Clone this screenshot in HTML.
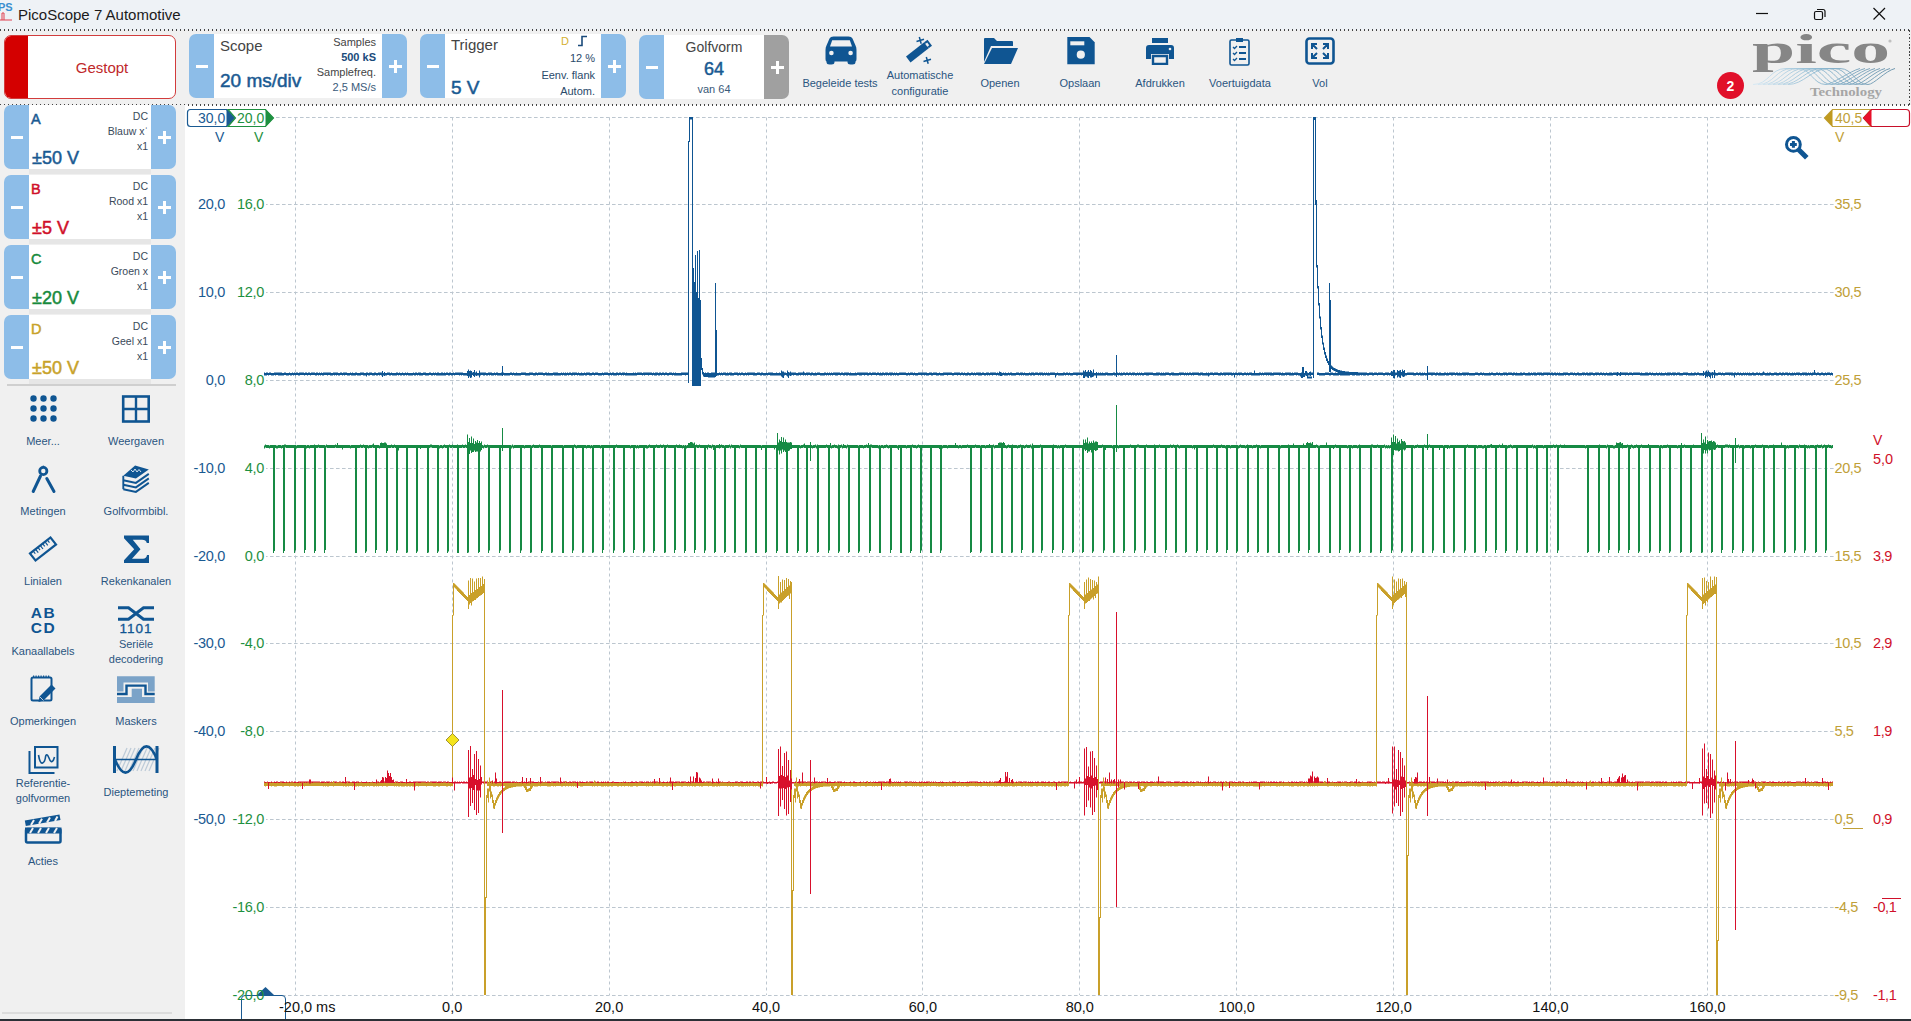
<!DOCTYPE html><html><head><meta charset="utf-8"><style>
*{margin:0;padding:0;box-sizing:border-box}
html,body{width:1911px;height:1021px;overflow:hidden;background:#fff;font-family:"Liberation Sans", sans-serif}
.a{position:absolute;white-space:nowrap}
.t{position:absolute;white-space:nowrap;line-height:1}
.sb{-webkit-text-stroke:.5px currentColor}
</style></head><body><div class="a" style="left:0;top:0;width:1911px;height:30px;background:#eef2f6"></div>
<div class="t" style="left:18px;top:7px;font-size:15px;color:#1b1b1b">PicoScope 7 Automotive</div>
<svg class="a" style="left:0;top:0" width="14" height="24"><text x="-2" y="11" font-family="Liberation Sans" font-size="11" font-weight="bold" fill="#3a8fd0">PS</text><path d="M0 20 H12 M2 20 V13 H4 V20" stroke="#e04050" stroke-width="1" fill="none"/></svg>
<svg class="a" style="left:1740px;top:0" width="171" height="30"><line x1="16" y1="13.5" x2="28" y2="13.5" stroke="#111" stroke-width="1.2"/><rect x="74.5" y="11.5" width="8" height="8" rx="1.5" fill="none" stroke="#111" stroke-width="1.2"/><path d="M77 9.5 H83 Q85 9.5 85 11.5 V17" fill="none" stroke="#111" stroke-width="1.2"/><path d="M133.5 8 L145 19.5 M145 8 L133.5 19.5" stroke="#111" stroke-width="1.2"/></svg>
<div class="a" style="left:0;top:30px;width:1911px;height:75px;background:#f0f0f0"></div>
<div class="a" style="left:0px;top:29px;width:1911px;height:2px;background-image:repeating-linear-gradient(90deg,#1a1a1a 0 1px,transparent 1px 4px);opacity:.8"></div>
<div class="a" style="left:0px;top:104px;width:1911px;height:2px;background-image:repeating-linear-gradient(90deg,#1a1a1a 0 1px,transparent 1px 4px);opacity:.8"></div>
<div class="a" style="left:1909px;top:30px;width:1px;height:75px;background-image:repeating-linear-gradient(180deg,#1a1a1a 0 1.5px,transparent 1.5px 3.5px);opacity:.8"></div>
<div class="a" style="left:4px;top:35px;width:172px;height:64px;border:1.5px solid #d23c3c;border-radius:7px;background:#fff;overflow:hidden"><div class="a" style="left:0;top:0;width:23px;height:62px;background:#d40000"></div></div>
<div class="t" style="left:28px;width:148px;text-align:center;top:60px;font-size:15px;color:#c0282a">Gestopt</div>
<div class="a" style="left:189px;top:34px;width:25px;height:64px;background:#8dbde8;border-radius:7px 0 0 7px"></div>
<div class="a" style="left:214px;top:34px;width:168px;height:64px;background:#fff"></div>
<div class="a" style="left:382px;top:34px;width:25px;height:64px;background:#8dbde8;border-radius:0 7px 7px 0"></div>
<div class="a" style="left:196px;top:64.5px;width:12px;height:3px;background:#fff"></div>
<div class="a" style="left:388.5px;top:64.5px;width:13px;height:3px;background:#fff"></div>
<div class="a" style="left:393.5px;top:59.5px;width:3px;height:13px;background:#fff"></div>
<div class="t" style="left:220px;top:38px;font-size:15px;color:#444">Scope</div>
<div class="t sb" style="left:220px;top:71px;font-size:19px;color:#1a5a92">20 ms/div</div>
<div class="t" style="left:296px;width:80px;text-align:right;top:37px;font-size:11px;color:#444">Samples</div>
<div class="t" style="left:296px;width:80px;text-align:right;top:52px;font-size:11px;color:#1a4a7a;font-weight:bold">500 kS</div>
<div class="t" style="left:296px;width:80px;text-align:right;top:67px;font-size:11px;color:#444">Samplefreq.</div>
<div class="t" style="left:296px;width:80px;text-align:right;top:82px;font-size:11px;color:#3a5a7a">2,5 MS/s</div>
<div class="a" style="left:420px;top:34px;width:25px;height:64px;background:#8dbde8;border-radius:7px 0 0 7px"></div>
<div class="a" style="left:445px;top:34px;width:156px;height:64px;background:#fff"></div>
<div class="a" style="left:601px;top:34px;width:25px;height:64px;background:#8dbde8;border-radius:0 7px 7px 0"></div>
<div class="a" style="left:427px;top:64.5px;width:12px;height:3px;background:#fff"></div>
<div class="a" style="left:607.5px;top:64.5px;width:13px;height:3px;background:#fff"></div>
<div class="a" style="left:612.5px;top:59.5px;width:3px;height:13px;background:#fff"></div>
<div class="t" style="left:451px;top:37px;font-size:15px;color:#444">Trigger</div>
<div class="t sb" style="left:451px;top:78px;font-size:19px;color:#1a5a92">5 V</div>
<div class="t" style="left:561px;top:36px;font-size:11px;color:#d4b030">D</div>
<svg class="a" style="left:577px;top:35px" width="12" height="12"><path d="M1 10.5 H5 V1.5 H10" fill="none" stroke="#1a4a7a" stroke-width="1.6"/></svg>
<div class="t" style="left:495px;width:100px;text-align:right;top:53px;font-size:11px;color:#2a4a6a">12 %</div>
<div class="t" style="left:495px;width:100px;text-align:right;top:70px;font-size:11px;color:#2a4a6a">Eenv. flank</div>
<div class="t" style="left:495px;width:100px;text-align:right;top:86px;font-size:11px;color:#2a4a6a">Autom.</div>
<div class="a" style="left:639px;top:35px;width:25px;height:64px;background:#8dbde8;border-radius:7px 0 0 7px"></div>
<div class="a" style="left:664px;top:35px;width:100px;height:64px;background:#fff"></div>
<div class="a" style="left:764px;top:35px;width:25px;height:64px;background:#a0a0a0;border-radius:0 7px 7px 0"></div>
<div class="a" style="left:646px;top:65.5px;width:12px;height:3px;background:#fff"></div>
<div class="a" style="left:770.5px;top:65.5px;width:13px;height:3px;background:#fff"></div>
<div class="a" style="left:775.5px;top:60.5px;width:3px;height:13px;background:#fff"></div>
<div class="t" style="left:664px;width:100px;text-align:center;top:40px;font-size:14px;color:#444">Golfvorm</div>
<div class="t sb" style="left:664px;width:100px;text-align:center;top:60px;font-size:18px;color:#1a5a92">64</div>
<div class="t" style="left:664px;width:100px;text-align:center;top:84px;font-size:11px;color:#3a5a7a">van 64</div>
<svg class="a" style="left:820px;top:32px" width="40" height="36" viewBox="820 32 40 36"><path d="M829.5 38.5 Q830.5 36.5 833.5 36.5 H848.5 Q851.5 36.5 852.5 38.5 L855.5 45.5 Q856.5 47 856.5 50 V59 Q856.5 61 855.5 61.5 V62 Q855.5 64.5 852.5 64.5 H850.5 Q847.5 64.5 847.5 62 V61.5 H834.5 V62 Q834.5 64.5 831.5 64.5 H829.5 Q826.5 64.5 826.5 62 V61.5 Q825.5 61 825.5 59 V50 Q825.5 47 826.5 45.5 Z" fill="#0f5592"/><path d="M830 46.5 L832.2 40.2 H849.8 L852 46.5 Z" fill="#f0f0f0"/><circle cx="831.4" cy="53" r="2.3" fill="#f0f0f0"/><circle cx="850.6" cy="53" r="2.3" fill="#f0f0f0"/></svg>
<div class="t" style="left:780px;width:120px;text-align:center;top:78px;font-size:11px;color:#2a5580">Begeleide tests</div>
<svg class="a" style="left:900px;top:32px" width="40" height="36" viewBox="900 32 40 36"><path d="M906 56.5 L924.5 42 L929 48 L910.5 62.5 Z" fill="#0f5592"/><path d="M924.5 42 L927.5 39.7 L932 45.7 L929 48 Z" fill="#0f5592"/><path d="M925.3 44 L927.2 42.5 L929.2 45.2 L927.3 46.7 Z" fill="#f0f0f0"/><path d="M916.5 41.5 L924 39.3 M919.3 37 L921.2 43.8 M923.5 61.5 L931 59.3 M926.3 57 L928.2 63.8" stroke="#0f5592" stroke-width="1.5"/></svg>
<div class="t" style="left:860px;width:120px;text-align:center;top:70px;font-size:11px;color:#2a5580">Automatische</div>
<div class="t" style="left:860px;width:120px;text-align:center;top:86px;font-size:11px;color:#2a5580">configuratie</div>
<svg class="a" style="left:983px;top:37px" width="36" height="28" viewBox="0 0 36 28"><path d="M1 2 Q1 1 2 1 H11 L14 4 H29 Q30 4 30 5 V9 H8 L1 25 Z" fill="#0f5592"/><path d="M9 11 H35 L28 27 H1 Z" fill="#0f5592"/></svg>
<div class="t" style="left:940px;width:120px;text-align:center;top:78px;font-size:11px;color:#2a5580">Openen</div>
<svg class="a" style="left:1060px;top:32px" width="40" height="36" viewBox="1060 32 40 36"><path d="M1067.3 37.1 H1089.5 L1094.7 42.3 V64.2 H1067.3 Z" fill="#0f5592"/><rect x="1070.3" y="41.3" width="14" height="4" fill="#f0f0f0"/><circle cx="1080.8" cy="54.7" r="4.1" fill="#f0f0f0"/></svg>
<div class="t" style="left:1020px;width:120px;text-align:center;top:78px;font-size:11px;color:#2a5580">Opslaan</div>
<svg class="a" style="left:1145px;top:37px" width="30" height="28" viewBox="0 0 30 28"><rect x="7" y="1" width="16" height="5" fill="#0f5592"/><path d="M1 11 Q1 8 4 8 H26 Q29 8 29 11 V22 H24 V17 H6 V22 H1 Z" fill="#0f5592"/><path d="M8 19 H22 V27 H8 Z" fill="none" stroke="#0f5592" stroke-width="2.4"/><circle cx="25" cy="12" r="1.3" fill="#f0f0f0"/></svg>
<div class="t" style="left:1100px;width:120px;text-align:center;top:78px;font-size:11px;color:#2a5580">Afdrukken</div>
<svg class="a" style="left:1228px;top:36px" width="24" height="30" viewBox="0 0 24 30"><rect x="2" y="4" width="19" height="25" rx="1.5" fill="none" stroke="#0f5592" stroke-width="1.6"/><rect x="8" y="2" width="7" height="4" fill="#0f5592"/><path d="M5 11 L6.5 12.5 L9 10 M5 17 L6.5 18.5 L9 16 M5 23 L6.5 24.5 L9 22" stroke="#0f5592" stroke-width="1.3" fill="none"/><path d="M11 11 H18 M11 17 H18 M11 23 H18" stroke="#0f5592" stroke-width="2"/></svg>
<div class="t" style="left:1180px;width:120px;text-align:center;top:78px;font-size:11px;color:#2a5580">Voertuigdata</div>
<svg class="a" style="left:1305px;top:37px" width="30" height="28" viewBox="0 0 30 28"><rect x="1.5" y="1.5" width="27" height="25" rx="3" fill="none" stroke="#0f5592" stroke-width="2.6"/><path d="M7 12 V7 H12 M7 7 L12 12 M23 12 V7 H18 M23 7 L18 12 M7 16 V21 H12 M7 21 L12 16 M23 16 V21 H18 M23 21 L18 16" stroke="#0f5592" stroke-width="2" fill="none"/></svg>
<div class="t" style="left:1260px;width:120px;text-align:center;top:78px;font-size:11px;color:#2a5580">Vol</div>
<svg class="a" style="left:1740px;top:28px" width="171" height="76" viewBox="1740 28 171 76"><defs><linearGradient id="wg" x1="1753" y1="0" x2="1900" y2="0" gradientUnits="userSpaceOnUse"><stop offset="0" stop-color="#d4e8f4"/><stop offset="0.45" stop-color="#8db8d0"/><stop offset="1" stop-color="#5f8aa4"/></linearGradient></defs><text x="1752" y="62.6" font-family="Liberation Serif" font-weight="bold" font-size="43" fill="#868686" textLength="138" lengthAdjust="spacingAndGlyphs">pico</text><text x="1810" y="96.2" font-family="Liberation Serif" font-weight="bold" font-size="12" fill="#a6a6a6" textLength="72" lengthAdjust="spacingAndGlyphs">Technology</text><path d="M1753 84.5 C1769 84.5 1770 68.5 1786 68.5 L1798 68.5 C1811 68.5 1813 84.5 1826 84.5 C1832 84.5 1850 71 1860 68.5" fill="none" stroke="url(#wg)" stroke-width="0.9"/><path d="M1758 84.5 C1774 84.5 1776 68.5 1792 68.5 L1804 68.5 C1817 68.5 1819 84.5 1832 84.5 C1838 84.5 1855 71 1865 68.5" fill="none" stroke="url(#wg)" stroke-width="0.9"/><path d="M1763 84.5 C1779 84.5 1782 68.5 1798 68.5 L1810 68.5 C1823 68.5 1825 84.5 1838 84.5 C1844 84.5 1860 71 1870 68.5" fill="none" stroke="url(#wg)" stroke-width="0.9"/><path d="M1768 84.5 C1784 84.5 1788 68.5 1804 68.5 L1816 68.5 C1829 68.5 1831 84.5 1844 84.5 C1850 84.5 1865 71 1875 68.5" fill="none" stroke="url(#wg)" stroke-width="0.9"/><path d="M1773 84.5 C1789 84.5 1794 68.5 1810 68.5 L1822 68.5 C1835 68.5 1837 84.5 1850 84.5 C1856 84.5 1870 71 1880 68.5" fill="none" stroke="url(#wg)" stroke-width="0.9"/><path d="M1778 84.5 C1794 84.5 1800 68.5 1816 68.5 L1828 68.5 C1841 68.5 1843 84.5 1856 84.5 C1862 84.5 1875 71 1885 68.5" fill="none" stroke="url(#wg)" stroke-width="0.9"/><path d="M1783 84.5 C1799 84.5 1806 68.5 1822 68.5 L1834 68.5 C1847 68.5 1849 84.5 1862 84.5 C1868 84.5 1880 71 1890 68.5" fill="none" stroke="url(#wg)" stroke-width="0.9"/><path d="M1788 84.5 C1804 84.5 1812 68.5 1828 68.5 L1840 68.5 C1853 68.5 1855 84.5 1868 84.5 C1874 84.5 1885 71 1895 68.5" fill="none" stroke="url(#wg)" stroke-width="0.9"/><circle cx="1890" cy="41" r="1.6" fill="#c0c0c0"/></svg>
<div class="a" style="left:1717px;top:72px;width:27px;height:27px;border-radius:50%;background:#e1102a"></div>
<div class="t" style="left:1717px;width:27px;text-align:center;top:79px;font-size:14px;font-weight:bold;color:#fff">2</div>
<div class="a" style="left:0;top:105px;width:185px;height:915px;background:#f0f0f0"></div>
<div class="a" style="left:4px;top:105px;width:25px;height:64px;background:#8dbde8;border-radius:7px 0 0 7px"></div>
<div class="a" style="left:29px;top:105px;width:122px;height:64px;background:#fff"></div>
<div class="a" style="left:151px;top:105px;width:25px;height:64px;background:#8dbde8;border-radius:0 7px 7px 0"></div>
<div class="a" style="left:11px;top:135.5px;width:12px;height:3px;background:#fff"></div>
<div class="a" style="left:157.5px;top:135.5px;width:13px;height:3px;background:#fff"></div>
<div class="a" style="left:162.5px;top:130.5px;width:3px;height:13px;background:#fff"></div>
<div class="a" style="left:29px;top:169px;width:122px;height:5px;background:#e6e6e6"></div>
<div class="t sb" style="left:31px;top:112px;font-size:14.5px;color:#1a5a92">A</div>
<div class="t sb" style="left:32px;top:149px;font-size:18px;color:#1a5a92">±50 V</div>
<div class="t" style="left:68px;width:80px;text-align:right;top:111px;font-size:10.5px;color:#3a4a5a">DC</div>
<div class="t" style="left:68px;width:80px;text-align:right;top:126px;font-size:10.5px;color:#3a4a5a">Blauw x&#x2c8;</div>
<div class="t" style="left:68px;width:80px;text-align:right;top:141px;font-size:10.5px;color:#3a4a5a">x1</div>
<div class="a" style="left:4px;top:175px;width:25px;height:64px;background:#8dbde8;border-radius:7px 0 0 7px"></div>
<div class="a" style="left:29px;top:175px;width:122px;height:64px;background:#fff"></div>
<div class="a" style="left:151px;top:175px;width:25px;height:64px;background:#8dbde8;border-radius:0 7px 7px 0"></div>
<div class="a" style="left:11px;top:205.5px;width:12px;height:3px;background:#fff"></div>
<div class="a" style="left:157.5px;top:205.5px;width:13px;height:3px;background:#fff"></div>
<div class="a" style="left:162.5px;top:200.5px;width:3px;height:13px;background:#fff"></div>
<div class="a" style="left:29px;top:239px;width:122px;height:5px;background:#e6e6e6"></div>
<div class="t sb" style="left:31px;top:182px;font-size:14.5px;color:#d0102a">B</div>
<div class="t sb" style="left:32px;top:219px;font-size:18px;color:#d0102a">±5 V</div>
<div class="t" style="left:68px;width:80px;text-align:right;top:181px;font-size:10.5px;color:#3a4a5a">DC</div>
<div class="t" style="left:68px;width:80px;text-align:right;top:196px;font-size:10.5px;color:#3a4a5a">Rood x1</div>
<div class="t" style="left:68px;width:80px;text-align:right;top:211px;font-size:10.5px;color:#3a4a5a">x1</div>
<div class="a" style="left:4px;top:245px;width:25px;height:64px;background:#8dbde8;border-radius:7px 0 0 7px"></div>
<div class="a" style="left:29px;top:245px;width:122px;height:64px;background:#fff"></div>
<div class="a" style="left:151px;top:245px;width:25px;height:64px;background:#8dbde8;border-radius:0 7px 7px 0"></div>
<div class="a" style="left:11px;top:275.5px;width:12px;height:3px;background:#fff"></div>
<div class="a" style="left:157.5px;top:275.5px;width:13px;height:3px;background:#fff"></div>
<div class="a" style="left:162.5px;top:270.5px;width:3px;height:13px;background:#fff"></div>
<div class="a" style="left:29px;top:309px;width:122px;height:5px;background:#e6e6e6"></div>
<div class="t sb" style="left:31px;top:252px;font-size:14.5px;color:#178a3c">C</div>
<div class="t sb" style="left:32px;top:289px;font-size:18px;color:#178a3c">±20 V</div>
<div class="t" style="left:68px;width:80px;text-align:right;top:251px;font-size:10.5px;color:#3a4a5a">DC</div>
<div class="t" style="left:68px;width:80px;text-align:right;top:266px;font-size:10.5px;color:#3a4a5a">Groen x</div>
<div class="t" style="left:68px;width:80px;text-align:right;top:281px;font-size:10.5px;color:#3a4a5a">x1</div>
<div class="a" style="left:4px;top:315px;width:25px;height:64px;background:#8dbde8;border-radius:7px 0 0 7px"></div>
<div class="a" style="left:29px;top:315px;width:122px;height:64px;background:#fff"></div>
<div class="a" style="left:151px;top:315px;width:25px;height:64px;background:#8dbde8;border-radius:0 7px 7px 0"></div>
<div class="a" style="left:11px;top:345.5px;width:12px;height:3px;background:#fff"></div>
<div class="a" style="left:157.5px;top:345.5px;width:13px;height:3px;background:#fff"></div>
<div class="a" style="left:162.5px;top:340.5px;width:3px;height:13px;background:#fff"></div>
<div class="a" style="left:29px;top:379px;width:122px;height:5px;background:#e6e6e6"></div>
<div class="t sb" style="left:31px;top:322px;font-size:14.5px;color:#c8a22a">D</div>
<div class="t sb" style="left:32px;top:359px;font-size:18px;color:#c8a22a">±50 V</div>
<div class="t" style="left:68px;width:80px;text-align:right;top:321px;font-size:10.5px;color:#3a4a5a">DC</div>
<div class="t" style="left:68px;width:80px;text-align:right;top:336px;font-size:10.5px;color:#3a4a5a">Geel x1</div>
<div class="t" style="left:68px;width:80px;text-align:right;top:351px;font-size:10.5px;color:#3a4a5a">x1</div>
<div class="a" style="left:7px;top:384px;width:169px;height:2px;background:#cfcfcf"></div>
<div class="a" style="left:2px;top:1012px;width:170px;height:2px;background:#dcdcdc"></div>
<div class="t" style="left:-17px;width:120px;text-align:center;top:436px;font-size:11px;color:#2a5580">Meer...</div>
<div class="t" style="left:76px;width:120px;text-align:center;top:436px;font-size:11px;color:#2a5580">Weergaven</div>
<div class="t" style="left:-17px;width:120px;text-align:center;top:506px;font-size:11px;color:#2a5580">Metingen</div>
<div class="t" style="left:76px;width:120px;text-align:center;top:506px;font-size:11px;color:#2a5580">Golfvormbibl.</div>
<div class="t" style="left:-17px;width:120px;text-align:center;top:576px;font-size:11px;color:#2a5580">Linialen</div>
<div class="t" style="left:76px;width:120px;text-align:center;top:576px;font-size:11px;color:#2a5580">Rekenkanalen</div>
<div class="t" style="left:-17px;width:120px;text-align:center;top:646px;font-size:11px;color:#2a5580">Kanaallabels</div>
<div class="t" style="left:-17px;width:120px;text-align:center;top:716px;font-size:11px;color:#2a5580">Opmerkingen</div>
<div class="t" style="left:76px;width:120px;text-align:center;top:716px;font-size:11px;color:#2a5580">Maskers</div>
<div class="t" style="left:-17px;width:120px;text-align:center;top:856px;font-size:11px;color:#2a5580">Acties</div>
<div class="t" style="left:76px;width:120px;text-align:center;top:639px;font-size:11px;color:#2a5580">Seriële</div>
<div class="t" style="left:76px;width:120px;text-align:center;top:654px;font-size:11px;color:#2a5580">decodering</div>
<div class="t" style="left:-17px;width:120px;text-align:center;top:778px;font-size:11px;color:#2a5580">Referentie-</div>
<div class="t" style="left:-17px;width:120px;text-align:center;top:793px;font-size:11px;color:#2a5580">golfvormen</div>
<div class="t" style="left:76px;width:120px;text-align:center;top:787px;font-size:11px;color:#2a5580">Dieptemeting</div>
<svg class="a" style="left:0;top:0" width="185" height="1021"><circle cx="33.5" cy="398.5" r="3.2" fill="#0f5592"/><circle cx="33.5" cy="408.5" r="3.2" fill="#0f5592"/><circle cx="33.5" cy="418.5" r="3.2" fill="#0f5592"/><circle cx="43.5" cy="398.5" r="3.2" fill="#0f5592"/><circle cx="43.5" cy="408.5" r="3.2" fill="#0f5592"/><circle cx="43.5" cy="418.5" r="3.2" fill="#0f5592"/><circle cx="53.5" cy="398.5" r="3.2" fill="#0f5592"/><circle cx="53.5" cy="408.5" r="3.2" fill="#0f5592"/><circle cx="53.5" cy="418.5" r="3.2" fill="#0f5592"/><rect x="123.2" y="396.5" width="25.5" height="25" fill="none" stroke="#0f5592" stroke-width="2.6"/><path d="M136 396 V422 M123 409 H149" stroke="#0f5592" stroke-width="2.4"/><circle cx="43.3" cy="471" r="3.6" fill="none" stroke="#0f5592" stroke-width="2.8"/><path d="M42 466 L44 465.5 L44.5 467.5 Z" fill="#0f5592"/><path d="M40.5 476 L33.2 491.5 M46.8 478.5 L54 491.5" stroke="#0f5592" stroke-width="3" stroke-linecap="round"/><path d="M123.3 475.8 L135.1 465.6 L148.8 469.5 L135.9 478.5 Z" fill="#0f5592"/><path d="M131 470 L133 472 L135 469 L137 472 L139 469.5 L141 472" stroke="#e8f0f8" stroke-width="0.9" fill="none"/><path d="M123.3 480.2 L135.9 482.9 L148.8 473.9" fill="none" stroke="#0f5592" stroke-width="1.9"/><path d="M123.3 484.7 L135.9 487.4 L148.8 478.4" fill="none" stroke="#0f5592" stroke-width="1.9"/><path d="M123.3 489.2 L135.9 491.9 L148.8 482.9" fill="none" stroke="#0f5592" stroke-width="1.9"/><path d="M123.3 475.8 V489.2" stroke="#0f5592" stroke-width="1.9"/><g transform="translate(43 549) rotate(-38)"><rect x="-13" y="-4.5" width="26" height="9" fill="none" stroke="#0f5592" stroke-width="2.2"/><path d="M-9 -4 V-1 M-6 -4 V0 M-3 -4 V-1 M0 -4 V0 M3 -4 V-1 M6 -4 V0 M9 -4 V-1" stroke="#0f5592" stroke-width="1.2"/></g><path d="M124 535.5 L149 535.5 L149 543 L146.8 543 Q146 539.8 142 539.8 L132.8 539.8 L140.5 549.3 L132 558.8 L143 558.8 Q146.3 558.8 147 555 L149 555 L149 563 L124 563 L124 560.3 L134.2 549.3 L124 538.2 Z" fill="#0f5592"/><text x="43.5" y="618" text-anchor="middle" font-family="Liberation Sans" font-weight="bold" font-size="15.5" fill="#0f5592" letter-spacing="1.5">AB</text><text x="43.5" y="633" text-anchor="middle" font-family="Liberation Sans" font-weight="bold" font-size="15.5" fill="#0f5592" letter-spacing="1.5">CD</text><path d="M118 607.8 H128.5 L143.5 619.3 H154 M118 619.3 H128.5 L143.5 607.8 H154" fill="none" stroke="#0f5592" stroke-width="3"/><text x="136" y="633" text-anchor="middle" font-family="Liberation Sans" font-size="13.5" fill="#0f5592" letter-spacing="1" stroke="#0f5592" stroke-width="0.3">1101</text><rect x="31.5" y="677.5" width="20" height="23" rx="1.5" fill="none" stroke="#0f5592" stroke-width="2"/><path d="M33 676.5 H50" stroke="#0f5592" stroke-width="2" stroke-dasharray="1.2 1.3"/><path d="M38.5 702 L39.5 696.5 L51.5 684.5 L55.5 688.5 L43.5 700.5 Z" fill="#0f5592"/><path d="M39.5 696.5 L43.5 700.5" stroke="#f0f0f0" stroke-width="0.8"/><path d="M117 676.3 H154.7 V691.5 H148 V682.5 H123.5 V691.5 H117 Z" fill="#7ba3c8"/><rect x="131.7" y="688.7" width="10.3" height="14.3" fill="#7ba3c8"/><rect x="117" y="697" width="37.7" height="6" fill="#7ba3c8"/><path d="M117 694 H126.5 V685.6 H145.5 V694 H154.7" fill="none" stroke="#0f5592" stroke-width="2.4"/><path d="M29.5 751 V773 H54.5" fill="none" stroke="#0f5592" stroke-width="2"/><rect x="35" y="747" width="22.5" height="20.5" fill="none" stroke="#0f5592" stroke-width="2"/><path d="M38.5 755 Q40 764 42.5 763 Q45 762 45.5 757 Q46.5 752 49 758 Q51 764 53.5 760 L54.5 757" fill="none" stroke="#0f5592" stroke-width="1.6"/><g opacity="0.6"><path d="M117 771 L127 748" stroke="#9ab2c8" stroke-width="1.2"/><path d="M121 771 L131 748" stroke="#9ab2c8" stroke-width="1.2"/><path d="M125 771 L135 748" stroke="#9ab2c8" stroke-width="1.2"/><path d="M129 771 L139 748" stroke="#9ab2c8" stroke-width="1.2"/><path d="M133 771 L143 748" stroke="#9ab2c8" stroke-width="1.2"/><path d="M137 771 L147 748" stroke="#9ab2c8" stroke-width="1.2"/><path d="M141 771 L151 748" stroke="#9ab2c8" stroke-width="1.2"/><path d="M145 771 L155 748" stroke="#9ab2c8" stroke-width="1.2"/><path d="M149 771 L159 748" stroke="#9ab2c8" stroke-width="1.2"/></g><rect x="113" y="771.5" width="46" height="3" fill="#f0f0f0"/><path d="M114.5 746 V773 M157 746 V773" stroke="#0f5592" stroke-width="3"/><path d="M115 759.5 H157" stroke="#0f5592" stroke-width="1.4"/><path d="M115 759.5 C122 777 129 777 136 759.5 S150 742 157 759.5" fill="none" stroke="#0f5592" stroke-width="2.6"/><rect x="26" y="829" width="34.5" height="13.5" rx="1.5" fill="none" stroke="#0f5592" stroke-width="2.5"/><rect x="25" y="827.5" width="36.5" height="6" fill="#0f5592"/><path d="M24.8 820.5 L59.5 814.5 L60.5 820 L25.8 826 Z" fill="#0f5592"/><path d="M31 825 l3 -5 M39 823.8 l3 -5 M47 822.4 l3 -5 M55 821 l2.5 -4.5 M30 833 l3 -5 M38 833 l3 -5 M46 833 l3 -5 M54 833 l3 -5" stroke="#f0f0f0" stroke-width="2"/></svg>
<svg class="a" style="left:0;top:0" width="1911" height="1021"><line x1="295.5" y1="117.5" x2="295.5" y2="995" stroke="#bcc6cf" stroke-width="1" stroke-dasharray="3 3"/><line x1="452.5" y1="117.5" x2="452.5" y2="995" stroke="#bcc6cf" stroke-width="1" stroke-dasharray="3 3"/><line x1="609.5" y1="117.5" x2="609.5" y2="995" stroke="#bcc6cf" stroke-width="1" stroke-dasharray="3 3"/><line x1="766.5" y1="117.5" x2="766.5" y2="995" stroke="#bcc6cf" stroke-width="1" stroke-dasharray="3 3"/><line x1="922.5" y1="117.5" x2="922.5" y2="995" stroke="#bcc6cf" stroke-width="1" stroke-dasharray="3 3"/><line x1="1079.5" y1="117.5" x2="1079.5" y2="995" stroke="#bcc6cf" stroke-width="1" stroke-dasharray="3 3"/><line x1="1236.5" y1="117.5" x2="1236.5" y2="995" stroke="#bcc6cf" stroke-width="1" stroke-dasharray="3 3"/><line x1="1393.5" y1="117.5" x2="1393.5" y2="995" stroke="#bcc6cf" stroke-width="1" stroke-dasharray="3 3"/><line x1="1550.5" y1="117.5" x2="1550.5" y2="995" stroke="#bcc6cf" stroke-width="1" stroke-dasharray="3 3"/><line x1="1707.5" y1="117.5" x2="1707.5" y2="995" stroke="#bcc6cf" stroke-width="1" stroke-dasharray="3 3"/><line x1="266" y1="117.5" x2="1834" y2="117.5" stroke="#bcc6cf" stroke-width="1" stroke-dasharray="3.6 2.4" stroke-dashoffset="2"/><line x1="266" y1="204.5" x2="1834" y2="204.5" stroke="#bcc6cf" stroke-width="1" stroke-dasharray="3.6 2.4" stroke-dashoffset="2"/><line x1="266" y1="292.5" x2="1834" y2="292.5" stroke="#bcc6cf" stroke-width="1" stroke-dasharray="3.6 2.4" stroke-dashoffset="2"/><line x1="266" y1="380.5" x2="1834" y2="380.5" stroke="#bcc6cf" stroke-width="1" stroke-dasharray="3.6 2.4" stroke-dashoffset="2"/><line x1="266" y1="468.5" x2="1834" y2="468.5" stroke="#bcc6cf" stroke-width="1" stroke-dasharray="3.6 2.4" stroke-dashoffset="2"/><line x1="266" y1="556.5" x2="1834" y2="556.5" stroke="#bcc6cf" stroke-width="1" stroke-dasharray="3.6 2.4" stroke-dashoffset="2"/><line x1="266" y1="643.5" x2="1834" y2="643.5" stroke="#bcc6cf" stroke-width="1" stroke-dasharray="3.6 2.4" stroke-dashoffset="2"/><line x1="266" y1="731.5" x2="1834" y2="731.5" stroke="#bcc6cf" stroke-width="1" stroke-dasharray="3.6 2.4" stroke-dashoffset="2"/><line x1="266" y1="819.5" x2="1834" y2="819.5" stroke="#bcc6cf" stroke-width="1" stroke-dasharray="3.6 2.4" stroke-dashoffset="2"/><line x1="266" y1="907.5" x2="1834" y2="907.5" stroke="#bcc6cf" stroke-width="1" stroke-dasharray="3.6 2.4" stroke-dashoffset="2"/><line x1="266" y1="995.5" x2="1834" y2="995.5" stroke="#bcc6cf" stroke-width="1" stroke-dasharray="3.6 2.4" stroke-dashoffset="2"/><path d="M264 372.5h1V375.5h-1ZM265 373h1V375.5h-1ZM266 372.5h1V375.5h-1ZM267 372.5h1V375h-1ZM268 373h1V375.5h-1ZM269 372.5h2V375h-2ZM271 373h3V375.5h-3ZM274 372.5h1V375h-1ZM275 372.5h1V375.5h-1ZM276 372.5h2V375h-2ZM278 372.5h4V375.5h-4ZM282 373h2V375.5h-2ZM284 372.5h2V375h-2ZM286 373h3V375.5h-3ZM289 372.5h1V375h-1ZM290 373h2V375.5h-2ZM292 372.5h1V375h-1ZM293 373h1V375.5h-1ZM294 372.5h1V375h-1ZM295 373h1V375.5h-1ZM296 372.5h2V375h-2ZM298 373h1V375.5h-1ZM299 372.5h1V375.5h-1ZM300 372.5h4V375h-4ZM304 373h1V375.5h-1ZM305 372.5h2V375h-2ZM307 373h1V375.5h-1ZM308 372.5h2V375h-2ZM310 373h1V375.5h-1ZM311 372.5h4V375h-4ZM315 373h1V375.5h-1ZM316 372.5h1V375.5h-1ZM317 372.5h1V375h-1ZM318 373h1V375.5h-1ZM319 372.5h1V375h-1ZM320 373h1V375.5h-1ZM321 372.5h1V375h-1ZM322 373h1V375.5h-1ZM323 372.5h1V375.5h-1ZM324 372.5h3V375h-3ZM327 372.5h1V375.5h-1ZM328 372.5h2V375h-2ZM330 372.5h1V375.5h-1ZM331 373h2V375.5h-2ZM333 372.5h1V375h-1ZM334 372.5h1V375.5h-1ZM335 372.5h1V375h-1ZM336 372.5h1V375.5h-1ZM337 372.5h1V375h-1ZM338 373h2V375.5h-2ZM340 372.5h2V375h-2ZM342 373h1V375.5h-1ZM343 372.5h1V375h-1ZM344 372.5h1V375.5h-1ZM345 372.5h2V375h-2ZM347 373h3V375.5h-3ZM350 372.5h1V375h-1ZM351 373h1V375.5h-1ZM352 372.5h1V375.5h-1ZM353 373h2V375.5h-2ZM355 372.5h1V375.5h-1ZM356 372.5h1V375h-1ZM357 373h3V375.5h-3ZM360 372.5h1V375.5h-1ZM361 372.5h2V375h-2ZM363 372.5h1V375.5h-1ZM364 373h2V375.5h-2ZM366 372.5h1V376.5h-1ZM367 372.5h1V375h-1ZM368 373h1V375.5h-1ZM369 372.5h1V375.5h-1ZM370 372.5h2V375h-2ZM372 373h2V375.5h-2ZM374 372.5h1V375.5h-1ZM375 372.5h1V375h-1ZM376 373h2V375.5h-2ZM378 372.5h1V375h-1ZM379 372.5h1V375.5h-1ZM380 372.5h1V375h-1ZM381 372.5h1V375.5h-1ZM382 371h1V377h-1ZM383 373h1V375.5h-1ZM384 372h1V376h-1ZM385 373h2V375.5h-2ZM387 372.5h2V375h-2ZM389 372.5h1V375.5h-1ZM390 373h1V375.5h-1ZM391 372.5h1V375h-1ZM392 373h4V375.5h-4ZM396 372.5h1V375.5h-1ZM397 372.5h1V375h-1ZM398 373h1V375.5h-1ZM399 372.5h1V375h-1ZM400 373h2V375.5h-2ZM402 372.5h1V375h-1ZM403 373h2V375.5h-2ZM405 372.5h1V375h-1ZM406 373h1V375.5h-1ZM407 372.5h1V375h-1ZM408 373h5V375.5h-5ZM413 372.5h1V375h-1ZM414 373h1V375.5h-1ZM415 372.5h1V375.5h-1ZM416 372.5h1V375h-1ZM417 373h1V375.5h-1ZM418 372.5h1V375h-1ZM419 372.5h2V375.5h-2ZM421 373h2V375.5h-2ZM423 372.5h2V375h-2ZM425 372.5h1V375.5h-1ZM426 373h3V375.5h-3ZM429 372.5h2V375h-2ZM431 373h2V375.5h-2ZM433 372.5h1V375h-1ZM434 373h1V375.5h-1ZM435 372.5h1V375h-1ZM436 373h1V375.5h-1ZM437 372.5h2V375.5h-2ZM439 373h2V375.5h-2ZM441 372.5h2V375.5h-2ZM443 373h1V375.5h-1ZM444 372.5h1V375.5h-1ZM445 373h1V375.5h-1ZM446 372.5h2V375h-2ZM448 373h1V375.5h-1ZM449 372.5h1V375.5h-1ZM450 372.5h1V375h-1ZM451 373h2V375.5h-2ZM453 372.5h1V375h-1ZM454 373h1V375.5h-1ZM455 372.5h4V375h-4ZM459 372.5h1V375.5h-1ZM460 372.5h1V375h-1ZM461 372.5h1V375.5h-1ZM462 372.5h1V375h-1ZM463 373h4V375.5h-4ZM467 371h1V376h-1ZM468 369.5h1V378h-1ZM469 371h1V376.5h-1ZM470 370.5h1V378h-1ZM471 371h1V377.5h-1ZM472 372.5h1V375h-1ZM473 372h1V376h-1ZM474 370h1V377h-1ZM475 372.5h1V375.5h-1ZM476 371.5h1V376h-1ZM477 373h2V375.5h-2ZM479 370.5h1V377.5h-1ZM480 372.5h1V375.5h-1ZM481 372.5h2V375h-2ZM483 372.5h2V375.5h-2ZM485 372.5h1V375h-1ZM486 373h2V375.5h-2ZM488 372.5h1V375h-1ZM489 372.5h1V375.5h-1ZM490 372.5h1V375h-1ZM491 372.5h1V375.5h-1ZM492 373h2V375.5h-2ZM494 372.5h1V375h-1ZM495 373h1V375.5h-1ZM496 372.5h1V375h-1ZM497 372.5h1V375.5h-1ZM498 373h3V375.5h-3ZM501 372.5h1V375.5h-1ZM502 366h1V376h-1ZM503 372.5h1V375h-1ZM504 373h6V375.5h-6ZM510 372.5h2V375h-2ZM512 373h1V375.5h-1ZM513 372.5h1V375h-1ZM514 373h2V375.5h-2ZM516 372.5h1V375.5h-1ZM517 373h4V375.5h-4ZM521 372.5h4V375h-4ZM525 372.5h1V375.5h-1ZM526 373h3V375.5h-3ZM529 372.5h1V375.5h-1ZM530 372.5h3V375h-3ZM533 373h2V375.5h-2ZM535 372.5h1V375.5h-1ZM536 372.5h1V375h-1ZM537 373h1V375.5h-1ZM538 372.5h5V375h-5ZM543 373h2V375.5h-2ZM545 372.5h1V375h-1ZM546 372.5h1V375.5h-1ZM547 373h1V375.5h-1ZM548 372.5h1V375.5h-1ZM549 373h4V375.5h-4ZM553 372.5h1V375h-1ZM554 372.5h4V375.5h-4ZM558 373h3V375.5h-3ZM561 372.5h1V375h-1ZM562 373h1V375.5h-1ZM563 372.5h1V375h-1ZM564 373h1V375.5h-1ZM565 372.5h1V375.5h-1ZM566 373h1V375.5h-1ZM567 372.5h1V375h-1ZM568 373h1V375.5h-1ZM569 372.5h2V375h-2ZM571 373h1V375.5h-1ZM572 372.5h1V375.5h-1ZM573 372.5h1V375h-1ZM574 372.5h1V375.5h-1ZM575 372.5h2V375h-2ZM577 373h1V375.5h-1ZM578 372.5h1V375h-1ZM579 373h2V375.5h-2ZM581 372.5h1V375.5h-1ZM582 373h2V375.5h-2ZM584 372.5h1V375h-1ZM585 373h1V375.5h-1ZM586 372.5h1V375.5h-1ZM587 372.5h2V375h-2ZM589 372.5h1V375.5h-1ZM590 373h2V375.5h-2ZM592 372.5h2V375h-2ZM594 373h1V375.5h-1ZM595 372.5h3V375h-3ZM598 373h4V375.5h-4ZM602 372.5h1V375h-1ZM603 373h1V375.5h-1ZM604 372.5h4V375h-4ZM608 373h2V375.5h-2ZM610 372.5h1V375h-1ZM611 373h1V375.5h-1ZM612 372.5h1V375h-1ZM613 372.5h1V375.5h-1ZM614 373h2V375.5h-2ZM616 372.5h1V375.5h-1ZM617 372.5h1V375h-1ZM618 373h1V375.5h-1ZM619 372.5h2V375h-2ZM621 373h1V375.5h-1ZM622 372.5h1V375h-1ZM623 372.5h1V375.5h-1ZM624 372.5h1V375h-1ZM625 373h1V375.5h-1ZM626 372.5h1V375.5h-1ZM627 373h6V375.5h-6ZM633 372.5h1V375.5h-1ZM634 373h1V375.5h-1ZM635 372.5h1V375.5h-1ZM636 373h1V375.5h-1ZM637 372.5h5V375h-5ZM642 373h1V375.5h-1ZM643 372.5h1V375h-1ZM644 372.5h1V375.5h-1ZM645 372.5h3V375h-3ZM648 372.5h1V375.5h-1ZM649 372.5h3V375h-3ZM652 373h1V375.5h-1ZM653 372.5h1V375h-1ZM654 373h1V375.5h-1ZM655 372.5h2V375.5h-2ZM657 372.5h1V375h-1ZM658 373h1V375.5h-1ZM659 372.5h1V375.5h-1ZM660 372.5h1V375h-1ZM661 373h1V375.5h-1ZM662 372.5h2V375h-2ZM664 373h1V375.5h-1ZM665 372.5h2V375h-2ZM667 373h2V375.5h-2ZM669 372.5h3V375h-3ZM672 373h1V375.5h-1ZM673 372.5h1V375h-1ZM674 373h1V375.5h-1ZM675 372.5h1V375.5h-1ZM676 373h5V375.5h-5ZM681 372.5h1V375.5h-1ZM682 372.5h3V375h-3ZM685 372.5h1V375.5h-1ZM686 372.5h2V375h-2ZM688 141h1V383h-1ZM689 117h1V142h-1ZM690 117h2V119.5h-2ZM692 117h1V386h-1ZM693 268h1V386h-1ZM694 282h1V386h-1ZM695 255h1V386h-1ZM696 292h1V386h-1ZM697 251h1V386h-1ZM698 298h1V386h-1ZM699 250h1V386h-1ZM700 300h1V386h-1ZM701 358h1V370h-1ZM702 368h1V374.5h-1ZM703 372h1V376.5h-1ZM704 373h1V377h-1ZM705 372.5h1V377h-1ZM706 373h1V377h-1ZM707 372.5h1V377h-1ZM708 372.5h1V377.5h-1ZM709 373h2V377.5h-2ZM711 372.5h4V377.5h-4ZM715 283h1V377h-1ZM716 330h1V376h-1ZM717 373h2V375.5h-2ZM719 372.5h1V375h-1ZM720 373h1V375.5h-1ZM721 372.5h1V375h-1ZM722 373h1V375.5h-1ZM723 372.5h2V375h-2ZM725 372.5h1V375.5h-1ZM726 373h1V375.5h-1ZM727 372.5h1V375.5h-1ZM728 373h1V375.5h-1ZM729 372.5h1V375h-1ZM730 372.5h2V375.5h-2ZM732 373h2V375.5h-2ZM734 372.5h3V375h-3ZM737 372.5h1V375.5h-1ZM738 373h1V375.5h-1ZM739 372.5h1V375h-1ZM740 373h1V375.5h-1ZM741 372.5h2V375h-2ZM743 373h2V375.5h-2ZM745 372.5h1V375h-1ZM746 373h1V375.5h-1ZM747 372.5h1V375h-1ZM748 372.5h1V375.5h-1ZM749 372.5h4V375h-4ZM753 372.5h2V375.5h-2ZM755 373h2V375.5h-2ZM757 372.5h3V375h-3ZM760 373h1V375.5h-1ZM761 372.5h1V375.5h-1ZM762 372.5h1V375h-1ZM763 373h3V375.5h-3ZM766 372.5h1V375h-1ZM767 373h1V375.5h-1ZM768 372.5h2V375h-2ZM770 372.5h3V375.5h-3ZM773 373h3V375.5h-3ZM776 372.5h1V375.5h-1ZM777 373h2V375.5h-2ZM779 372.5h1V375.5h-1ZM780 373h1V375.5h-1ZM781 370.5h1V376.5h-1ZM782 371.5h1V377.5h-1ZM783 371.5h1V378h-1ZM784 372.5h1V375.5h-1ZM785 372.5h1V375h-1ZM786 373h1V375.5h-1ZM787 370.5h1V376.5h-1ZM788 372h1V378h-1ZM789 372.5h1V375.5h-1ZM790 371.5h1V376h-1ZM791 372.5h1V375.5h-1ZM792 372.5h1V375h-1ZM793 372.5h1V375.5h-1ZM794 372.5h2V375h-2ZM796 373h2V375.5h-2ZM798 372.5h1V375.5h-1ZM799 372.5h1V375h-1ZM800 372.5h1V375.5h-1ZM801 372.5h2V375h-2ZM803 371.5h1V375.5h-1ZM804 372.5h1V375h-1ZM805 373h1V375.5h-1ZM806 372.5h1V375h-1ZM807 372.5h1V375.5h-1ZM808 372.5h2V375h-2ZM810 373h1V375.5h-1ZM811 372.5h1V375.5h-1ZM812 372.5h1V375h-1ZM813 373h2V375.5h-2ZM815 372.5h1V375.5h-1ZM816 373h1V375.5h-1ZM817 372.5h3V375h-3ZM820 373h4V375.5h-4ZM824 372.5h1V375.5h-1ZM825 372.5h1V375h-1ZM826 373h1V375.5h-1ZM827 372.5h1V375h-1ZM828 373h1V375.5h-1ZM829 372.5h1V375h-1ZM830 373h1V375.5h-1ZM831 372.5h1V375h-1ZM832 373h1V375.5h-1ZM833 372.5h2V375h-2ZM835 372.5h3V375.5h-3ZM838 372.5h2V375h-2ZM840 373h1V375.5h-1ZM841 372.5h2V375h-2ZM843 373h1V375.5h-1ZM844 372.5h1V375.5h-1ZM845 372.5h1V375h-1ZM846 372.5h2V375.5h-2ZM848 372.5h1V375h-1ZM849 373h1V375.5h-1ZM850 372.5h1V375.5h-1ZM851 373h4V375.5h-4ZM855 372.5h1V375.5h-1ZM856 373h1V375.5h-1ZM857 372.5h2V375h-2ZM859 372.5h3V375.5h-3ZM862 372.5h2V375h-2ZM864 372.5h1V375.5h-1ZM865 372.5h2V375h-2ZM867 372.5h1V375.5h-1ZM868 373h1V375.5h-1ZM869 372.5h2V375h-2ZM871 373h1V375.5h-1ZM872 372.5h4V375h-4ZM876 373h1V375.5h-1ZM877 372.5h2V375h-2ZM879 373h1V375.5h-1ZM880 372.5h1V375.5h-1ZM881 373h1V375.5h-1ZM882 372.5h1V375.5h-1ZM883 372.5h1V375h-1ZM884 373h1V375.5h-1ZM885 372.5h1V375h-1ZM886 372.5h1V375.5h-1ZM887 372.5h1V375h-1ZM888 373h1V375.5h-1ZM889 372.5h1V375h-1ZM890 372.5h2V375.5h-2ZM892 372.5h1V375h-1ZM893 373h1V375.5h-1ZM894 372.5h1V375h-1ZM895 373h1V375.5h-1ZM896 372.5h1V375h-1ZM897 373h2V375.5h-2ZM899 372.5h7V375h-7ZM906 373h2V375.5h-2ZM908 372.5h1V375h-1ZM909 373h1V375.5h-1ZM910 372.5h3V375h-3ZM913 373h1V375.5h-1ZM914 372.5h1V375h-1ZM915 373h3V375.5h-3ZM918 372.5h3V375h-3ZM921 372.5h1V375.5h-1ZM922 372.5h2V375h-2ZM924 372.5h1V375.5h-1ZM925 372.5h1V375h-1ZM926 372.5h1V375.5h-1ZM927 373h2V375.5h-2ZM929 372.5h2V375h-2ZM931 372.5h1V375.5h-1ZM932 373h1V375.5h-1ZM933 372.5h3V375h-3ZM936 372.5h1V375.5h-1ZM937 373h2V375.5h-2ZM939 372.5h1V375h-1ZM940 373h3V375.5h-3ZM943 372.5h1V375.5h-1ZM944 372.5h3V375h-3ZM947 372.5h1V375.5h-1ZM948 372.5h4V375h-4ZM952 373h2V375.5h-2ZM954 372.5h3V375h-3ZM957 372.5h1V375.5h-1ZM958 372.5h2V375h-2ZM960 373h1V375.5h-1ZM961 372.5h2V375h-2ZM963 373h1V375.5h-1ZM964 372.5h1V375h-1ZM965 373h2V375.5h-2ZM967 372.5h1V375.5h-1ZM968 372.5h1V375h-1ZM969 373h2V375.5h-2ZM971 372.5h2V375h-2ZM973 373h1V375.5h-1ZM974 372.5h1V375h-1ZM975 373h1V375.5h-1ZM976 372.5h2V375h-2ZM978 372.5h3V375.5h-3ZM981 373h1V375.5h-1ZM982 372.5h2V375h-2ZM984 373h2V375.5h-2ZM986 372.5h1V375h-1ZM987 372.5h1V375.5h-1ZM988 372.5h1V375h-1ZM989 373h1V375.5h-1ZM990 372.5h2V375h-2ZM992 372.5h1V375.5h-1ZM993 372.5h3V375h-3ZM996 373h1V375.5h-1ZM997 372.5h1V375h-1ZM998 373h1V375.5h-1ZM999 371.5h1V375.5h-1ZM1000 372h1V376h-1ZM1001 372.5h1V376h-1ZM1002 373h1V375.5h-1ZM1003 372.5h1V375h-1ZM1004 373h1V375.5h-1ZM1005 372.5h1V375.5h-1ZM1006 373h2V375.5h-2ZM1008 372.5h1V375h-1ZM1009 373h1V375.5h-1ZM1010 372.5h1V375h-1ZM1011 372.5h1V375.5h-1ZM1012 373h4V375.5h-4ZM1016 372.5h3V375h-3ZM1019 373h1V375.5h-1ZM1020 372.5h1V375h-1ZM1021 372.5h1V375.5h-1ZM1022 372.5h1V375h-1ZM1023 373h1V375.5h-1ZM1024 372.5h1V375h-1ZM1025 373h4V375.5h-4ZM1029 372.5h1V375h-1ZM1030 373h1V375.5h-1ZM1031 372.5h1V375.5h-1ZM1032 372.5h1V375h-1ZM1033 372.5h1V375.5h-1ZM1034 373h1V375.5h-1ZM1035 372.5h3V375h-3ZM1038 373h1V375.5h-1ZM1039 372.5h1V375h-1ZM1040 372.5h1V375.5h-1ZM1041 372.5h1V375h-1ZM1042 372.5h1V375.5h-1ZM1043 373h1V375.5h-1ZM1044 372.5h1V375h-1ZM1045 373h1V375.5h-1ZM1046 372.5h1V375h-1ZM1047 373h1V375.5h-1ZM1048 372.5h1V375.5h-1ZM1049 373h1V375.5h-1ZM1050 372.5h5V375h-5ZM1055 373h1V377.5h-1ZM1056 373h1V375.5h-1ZM1057 372.5h1V375h-1ZM1058 373h5V375.5h-5ZM1063 372.5h1V375.5h-1ZM1064 372.5h1V375h-1ZM1065 373h1V375.5h-1ZM1066 372.5h2V375h-2ZM1068 373h1V375.5h-1ZM1069 372.5h1V375h-1ZM1070 373h3V375.5h-3ZM1073 372.5h3V375h-3ZM1076 372.5h2V375.5h-2ZM1078 372.5h3V375h-3ZM1081 372.5h1V375.5h-1ZM1082 372.5h1V375h-1ZM1083 370.5h1V378h-1ZM1084 371.5h1V378h-1ZM1085 370h1V376.5h-1ZM1086 372h1V376.5h-1ZM1087 371.5h1V377.5h-1ZM1088 370h1V378h-1ZM1089 372h1V376h-1ZM1090 370h1V377.5h-1ZM1091 371h1V377.5h-1ZM1092 372.5h1V377h-1ZM1093 369.5h1V376.5h-1ZM1094 373h2V375.5h-2ZM1096 372h1V378h-1ZM1097 373h1V375.5h-1ZM1098 372.5h1V375.5h-1ZM1099 373h1V375.5h-1ZM1100 372.5h1V375.5h-1ZM1101 373h1V375.5h-1ZM1102 372.5h1V375.5h-1ZM1103 373h2V375.5h-2ZM1105 372.5h1V375.5h-1ZM1106 372.5h1V375h-1ZM1107 372.5h1V375.5h-1ZM1108 373h5V375.5h-5ZM1113 372.5h1V375h-1ZM1114 372.5h1V375.5h-1ZM1115 373h1V375.5h-1ZM1116 355h1V377h-1ZM1117 372.5h1V375h-1ZM1118 373h1V375.5h-1ZM1119 372.5h1V375h-1ZM1120 373h1V375.5h-1ZM1121 372.5h1V375.5h-1ZM1122 373h1V375.5h-1ZM1123 372.5h2V375h-2ZM1125 373h1V375.5h-1ZM1126 372.5h2V375h-2ZM1128 373h1V375.5h-1ZM1129 372.5h2V375h-2ZM1131 373h1V375.5h-1ZM1132 372.5h1V375h-1ZM1133 372.5h1V375.5h-1ZM1134 372.5h1V375h-1ZM1135 373h2V375.5h-2ZM1137 372.5h1V375h-1ZM1138 373h1V375.5h-1ZM1139 372.5h1V375h-1ZM1140 373h1V375.5h-1ZM1141 372.5h1V375h-1ZM1142 373h2V375.5h-2ZM1144 372.5h2V375h-2ZM1146 372.5h3V375.5h-3ZM1149 372.5h4V375h-4ZM1153 373h3V375.5h-3ZM1156 372.5h3V375.5h-3ZM1159 372.5h1V375h-1ZM1160 373h1V375.5h-1ZM1161 372.5h1V375.5h-1ZM1162 373h1V375.5h-1ZM1163 372.5h1V375.5h-1ZM1164 373h1V375.5h-1ZM1165 372.5h1V375.5h-1ZM1166 372.5h3V375h-3ZM1169 373h2V375.5h-2ZM1171 372.5h1V375h-1ZM1172 372.5h2V375.5h-2ZM1174 373h5V375.5h-5ZM1179 372.5h1V375h-1ZM1180 372.5h1V375.5h-1ZM1181 372.5h3V375h-3ZM1184 373h1V375.5h-1ZM1185 372.5h1V375h-1ZM1186 373h1V375.5h-1ZM1187 372.5h1V375h-1ZM1188 373h1V375.5h-1ZM1189 372.5h2V375h-2ZM1191 373h1V375.5h-1ZM1192 372.5h1V375h-1ZM1193 372.5h1V375.5h-1ZM1194 372.5h4V375h-4ZM1198 372.5h1V375.5h-1ZM1199 373h1V375.5h-1ZM1200 372.5h1V375.5h-1ZM1201 372.5h1V375h-1ZM1202 372.5h1V375.5h-1ZM1203 373h3V375.5h-3ZM1206 372.5h1V375.5h-1ZM1207 373h1V375.5h-1ZM1208 372.5h1V376.5h-1ZM1209 373h1V375.5h-1ZM1210 372.5h3V375h-3ZM1213 373h1V375.5h-1ZM1214 372.5h4V375h-4ZM1218 373h2V375.5h-2ZM1220 372.5h1V375.5h-1ZM1221 372.5h1V375h-1ZM1222 373h1V375.5h-1ZM1223 372.5h1V375h-1ZM1224 372.5h2V375.5h-2ZM1226 372.5h2V375h-2ZM1228 372.5h1V375.5h-1ZM1229 372.5h2V375h-2ZM1231 372.5h1V375.5h-1ZM1232 373h1V375.5h-1ZM1233 372.5h1V375h-1ZM1234 373h1V377.5h-1ZM1235 372.5h2V375h-2ZM1237 373h1V375.5h-1ZM1238 372.5h1V375h-1ZM1239 372.5h1V375.5h-1ZM1240 372.5h2V375h-2ZM1242 373h2V375.5h-2ZM1244 372.5h2V375h-2ZM1246 373h1V375.5h-1ZM1247 372.5h1V375h-1ZM1248 373h1V375.5h-1ZM1249 372.5h2V375h-2ZM1251 372.5h1V375.5h-1ZM1252 373h2V375.5h-2ZM1254 370.5h1V375.5h-1ZM1255 373h4V375.5h-4ZM1259 372.5h1V375.5h-1ZM1260 372.5h1V375h-1ZM1261 373h1V375.5h-1ZM1262 372.5h1V375h-1ZM1263 373h1V375.5h-1ZM1264 372.5h2V375h-2ZM1266 372.5h1V375.5h-1ZM1267 372.5h1V375h-1ZM1268 372.5h1V375.5h-1ZM1269 372.5h1V375h-1ZM1270 372.5h2V375.5h-2ZM1272 373h1V375.5h-1ZM1273 372.5h1V375.5h-1ZM1274 372.5h5V375h-5ZM1279 372.5h1V375.5h-1ZM1280 372.5h1V375h-1ZM1281 373h1V375.5h-1ZM1282 372.5h1V375.5h-1ZM1283 373h2V375.5h-2ZM1285 372.5h1V375h-1ZM1286 372.5h1V375.5h-1ZM1287 372.5h2V375h-2ZM1289 372.5h2V375.5h-2ZM1291 373h1V375.5h-1ZM1292 372.5h1V375.5h-1ZM1293 373h1V375.5h-1ZM1294 372.5h2V375h-2ZM1296 372.5h1V375.5h-1ZM1297 372.5h1V375h-1ZM1298 373h2V375.5h-2ZM1300 373h1V376.5h-1ZM1301 372.5h1V378h-1ZM1302 367h1V378h-1ZM1303 367h1V377h-1ZM1304 373h1V377h-1ZM1305 371h1V375.5h-1ZM1306 371h1V376h-1ZM1307 372.5h1V378.5h-1ZM1308 373h1V375.5h-1ZM1308 376.5h1V378.5h-1ZM1309 372h1V375.5h-1ZM1309 376.5h1V378.5h-1ZM1310 371.5h1V376h-1ZM1310 376.5h1V378.5h-1ZM1311 372.5h1V375h-1ZM1311 376.5h1V378.5h-1ZM1312 372.5h1V375h-1ZM1313 117h1V378h-1ZM1314 117h1V120h-1ZM1315 117h1V205h-1ZM1316 200h1V267.5h-1ZM1317 265h1V288.5h-1ZM1317 372.5h1V375h-1ZM1318 286h1V305.5h-1ZM1318 372.5h1V375h-1ZM1319 303h1V318.5h-1ZM1319 373h1V375.5h-1ZM1320 316.5h1V329.5h-1ZM1320 373h1V375.5h-1ZM1321 327h1V338h-1ZM1321 373h1V375.5h-1ZM1322 335.5h1V344.5h-1ZM1322 373h1V375.5h-1ZM1323 342.5h1V350h-1ZM1323 373h1V375.5h-1ZM1324 347.5h1V354.5h-1ZM1324 373h1V375.5h-1ZM1325 352h1V358h-1ZM1325 372.5h1V375h-1ZM1326 355.5h1V361h-1ZM1326 372.5h1V375h-1ZM1327 358.5h1V363h-1ZM1327 372.5h1V375h-1ZM1328 361h1V365h-1ZM1328 372.5h1V375h-1ZM1329 283h1V372h-1ZM1329 373h1V375.5h-1ZM1330 300h1V372h-1ZM1330 372.5h1V375.5h-1ZM1331 365.5h1V369h-1ZM1331 372.5h1V375h-1ZM1332 366.5h1V370h-1ZM1332 372.5h1V375h-1ZM1333 367.5h1V370.5h-1ZM1333 373h1V375.5h-1ZM1334 368h1V371h-1ZM1334 373h1V375.5h-1ZM1335 368.5h1V371.5h-1ZM1335 372.5h1V375.5h-1ZM1336 369h1V372h-1ZM1336 373h1V375.5h-1ZM1337 369.5h1V372.5h-1ZM1337 373h1V375.5h-1ZM1338 370h1V375.5h-1ZM1339 370h1V375h-1ZM1340 370.5h2V375.5h-2ZM1342 371h3V375.5h-3ZM1345 371.5h4V375.5h-4ZM1349 372h1V375.5h-1ZM1350 372h2V375h-2ZM1352 372h3V375.5h-3ZM1355 372h1V375h-1ZM1356 372h2V375.5h-2ZM1358 372.5h2V375.5h-2ZM1360 372.5h1V375h-1ZM1361 372.5h1V375.5h-1ZM1362 372.5h1V375h-1ZM1363 372.5h3V375.5h-3ZM1366 372.5h1V375h-1ZM1367 373h2V375.5h-2ZM1369 372.5h3V375h-3ZM1372 372.5h1V375.5h-1ZM1373 373h1V375.5h-1ZM1374 372.5h3V375h-3ZM1377 373h1V375.5h-1ZM1378 372.5h5V375h-5ZM1383 373h2V375.5h-2ZM1385 372.5h2V375h-2ZM1387 372.5h1V375.5h-1ZM1388 372.5h1V375h-1ZM1389 373h1V375.5h-1ZM1390 372.5h1V375h-1ZM1391 371h1V376h-1ZM1392 371.5h1V376h-1ZM1393 370h1V378h-1ZM1394 370h1V378.5h-1ZM1395 372.5h1V375.5h-1ZM1396 372.5h1V375h-1ZM1397 370h1V377.5h-1ZM1398 371h1V376.5h-1ZM1399 370.5h1V377.5h-1ZM1400 370h1V378h-1ZM1401 372h1V375.5h-1ZM1402 369.5h1V376.5h-1ZM1403 371h1V377h-1ZM1404 370h1V376.5h-1ZM1405 373h2V375.5h-2ZM1407 372.5h6V375h-6ZM1413 372.5h1V375.5h-1ZM1414 373h2V375.5h-2ZM1416 372.5h2V375h-2ZM1418 373h1V375.5h-1ZM1419 372.5h1V375h-1ZM1420 372.5h1V375.5h-1ZM1421 373h1V375.5h-1ZM1422 372.5h1V375.5h-1ZM1423 373h1V375.5h-1ZM1424 372.5h1V375h-1ZM1425 373h2V375.5h-2ZM1427 366h1V380h-1ZM1428 372.5h3V375h-3ZM1431 372.5h2V375.5h-2ZM1433 372.5h2V375h-2ZM1435 373h1V375.5h-1ZM1436 372.5h1V375.5h-1ZM1437 372.5h1V375h-1ZM1438 373h1V375.5h-1ZM1439 372.5h2V375.5h-2ZM1441 373h3V375.5h-3ZM1444 372.5h1V375.5h-1ZM1445 372.5h1V375h-1ZM1446 373h1V375.5h-1ZM1447 372.5h1V375.5h-1ZM1448 373h1V375.5h-1ZM1449 372.5h2V375h-2ZM1451 372.5h2V375.5h-2ZM1453 372.5h2V375h-2ZM1455 373h1V375.5h-1ZM1456 372.5h1V375h-1ZM1457 372.5h1V375.5h-1ZM1458 373h1V375.5h-1ZM1459 372.5h1V375.5h-1ZM1460 373h2V375.5h-2ZM1462 372.5h1V375h-1ZM1463 372.5h3V375.5h-3ZM1466 372.5h1V375h-1ZM1467 372.5h1V375.5h-1ZM1468 372.5h1V375h-1ZM1469 373h6V375.5h-6ZM1475 372.5h3V375h-3ZM1478 373h2V375.5h-2ZM1480 372.5h2V375h-2ZM1482 373h1V375.5h-1ZM1483 372.5h1V375h-1ZM1484 373h5V375.5h-5ZM1489 372.5h1V375.5h-1ZM1490 373h1V375.5h-1ZM1491 372.5h2V375h-2ZM1493 373h3V375.5h-3ZM1496 372.5h2V375h-2ZM1498 373h1V375.5h-1ZM1499 372.5h1V375h-1ZM1500 373h3V375.5h-3ZM1503 372.5h1V375h-1ZM1504 372.5h1V375.5h-1ZM1505 372.5h1V375h-1ZM1506 372.5h1V375.5h-1ZM1507 373h1V375.5h-1ZM1508 372.5h4V375h-4ZM1512 373h1V375.5h-1ZM1513 372.5h1V375.5h-1ZM1514 372.5h1V375h-1ZM1515 373h1V375.5h-1ZM1516 372.5h1V375.5h-1ZM1517 373h3V375.5h-3ZM1520 372.5h2V375.5h-2ZM1522 373h1V375.5h-1ZM1523 372.5h2V375h-2ZM1525 373h3V375.5h-3ZM1528 372.5h2V375.5h-2ZM1530 373h1V375.5h-1ZM1531 372.5h1V375h-1ZM1532 373h1V375.5h-1ZM1533 372.5h1V375h-1ZM1534 372.5h2V375.5h-2ZM1536 373h1V375.5h-1ZM1537 372.5h2V375h-2ZM1539 372.5h1V375.5h-1ZM1540 372.5h1V375h-1ZM1541 372.5h1V375.5h-1ZM1542 373h1V375.5h-1ZM1543 372.5h1V375.5h-1ZM1544 372.5h3V375h-3ZM1547 372.5h1V375.5h-1ZM1548 372.5h2V375h-2ZM1550 373h1V375.5h-1ZM1551 372.5h1V375h-1ZM1552 372.5h1V375.5h-1ZM1553 373h1V375.5h-1ZM1554 372.5h1V375h-1ZM1555 372.5h1V375.5h-1ZM1556 373h1V375.5h-1ZM1557 372.5h1V375h-1ZM1558 373h1V375.5h-1ZM1559 372.5h1V375.5h-1ZM1560 373h3V375.5h-3ZM1563 372.5h1V375.5h-1ZM1564 372.5h1V375h-1ZM1565 372.5h1V375.5h-1ZM1566 372.5h2V375h-2ZM1568 373h2V375.5h-2ZM1570 372.5h3V375h-3ZM1573 373h1V375.5h-1ZM1574 372.5h1V375h-1ZM1575 373h2V375.5h-2ZM1577 372.5h1V375h-1ZM1578 372.5h1V375.5h-1ZM1579 373h3V375.5h-3ZM1582 372.5h1V375h-1ZM1583 372.5h1V375.5h-1ZM1584 372.5h1V375h-1ZM1585 373h1V375.5h-1ZM1586 372.5h1V375h-1ZM1587 372.5h1V375.5h-1ZM1588 373h1V375.5h-1ZM1589 372.5h2V375.5h-2ZM1591 372.5h2V375h-2ZM1593 373h2V375.5h-2ZM1595 372.5h1V375h-1ZM1596 372.5h1V375.5h-1ZM1597 372.5h2V375h-2ZM1599 373h1V375.5h-1ZM1600 372.5h2V375h-2ZM1602 373h1V375.5h-1ZM1603 372.5h1V375h-1ZM1604 373h2V375.5h-2ZM1606 372.5h1V375h-1ZM1607 373h2V375.5h-2ZM1609 372.5h3V375.5h-3ZM1612 373h1V375.5h-1ZM1613 372.5h3V375h-3ZM1616 372.5h1V375.5h-1ZM1617 372h1V376h-1ZM1618 372.5h1V375h-1ZM1619 373h1V375.5h-1ZM1620 372h1V376h-1ZM1621 372.5h4V375h-4ZM1625 372.5h1V375.5h-1ZM1626 372.5h2V375h-2ZM1628 373h1V375.5h-1ZM1629 372.5h3V375h-3ZM1632 373h1V375.5h-1ZM1633 372.5h7V375h-7ZM1640 373h1V375.5h-1ZM1641 372.5h1V375.5h-1ZM1642 373h3V375.5h-3ZM1645 372.5h3V375.5h-3ZM1648 373h1V375.5h-1ZM1649 372.5h2V375h-2ZM1651 373h1V375.5h-1ZM1652 372.5h1V375h-1ZM1653 373h3V375.5h-3ZM1656 372.5h1V375h-1ZM1657 373h2V375.5h-2ZM1659 372.5h1V375h-1ZM1660 373h1V375.5h-1ZM1661 372.5h1V375.5h-1ZM1662 373h3V375.5h-3ZM1665 372.5h1V375h-1ZM1666 373h1V375.5h-1ZM1667 372.5h3V375.5h-3ZM1670 372.5h1V375h-1ZM1671 373h1V375.5h-1ZM1672 372.5h1V375h-1ZM1673 372.5h2V375.5h-2ZM1675 372.5h1V375h-1ZM1676 373h1V375.5h-1ZM1677 372.5h2V375h-2ZM1679 372.5h1V375.5h-1ZM1680 373h3V375.5h-3ZM1683 372.5h3V375h-3ZM1686 372.5h1V375.5h-1ZM1687 372.5h1V375h-1ZM1688 373h3V375.5h-3ZM1691 372.5h1V375.5h-1ZM1692 373h2V375.5h-2ZM1694 372.5h1V375.5h-1ZM1695 372.5h1V375h-1ZM1696 373h1V375.5h-1ZM1697 372.5h2V375h-2ZM1699 373h4V375.5h-4ZM1703 371h1V376h-1ZM1704 372.5h1V375h-1ZM1705 371.5h1V378h-1ZM1706 370.5h1V376.5h-1ZM1707 372h1V377h-1ZM1708 370.5h1V376h-1ZM1709 372h1V377h-1ZM1710 372.5h1V378.5h-1ZM1711 372.5h1V375.5h-1ZM1712 372h1V378h-1ZM1713 372.5h1V375h-1ZM1714 370h1V378h-1ZM1715 372.5h1V375.5h-1ZM1716 373h2V375.5h-2ZM1718 372.5h3V375h-3ZM1721 373h1V375.5h-1ZM1722 372.5h1V375h-1ZM1723 373h2V375.5h-2ZM1725 372.5h4V375h-4ZM1729 372.5h1V375.5h-1ZM1730 372.5h1V375h-1ZM1731 372.5h2V375.5h-2ZM1733 373h1V375.5h-1ZM1734 372.5h1V377.5h-1ZM1735 372.5h1V375h-1ZM1736 373h1V375.5h-1ZM1737 372.5h2V375h-2ZM1739 373h1V375.5h-1ZM1740 372.5h1V375h-1ZM1741 373h2V375.5h-2ZM1743 372.5h1V375h-1ZM1744 373h1V375.5h-1ZM1745 372.5h1V375h-1ZM1746 373h1V375.5h-1ZM1747 372.5h1V375h-1ZM1748 373h1V375.5h-1ZM1749 372.5h1V375.5h-1ZM1750 373h2V375.5h-2ZM1752 372.5h1V375h-1ZM1753 372.5h1V375.5h-1ZM1754 373h2V375.5h-2ZM1756 372.5h2V375h-2ZM1758 373h1V375.5h-1ZM1759 372.5h1V375h-1ZM1760 373h2V375.5h-2ZM1762 372.5h1V375.5h-1ZM1763 371.5h1V375h-1ZM1764 372.5h1V375h-1ZM1765 373h2V375.5h-2ZM1767 372.5h1V375.5h-1ZM1768 373h1V375.5h-1ZM1769 372.5h1V375.5h-1ZM1770 372.5h1V375h-1ZM1771 373h3V375.5h-3ZM1774 372.5h2V375h-2ZM1776 372.5h1V375.5h-1ZM1777 373h2V375.5h-2ZM1779 372.5h2V375h-2ZM1781 373h1V375.5h-1ZM1782 372.5h1V375.5h-1ZM1783 372.5h1V375h-1ZM1784 373h1V375.5h-1ZM1785 372.5h2V375h-2ZM1787 372.5h1V375.5h-1ZM1788 373h1V375.5h-1ZM1789 372.5h1V375h-1ZM1790 373h2V375.5h-2ZM1792 372.5h1V375.5h-1ZM1793 373h1V375.5h-1ZM1794 372.5h1V375h-1ZM1795 373h1V375.5h-1ZM1796 372.5h2V375h-2ZM1798 372.5h1V375.5h-1ZM1799 372.5h1V375h-1ZM1800 373h2V375.5h-2ZM1802 372.5h1V375h-1ZM1803 372.5h1V375.5h-1ZM1804 372.5h1V375h-1ZM1805 372.5h2V375.5h-2ZM1807 373h1V375.5h-1ZM1808 372.5h1V375h-1ZM1809 373h1V375.5h-1ZM1810 372.5h1V375h-1ZM1811 373h1V375.5h-1ZM1812 372.5h1V375.5h-1ZM1813 372.5h1V375h-1ZM1814 370h1V375h-1ZM1815 372.5h1V375h-1ZM1816 373h1V375.5h-1ZM1817 372.5h2V375h-2ZM1819 373h2V375.5h-2ZM1821 372.5h2V375h-2ZM1823 373h2V375.5h-2ZM1825 372.5h1V375h-1ZM1826 373h1V375.5h-1ZM1827 372.5h3V375h-3ZM1830 373h1V375.5h-1ZM1831 372.5h1V375h-1ZM1832 373h1V375.5h-1Z" fill="#0f5592"/><path d="M264 445.5h1V448.5h-1ZM265 444.5h1V447.5h-1ZM266 445h3V448h-3ZM269 445.5h1V448.5h-1ZM270 445h3V448h-3ZM273 445h1V553h-1ZM274 445h1V551h-1ZM275 445h1V448h-1ZM276 445.5h2V448.5h-2ZM278 445h3V448h-3ZM281 445.5h1V448.5h-1ZM282 445h1V448h-1ZM283 445h1V553h-1ZM284 444.5h1V551h-1ZM285 444.5h1V447.5h-1ZM286 445h8V448h-8ZM294 445h1V553h-1ZM295 445h1V550.5h-1ZM296 445.5h1V448.5h-1ZM297 445h7V448h-7ZM304 445h1V553h-1ZM305 445h1V550h-1ZM306 445.5h1V448.5h-1ZM307 445h2V448h-2ZM309 445.5h1V448.5h-1ZM310 445h4V448h-4ZM314 444.5h1V553h-1ZM315 445h1V551h-1ZM316 445h2V448h-2ZM318 444.5h1V447.5h-1ZM319 445h5V448h-5ZM324 445h1V553h-1ZM325 445.5h1V550h-1ZM326 444.5h1V447.5h-1ZM327 445h8V448h-8ZM335 444.5h1V447.5h-1ZM336 445h1V448h-1ZM337 443h1V448h-1ZM338 445h4V448h-4ZM342 445h1V449.5h-1ZM343 445h7V448h-7ZM350 445.5h1V448.5h-1ZM351 445h4V448h-4ZM355 445h2V553h-2ZM357 445h3V448h-3ZM360 444.5h1V447.5h-1ZM361 445h2V448h-2ZM363 444.5h1V447.5h-1ZM364 445h1V448h-1ZM365 445h1V553h-1ZM366 445h1V551.5h-1ZM367 445h1V448h-1ZM368 445.5h1V448.5h-1ZM369 445h3V448h-3ZM372 444.5h1V447.5h-1ZM373 443.5h1V448h-1ZM374 445h1V448h-1ZM375 445h1V553h-1ZM376 445h1V550h-1ZM377 445h2V448h-2ZM379 445.5h1V448.5h-1ZM380 443h1V448h-1ZM381 442.5h1V448h-1ZM382 443h2V448h-2ZM384 442.5h2V448h-2ZM386 443.5h1V553h-1ZM387 445h1V551h-1ZM388 445h3V448h-3ZM391 444.5h1V447.5h-1ZM392 445h2V448h-2ZM394 444.5h1V447.5h-1ZM395 445h1V448h-1ZM396 445h1V553h-1ZM397 445h1V550.5h-1ZM398 445h1V450.5h-1ZM399 445h7V448h-7ZM406 445h1V553h-1ZM407 445h1V552.5h-1ZM408 445h8V448h-8ZM416 445h1V553h-1ZM417 445h1V551.5h-1ZM418 445h2V448h-2ZM420 445h1V449h-1ZM421 445h6V448h-6ZM427 445h1V553h-1ZM428 445h1V552.5h-1ZM429 445h1V448h-1ZM430 444.5h2V447.5h-2ZM432 445h5V448h-5ZM437 445h1V553h-1ZM438 445h1V551.5h-1ZM439 445.5h1V448.5h-1ZM440 445h2V448h-2ZM442 445.5h1V448.5h-1ZM443 445h1V448h-1ZM444 444.5h1V447.5h-1ZM445 445h2V448h-2ZM447 445h1V553h-1ZM448 445h1V551.5h-1ZM449 444.5h1V447.5h-1ZM450 445h2V448h-2ZM452 444.5h1V447.5h-1ZM453 445h4V448h-4ZM457 444.5h1V553h-1ZM458 445h1V553h-1ZM459 445h3V448h-3ZM462 444.5h1V447.5h-1ZM463 445h2V448h-2ZM465 444.5h1V447.5h-1ZM466 445h1V448h-1ZM467 434.5h1V553h-1ZM468 442h1V552.5h-1ZM469 438h1V454h-1ZM470 443h1V450.5h-1ZM471 436.5h1V453h-1ZM472 443h1V452h-1ZM473 438.5h1V452h-1ZM474 444h1V450.5h-1ZM475 441h1V452h-1ZM476 442.5h1V451.5h-1ZM477 440h1V451.5h-1ZM478 443h1V553h-1ZM479 441h1V552h-1ZM480 443h1V451.5h-1ZM481 441.5h1V450h-1ZM482 445h1V448h-1ZM483 445.5h1V448.5h-1ZM484 444.5h1V447.5h-1ZM485 445h2V448h-2ZM487 444.5h1V447.5h-1ZM488 445h1V553h-1ZM489 445h1V550.5h-1ZM490 445h9V448h-9ZM499 445h1V553h-1ZM500 445h1V550.5h-1ZM501 445h1V448h-1ZM502 428h1V451h-1ZM503 445h6V448h-6ZM509 445h1V553h-1ZM510 445h1V552.5h-1ZM511 445.5h1V448.5h-1ZM512 444.5h1V447.5h-1ZM513 445.5h1V448.5h-1ZM514 445h6V448h-6ZM520 445h1V553h-1ZM521 445h1V550.5h-1ZM522 445h2V448h-2ZM524 445.5h1V448.5h-1ZM525 445h5V448h-5ZM530 445h1V553h-1ZM531 445.5h1V552.5h-1ZM532 445h1V448h-1ZM533 444.5h1V447.5h-1ZM534 445h5V448h-5ZM539 444.5h1V447.5h-1ZM540 445h1V448h-1ZM541 445h1V553h-1ZM542 445h1V551h-1ZM543 445h8V448h-8ZM551 445.5h1V553h-1ZM552 445h1V552.5h-1ZM553 445h9V448h-9ZM562 445h1V553h-1ZM563 445.5h1V553h-1ZM564 445h8V448h-8ZM572 445h1V553h-1ZM573 445h1V550.5h-1ZM574 444.5h1V447.5h-1ZM575 445h1V448h-1ZM576 445.5h1V448.5h-1ZM577 445h5V448h-5ZM582 445h1V553h-1ZM583 445h1V552.5h-1ZM584 445h2V448h-2ZM586 445.5h1V448.5h-1ZM587 445h3V448h-3ZM590 445.5h1V448.5h-1ZM591 445h1V448h-1ZM592 445.5h1V553h-1ZM593 445h1V552.5h-1ZM594 445h6V448h-6ZM600 445.5h1V448.5h-1ZM601 445h1V448h-1ZM602 445h1V553h-1ZM603 445h1V550h-1ZM604 445h9V448h-9ZM613 445h1V553h-1ZM614 445h1V550.5h-1ZM615 445h1V448h-1ZM616 444.5h1V447.5h-1ZM617 445h6V448h-6ZM623 445h1V553h-1ZM624 445h1V552h-1ZM625 445h5V448h-5ZM630 445.5h1V448.5h-1ZM631 445h2V448h-2ZM633 445h1V553h-1ZM634 445h1V550h-1ZM635 445h1V448h-1ZM636 445.5h1V448.5h-1ZM637 445h1V448h-1ZM638 445.5h1V448.5h-1ZM639 445h4V448h-4ZM643 445h1V553h-1ZM644 445h1V551.5h-1ZM645 445h1V448h-1ZM646 445h1V448.5h-1ZM647 445.5h1V448.5h-1ZM648 445h1V448h-1ZM649 444.5h1V447.5h-1ZM650 445h3V448h-3ZM653 445h1V553h-1ZM654 445h1V551h-1ZM655 445h1V448h-1ZM656 444.5h1V447.5h-1ZM657 445h3V448h-3ZM660 444.5h1V447.5h-1ZM661 445h2V448h-2ZM663 444.5h1V447.5h-1ZM664 445h1V553h-1ZM665 445h1V552.5h-1ZM666 445h1V448h-1ZM667 444.5h1V447.5h-1ZM668 445h6V448h-6ZM674 445h1V553h-1ZM675 445h1V550h-1ZM676 444.5h1V447.5h-1ZM677 445h2V448h-2ZM679 444.5h1V448h-1ZM680 445h2V448h-2ZM682 445.5h1V448.5h-1ZM683 445h1V448h-1ZM684 445.5h1V553h-1ZM685 445h1V551h-1ZM686 445.5h1V448.5h-1ZM687 445h1V448h-1ZM688 443h2V448h-2ZM690 442h2V448h-2ZM692 442.5h1V448h-1ZM693 443.5h1V448h-1ZM694 442.5h1V553h-1ZM695 445h1V550h-1ZM696 444.5h1V447.5h-1ZM697 445h2V448h-2ZM699 444.5h1V447.5h-1ZM700 445h4V448h-4ZM704 445h1V553h-1ZM705 445h1V550.5h-1ZM706 445h1V448h-1ZM707 445h1V449.5h-1ZM708 444.5h1V447.5h-1ZM709 445h2V448h-2ZM711 445.5h1V448.5h-1ZM712 444.5h1V447.5h-1ZM713 445h1V450h-1ZM714 445h1V553h-1ZM715 445.5h1V552h-1ZM716 445h3V448h-3ZM719 444h1V448.5h-1ZM720 445h1V448h-1ZM721 444.5h1V447.5h-1ZM722 445h2V448h-2ZM724 445.5h1V553h-1ZM725 445h1V552h-1ZM726 445h3V448h-3ZM729 444.5h1V447.5h-1ZM730 445.5h1V448.5h-1ZM731 444.5h1V447.5h-1ZM732 445h2V448h-2ZM734 445h1V553h-1ZM735 445h1V552.5h-1ZM736 445h3V448h-3ZM739 445.5h1V448.5h-1ZM740 444.5h1V447.5h-1ZM741 445h4V448h-4ZM745 445h1V553h-1ZM746 445h1V552.5h-1ZM747 445h8V448h-8ZM755 445h2V553h-2ZM757 445h4V448h-4ZM761 445.5h1V450h-1ZM762 445h3V448h-3ZM765 445h1V553h-1ZM766 445h1V552h-1ZM767 445h7V448h-7ZM774 445h1V449.5h-1ZM775 445h1V448h-1ZM776 445h1V553h-1ZM777 433h1V551h-1ZM778 442.5h1V450.5h-1ZM779 439.5h1V454.5h-1ZM780 441h1V450.5h-1ZM781 437h1V453.5h-1ZM782 442h1V449.5h-1ZM783 437.5h1V452h-1ZM784 442h1V450.5h-1ZM785 439.5h1V452h-1ZM786 442h1V553h-1ZM787 442.5h1V553h-1ZM788 442.5h1V451h-1ZM789 442.5h1V450.5h-1ZM790 442h1V449h-1ZM791 442.5h1V449h-1ZM792 445h5V448h-5ZM797 445h1V553h-1ZM798 445h1V551h-1ZM799 445h1V448h-1ZM800 445.5h1V448.5h-1ZM801 445h2V448h-2ZM803 444.5h1V447.5h-1ZM804 443.5h1V448h-1ZM805 445h1V448h-1ZM806 445h1V553h-1ZM807 445h1V552h-1ZM808 445h2V448h-2ZM810 442h1V461h-1ZM811 445h1V448h-1ZM812 445.5h1V448.5h-1ZM813 445h2V448h-2ZM815 444.5h1V447.5h-1ZM816 445.5h1V448.5h-1ZM817 444.5h1V553h-1ZM818 445h1V552h-1ZM819 445h7V448h-7ZM826 444.5h1V447.5h-1ZM827 445h1V448h-1ZM828 445h1V553h-1ZM829 445h1V550.5h-1ZM830 443h1V448h-1ZM831 445.5h1V448.5h-1ZM832 445h2V448h-2ZM834 444.5h1V447.5h-1ZM835 445h2V448h-2ZM837 445.5h1V448.5h-1ZM838 444.5h1V553h-1ZM839 445h1V551.5h-1ZM840 445h1V448h-1ZM841 444.5h1V447.5h-1ZM842 445.5h1V448.5h-1ZM843 444h1V448h-1ZM844 445h2V448h-2ZM846 445.5h1V448.5h-1ZM847 444.5h1V447.5h-1ZM848 445h1V553h-1ZM849 445h1V552h-1ZM850 445h8V448h-8ZM858 445.5h1V553h-1ZM859 445h1V551.5h-1ZM860 445h3V448h-3ZM863 445.5h1V448.5h-1ZM864 445h2V448h-2ZM866 444.5h1V447.5h-1ZM867 445h1V448h-1ZM868 443h1V448h-1ZM869 445h1V553h-1ZM870 444.5h1V551h-1ZM871 444.5h1V447.5h-1ZM872 445h6V448h-6ZM878 445.5h1V448.5h-1ZM879 445h1V553h-1ZM880 445.5h1V553h-1ZM881 445h2V448h-2ZM883 445.5h1V448.5h-1ZM884 445h2V448h-2ZM886 444.5h1V447.5h-1ZM887 445h1V448h-1ZM888 445.5h1V448.5h-1ZM889 445h1V448h-1ZM890 445h1V553h-1ZM891 445h1V550h-1ZM892 445h5V448h-5ZM897 445.5h1V448.5h-1ZM898 445h1V450h-1ZM899 445h1V448h-1ZM900 445h2V553h-2ZM902 445h4V448h-4ZM906 445.5h1V448.5h-1ZM907 445h3V448h-3ZM910 445h1V553h-1ZM911 445h1V551h-1ZM912 444.5h1V447.5h-1ZM913 445h3V448h-3ZM916 445.5h1V448.5h-1ZM917 445h1V448h-1ZM918 444.5h1V447.5h-1ZM919 445h1V448h-1ZM920 445h1V553h-1ZM921 445h1V550.5h-1ZM922 445h8V448h-8ZM930 445h2V553h-2ZM932 445h7V448h-7ZM939 445h1V449h-1ZM940 445h1V553h-1ZM941 445h1V550.5h-1ZM942 445.5h1V448.5h-1ZM943 445h4V448h-4ZM947 445.5h1V448.5h-1ZM948 445h7V448h-7ZM955 443h1V448h-1ZM956 445h2V448h-2ZM958 445.5h1V448.5h-1ZM959 445h2V448h-2ZM961 445.5h1V448.5h-1ZM962 445h5V448h-5ZM967 444.5h1V447.5h-1ZM968 445h2V448h-2ZM970 445h1V553h-1ZM971 445h1V552h-1ZM972 445h3V448h-3ZM975 444.5h1V447.5h-1ZM976 445h4V448h-4ZM980 445.5h1V553h-1ZM981 445h1V551.5h-1ZM982 445h3V448h-3ZM985 445.5h1V448.5h-1ZM986 445h3V448h-3ZM989 444h1V448h-1ZM990 445h1V448h-1ZM991 445h2V553h-2ZM993 444.5h1V447.5h-1ZM994 445.5h1V448.5h-1ZM995 445h3V448h-3ZM998 443h1V448h-1ZM999 442.5h2V448h-2ZM1001 442.5h1V553h-1ZM1002 443h1V553h-1ZM1003 442h1V448h-1ZM1004 443h1V448h-1ZM1005 445h1V448h-1ZM1006 445.5h1V448.5h-1ZM1007 445h1V448h-1ZM1008 444.5h1V447.5h-1ZM1009 445h2V448h-2ZM1011 445h1V553h-1ZM1012 444.5h1V552.5h-1ZM1013 445h4V448h-4ZM1017 445.5h1V448.5h-1ZM1018 445h2V448h-2ZM1020 444.5h1V447.5h-1ZM1021 445h1V553h-1ZM1022 445h1V550h-1ZM1023 445h1V448h-1ZM1024 445.5h1V448.5h-1ZM1025 445h1V448h-1ZM1026 444.5h1V447.5h-1ZM1027 445h3V448h-3ZM1030 444.5h1V447.5h-1ZM1031 445.5h1V448.5h-1ZM1032 443.5h1V553h-1ZM1033 445h1V552.5h-1ZM1034 445h6V448h-6ZM1040 444.5h1V447.5h-1ZM1041 445h1V553h-1ZM1042 445h1V550.5h-1ZM1043 445h9V448h-9ZM1052 445h1V553h-1ZM1053 444.5h1V550h-1ZM1054 445h3V448h-3ZM1057 445.5h1V448.5h-1ZM1058 445h1V448h-1ZM1059 445.5h1V448.5h-1ZM1060 445h2V448h-2ZM1062 445h1V553h-1ZM1063 445h1V550h-1ZM1064 445h1V448h-1ZM1065 444.5h1V447.5h-1ZM1066 445h6V448h-6ZM1072 445h1V553h-1ZM1073 445h1V552h-1ZM1074 445h8V448h-8ZM1082 445h1V553h-1ZM1083 439.5h1V552h-1ZM1084 443h1V449.5h-1ZM1085 439.5h1V451h-1ZM1086 442.5h1V450h-1ZM1087 437.5h1V453h-1ZM1088 443.5h1V451.5h-1ZM1089 441.5h1V451.5h-1ZM1090 443h1V450h-1ZM1091 441.5h1V452.5h-1ZM1092 443h1V553h-1ZM1093 440.5h1V551.5h-1ZM1094 442.5h1V450h-1ZM1095 441.5h1V451h-1ZM1096 441.5h1V450.5h-1ZM1097 442h1V450h-1ZM1098 445h4V448h-4ZM1102 444.5h1V447.5h-1ZM1103 445h1V553h-1ZM1104 445h1V550.5h-1ZM1105 445h1V450h-1ZM1106 445h6V448h-6ZM1112 445.5h1V448.5h-1ZM1113 445h1V553h-1ZM1114 445h1V552.5h-1ZM1115 445h1V448h-1ZM1116 405h1V452h-1ZM1117 445h1V448h-1ZM1118 445.5h1V448.5h-1ZM1119 445h4V448h-4ZM1123 445h1V553h-1ZM1124 445h1V551h-1ZM1125 445h5V448h-5ZM1130 444.5h1V447.5h-1ZM1131 445h3V448h-3ZM1134 445h1V553h-1ZM1135 445h1V550.5h-1ZM1136 445h1V448h-1ZM1137 444.5h2V447.5h-2ZM1139 445h5V448h-5ZM1144 445h1V553h-1ZM1145 445h1V550.5h-1ZM1146 444.5h1V447.5h-1ZM1147 445h7V448h-7ZM1154 444.5h1V553h-1ZM1155 445h1V553h-1ZM1156 445h3V448h-3ZM1159 444.5h1V447.5h-1ZM1160 445h5V448h-5ZM1165 445h1V553h-1ZM1166 445h1V550h-1ZM1167 445h3V448h-3ZM1170 444.5h1V447.5h-1ZM1171 445h2V448h-2ZM1173 444.5h1V447.5h-1ZM1174 445h1V448h-1ZM1175 445h1V553h-1ZM1176 445h1V552.5h-1ZM1177 444.5h1V447.5h-1ZM1178 445h1V448h-1ZM1179 445.5h1V448.5h-1ZM1180 445h5V448h-5ZM1185 445h1V553h-1ZM1186 445h1V552h-1ZM1187 445h5V448h-5ZM1192 445.5h1V448.5h-1ZM1193 445h1V448h-1ZM1194 445h1V449.5h-1ZM1195 445h1V448h-1ZM1196 445h1V553h-1ZM1197 445h1V551h-1ZM1198 445h8V448h-8ZM1206 445h1V553h-1ZM1207 445h1V550h-1ZM1208 445h5V448h-5ZM1213 444.5h1V447.5h-1ZM1214 445h2V448h-2ZM1216 445h1V553h-1ZM1217 445h1V552h-1ZM1218 445h3V448h-3ZM1221 444.5h1V447.5h-1ZM1222 445h3V448h-3ZM1225 445.5h1V448.5h-1ZM1226 445h1V553h-1ZM1227 445h1V550h-1ZM1228 445h2V448h-2ZM1230 445.5h1V448.5h-1ZM1231 445h5V448h-5ZM1236 445h1V553h-1ZM1237 445h1V551.5h-1ZM1238 445.5h1V448.5h-1ZM1239 445h1V448h-1ZM1240 444.5h1V447.5h-1ZM1241 445h4V448h-4ZM1245 445.5h1V448.5h-1ZM1246 445h1V448h-1ZM1247 444.5h1V553h-1ZM1248 445h1V552h-1ZM1249 445h3V448h-3ZM1252 445.5h1V448.5h-1ZM1253 445h3V448h-3ZM1256 444.5h1V447.5h-1ZM1257 445h1V553h-1ZM1258 445h1V552h-1ZM1259 445h1V448h-1ZM1260 445.5h1V448.5h-1ZM1261 445h6V448h-6ZM1267 445h1V553h-1ZM1268 445h1V552.5h-1ZM1269 445h9V448h-9ZM1278 445h2V553h-2ZM1280 445.5h1V448.5h-1ZM1281 445h7V448h-7ZM1288 444.5h1V553h-1ZM1289 445h1V552.5h-1ZM1290 445h3V448h-3ZM1293 443.5h1V448h-1ZM1294 445h4V448h-4ZM1298 445h1V553h-1ZM1299 445h1V551h-1ZM1300 445h3V448h-3ZM1303 443.5h1V448h-1ZM1304 445h2V448h-2ZM1306 443h1V448h-1ZM1307 442h1V448h-1ZM1308 443h1V553h-1ZM1309 443h1V550h-1ZM1310 442.5h1V448h-1ZM1311 443.5h1V448h-1ZM1312 442h1V448h-1ZM1313 445h3V448h-3ZM1316 444.5h1V447.5h-1ZM1317 445h1V448h-1ZM1318 445.5h1V553h-1ZM1319 445.5h1V552.5h-1ZM1320 445h6V448h-6ZM1326 442.5h1V448h-1ZM1327 445h2V448h-2ZM1329 445h2V553h-2ZM1331 445h2V448h-2ZM1333 445h1V449h-1ZM1334 445h1V448h-1ZM1335 444.5h1V447.5h-1ZM1336 445h3V448h-3ZM1339 445h1V553h-1ZM1340 445h1V550h-1ZM1341 445h6V448h-6ZM1347 445.5h1V448.5h-1ZM1348 445h1V448h-1ZM1349 445h1V553h-1ZM1350 445h1V551.5h-1ZM1351 445h1V448h-1ZM1352 445.5h1V448.5h-1ZM1353 445h4V448h-4ZM1357 445.5h1V448.5h-1ZM1358 445h1V448h-1ZM1359 444.5h1V553h-1ZM1360 445h1V552h-1ZM1361 445h9V448h-9ZM1370 445h1V553h-1ZM1371 444.5h1V552.5h-1ZM1372 444.5h1V447.5h-1ZM1373 445h4V448h-4ZM1377 444.5h1V447.5h-1ZM1378 445h2V448h-2ZM1380 445h1V553h-1ZM1381 445h1V551h-1ZM1382 445h2V448h-2ZM1384 444.5h1V447.5h-1ZM1385 445.5h1V448.5h-1ZM1386 445h1V448h-1ZM1387 445.5h1V448.5h-1ZM1388 445h1V448h-1ZM1389 445.5h1V448.5h-1ZM1390 445h1V448h-1ZM1391 437.5h1V553h-1ZM1392 442h1V550.5h-1ZM1393 434.5h1V455h-1ZM1394 442h1V450h-1ZM1395 436h1V450.5h-1ZM1396 443.5h1V450.5h-1ZM1397 438.5h1V450.5h-1ZM1398 442h1V451.5h-1ZM1399 440.5h1V451h-1ZM1400 443.5h1V450h-1ZM1401 439h1V553h-1ZM1402 441h1V551.5h-1ZM1403 441.5h1V449.5h-1ZM1404 441h1V450.5h-1ZM1405 442.5h1V449.5h-1ZM1406 445h5V448h-5ZM1411 445h1V553h-1ZM1412 445h1V551.5h-1ZM1413 445h1V448h-1ZM1414 445.5h1V448.5h-1ZM1415 445h2V448h-2ZM1417 444.5h1V447.5h-1ZM1418 445h4V448h-4ZM1422 445h2V553h-2ZM1424 444.5h1V447.5h-1ZM1425 445h2V448h-2ZM1427 434h1V450h-1ZM1428 445h1V448h-1ZM1429 444.5h1V447.5h-1ZM1430 445h2V448h-2ZM1432 445h1V553h-1ZM1433 445h1V550.5h-1ZM1434 445h5V448h-5ZM1439 445h1V450h-1ZM1440 445h3V448h-3ZM1443 445.5h1V553h-1ZM1444 445h1V553h-1ZM1445 445h2V448h-2ZM1447 445h1V449h-1ZM1448 445h1V448h-1ZM1449 445.5h1V448.5h-1ZM1450 445h3V448h-3ZM1453 445h1V553h-1ZM1454 445h1V551.5h-1ZM1455 445h9V448h-9ZM1464 445h1V553h-1ZM1465 445h1V550.5h-1ZM1466 445h1V448h-1ZM1467 444.5h1V447.5h-1ZM1468 445h6V448h-6ZM1474 445h1V553h-1ZM1475 445h1V552.5h-1ZM1476 445h1V448h-1ZM1477 445.5h1V448.5h-1ZM1478 445h4V448h-4ZM1482 445.5h2V448.5h-2ZM1484 445h1V448h-1ZM1485 445h1V553h-1ZM1486 445.5h1V551h-1ZM1487 445h3V448h-3ZM1490 444.5h1V447.5h-1ZM1491 444h1V448h-1ZM1492 445h3V448h-3ZM1495 445h1V553h-1ZM1496 445h1V550h-1ZM1497 445h2V448h-2ZM1499 444.5h1V447.5h-1ZM1500 445h2V448h-2ZM1502 443.5h1V448h-1ZM1503 445h2V448h-2ZM1505 445h1V553h-1ZM1506 445h1V551h-1ZM1507 445.5h1V448.5h-1ZM1508 445h2V448h-2ZM1510 444.5h1V447.5h-1ZM1511 445h1V448h-1ZM1512 445.5h1V448.5h-1ZM1513 445h3V448h-3ZM1516 445h1V553h-1ZM1517 445h1V550.5h-1ZM1518 445h8V448h-8ZM1526 445h1V553h-1ZM1527 445h1V552.5h-1ZM1528 445h4V448h-4ZM1532 444.5h1V447.5h-1ZM1533 445.5h1V448.5h-1ZM1534 445h1V448h-1ZM1535 445.5h1V448.5h-1ZM1536 445h1V553h-1ZM1537 445h1V551.5h-1ZM1538 445h5V448h-5ZM1543 445.5h1V448.5h-1ZM1544 445h2V448h-2ZM1546 445h1V553h-1ZM1547 445h1V552.5h-1ZM1548 445h5V448h-5ZM1553 444.5h1V447.5h-1ZM1554 445h2V448h-2ZM1556 444.5h1V447.5h-1ZM1557 445h1V553h-1ZM1558 445h1V550.5h-1ZM1559 445h1V448h-1ZM1560 444.5h1V447.5h-1ZM1561 445h3V448h-3ZM1564 444.5h1V448h-1ZM1565 445h20V448h-20ZM1585 445.5h1V448.5h-1ZM1586 445h1V448h-1ZM1587 445h1V553h-1ZM1588 445h1V552h-1ZM1589 445h9V448h-9ZM1598 445h1V553h-1ZM1599 444.5h1V551.5h-1ZM1600 445h6V448h-6ZM1606 445.5h1V448.5h-1ZM1607 444.5h1V447.5h-1ZM1608 445h1V553h-1ZM1609 445h1V550h-1ZM1610 445h3V448h-3ZM1613 445.5h2V448.5h-2ZM1615 445h1V448h-1ZM1616 442.5h1V448h-1ZM1617 443h1V448h-1ZM1618 443h1V553h-1ZM1619 442.5h1V550.5h-1ZM1620 442h1V448h-1ZM1621 443.5h1V448h-1ZM1622 443h1V448.5h-1ZM1623 445h4V448h-4ZM1627 444.5h1V447.5h-1ZM1628 445h1V553h-1ZM1629 445h1V550h-1ZM1630 445h1V449h-1ZM1631 444.5h1V447.5h-1ZM1632 445h1V448h-1ZM1633 445.5h1V448.5h-1ZM1634 445h2V448h-2ZM1636 444.5h1V447.5h-1ZM1637 445h1V448h-1ZM1638 445h1V553h-1ZM1639 445h1V551.5h-1ZM1640 445h1V448h-1ZM1641 444.5h1V447.5h-1ZM1642 445h6V448h-6ZM1648 444h1V448h-1ZM1649 445h1V553h-1ZM1650 445h1V551.5h-1ZM1651 445h8V448h-8ZM1659 445.5h1V553h-1ZM1660 445h1V551h-1ZM1661 445h1V448h-1ZM1662 445.5h1V448.5h-1ZM1663 445h4V448h-4ZM1667 444.5h1V447.5h-1ZM1668 445h1V448h-1ZM1669 445h1V553h-1ZM1670 445h1V551.5h-1ZM1671 445h6V448h-6ZM1677 445.5h1V448.5h-1ZM1678 445h2V448h-2ZM1680 445h1V553h-1ZM1681 443h1V552h-1ZM1682 445h2V448h-2ZM1684 444.5h1V447.5h-1ZM1685 445h5V448h-5ZM1690 445h1V553h-1ZM1691 445h1V552h-1ZM1692 445h1V448h-1ZM1693 444.5h1V448h-1ZM1694 445h7V448h-7ZM1701 433h1V553h-1ZM1702 443h1V552.5h-1ZM1703 439.5h1V453.5h-1ZM1704 442.5h1V450h-1ZM1705 436.5h1V453.5h-1ZM1706 444h1V450.5h-1ZM1707 440h1V453.5h-1ZM1708 441.5h1V449.5h-1ZM1709 441h1V450.5h-1ZM1710 441h1V450h-1ZM1711 440.5h1V553h-1ZM1712 442h1V552h-1ZM1713 441h1V449.5h-1ZM1714 441.5h1V450h-1ZM1715 442.5h1V449.5h-1ZM1716 445h1V448h-1ZM1717 444.5h1V447.5h-1ZM1718 445h3V448h-3ZM1721 445h1V553h-1ZM1722 445h1V550h-1ZM1723 445h2V448h-2ZM1725 444.5h3V447.5h-3ZM1728 445h1V448h-1ZM1729 444.5h1V447.5h-1ZM1730 445h2V448h-2ZM1732 445h1V553h-1ZM1733 445h1V550h-1ZM1734 445h1V448h-1ZM1735 438h1V463h-1ZM1736 445h2V448h-2ZM1738 444.5h1V447.5h-1ZM1739 445.5h1V448.5h-1ZM1740 445h2V448h-2ZM1742 445h1V553h-1ZM1743 445h1V551h-1ZM1744 445.5h1V448.5h-1ZM1745 445h5V448h-5ZM1750 445.5h1V448.5h-1ZM1751 445h1V448h-1ZM1752 445h1V553h-1ZM1753 445h1V551.5h-1ZM1754 445h1V448h-1ZM1755 444.5h1V447.5h-1ZM1756 445h6V448h-6ZM1762 444.5h1V447.5h-1ZM1763 445h1V553h-1ZM1764 445h1V552h-1ZM1765 445h3V448h-3ZM1768 445.5h1V448.5h-1ZM1769 445h4V448h-4ZM1773 444.5h1V553h-1ZM1774 445h1V552.5h-1ZM1775 445h6V448h-6ZM1781 442.5h1V448h-1ZM1782 445h2V448h-2ZM1784 445h1V553h-1ZM1785 445h1V552h-1ZM1786 445.5h1V448.5h-1ZM1787 445h1V448h-1ZM1788 445.5h1V448.5h-1ZM1789 445h5V448h-5ZM1794 445h1V553h-1ZM1795 445h1V550.5h-1ZM1796 445h2V448h-2ZM1798 445.5h1V448.5h-1ZM1799 444.5h1V447.5h-1ZM1800 445h4V448h-4ZM1804 444.5h1V553h-1ZM1805 445h1V550.5h-1ZM1806 445h1V448h-1ZM1807 445.5h1V448.5h-1ZM1808 445h1V448h-1ZM1809 445.5h1V448.5h-1ZM1810 445h4V448h-4ZM1814 445.5h1V448.5h-1ZM1815 445h1V553h-1ZM1816 445h1V552h-1ZM1817 444.5h1V447.5h-1ZM1818 445h3V448h-3ZM1821 444.5h1V447.5h-1ZM1822 445.5h1V448.5h-1ZM1823 445h1V448h-1ZM1824 444.5h1V447.5h-1ZM1825 445h1V553h-1ZM1826 445h1V550.5h-1ZM1827 445h1V448h-1ZM1828 444.5h1V447.5h-1ZM1829 445h2V448h-2ZM1831 445.5h1V448.5h-1ZM1832 445h1V448h-1Z" fill="#168a44"/><path d="M264 781.5h1V783.5h-1ZM265 782h2V783.5h-2ZM267 781.5h1V783.5h-1ZM268 782h3V783.5h-3ZM271 781.5h1V783.5h-1ZM272 782h2V783.5h-2ZM274 781.5h1V783.5h-1ZM275 782h1V784h-1ZM276 781.5h2V783.5h-2ZM278 782h1V784h-1ZM279 782h1V783.5h-1ZM280 781.5h3V783.5h-3ZM283 781.5h1V783h-1ZM284 782h2V783.5h-2ZM286 781.5h1V783.5h-1ZM287 782h1V783.5h-1ZM288 782h1V784h-1ZM289 781.5h1V783.5h-1ZM290 782h1V783.5h-1ZM291 781.5h1V783.5h-1ZM292 781.5h1V783h-1ZM293 782h1V784h-1ZM294 781.5h2V783.5h-2ZM296 782h2V783.5h-2ZM298 781.5h4V783.5h-4ZM302 781.5h1V783h-1ZM303 781.5h5V783.5h-5ZM308 781.5h1V783h-1ZM309 782h2V783.5h-2ZM311 781.5h5V783.5h-5ZM316 781.5h1V783h-1ZM317 781.5h3V783.5h-3ZM320 782h1V783.5h-1ZM321 781.5h4V783.5h-4ZM325 782h1V783.5h-1ZM326 781.5h1V783.5h-1ZM327 781.5h1V783h-1ZM328 781.5h2V783.5h-2ZM330 782h1V783.5h-1ZM331 781.5h1V783.5h-1ZM332 782h1V783.5h-1ZM333 781.5h1V783h-1ZM334 781.5h3V783.5h-3ZM337 782h2V783.5h-2ZM339 781.5h2V783.5h-2ZM341 782h1V783.5h-1ZM342 781.5h1V783h-1ZM343 781.5h1V783.5h-1ZM344 782h2V783.5h-2ZM346 781.5h4V783.5h-4ZM350 782h1V783.5h-1ZM351 782h1V784h-1ZM352 781.5h1V783.5h-1ZM353 781.5h1V783h-1ZM354 781.5h1V783.5h-1ZM355 782h1V783.5h-1ZM356 781.5h3V783.5h-3ZM359 782h2V783.5h-2ZM361 781.5h1V783.5h-1ZM362 782h2V783.5h-2ZM364 782h1V784h-1ZM365 782h1V783.5h-1ZM366 781.5h1V783.5h-1ZM367 782h1V783.5h-1ZM368 782h1V784h-1ZM369 782h3V783.5h-3ZM372 781.5h1V783.5h-1ZM373 782h3V783.5h-3ZM376 781.5h3V783.5h-3ZM379 782h1V783.5h-1ZM380 781.5h3V783.5h-3ZM383 782h1V784h-1ZM384 781.5h1V783h-1ZM385 782h1V784h-1ZM386 782h1V783.5h-1ZM387 781.5h1V783.5h-1ZM388 782h1V784h-1ZM389 782h1V783.5h-1ZM390 781.5h1V783h-1ZM391 782h1V784h-1ZM392 781.5h1V783.5h-1ZM393 782h2V783.5h-2ZM395 781.5h1V783.5h-1ZM396 781.5h2V783h-2ZM398 782h2V783.5h-2ZM400 781.5h3V783.5h-3ZM403 782h3V783.5h-3ZM406 782h1V784h-1ZM407 782h2V783.5h-2ZM409 781.5h2V783h-2ZM411 782h2V783.5h-2ZM413 781.5h7V783.5h-7ZM420 781.5h1V783h-1ZM421 781.5h5V783.5h-5ZM426 782h1V783.5h-1ZM427 781.5h2V783.5h-2ZM429 782h1V783.5h-1ZM430 781.5h1V783.5h-1ZM431 781.5h2V783h-2ZM433 781.5h4V783.5h-4ZM437 782h1V783.5h-1ZM438 781.5h1V783h-1ZM439 781.5h3V783.5h-3ZM442 782h1V783.5h-1ZM443 781.5h1V783.5h-1ZM444 781.5h1V783h-1ZM445 781.5h1V783.5h-1ZM446 782h1V784h-1ZM447 781.5h2V783.5h-2ZM449 782h1V784h-1ZM450 782h1V783.5h-1ZM451 782h1V784h-1ZM452 781.5h1V783.5h-1ZM453 782h1V783.5h-1ZM454 781.5h1V783h-1ZM455 781.5h1V783.5h-1ZM456 782h1V783.5h-1ZM457 781.5h1V783.5h-1ZM458 782h1V783.5h-1ZM459 781.5h1V783.5h-1ZM460 782h1V783.5h-1ZM461 781.5h1V783h-1ZM462 782h1V783.5h-1ZM463 781.5h2V783.5h-2ZM465 782h1V783.5h-1ZM466 781.5h1V783.5h-1ZM467 782h1V783.5h-1ZM468 781.5h1V783.5h-1ZM469 782h3V783.5h-3ZM472 781.5h1V783.5h-1ZM473 782h1V783.5h-1ZM474 782h1V784h-1ZM475 782h1V783.5h-1ZM476 781.5h3V783.5h-3ZM479 782h1V783.5h-1ZM480 781.5h2V783.5h-2ZM482 781.5h1V783h-1ZM483 781.5h5V783.5h-5ZM488 782h1V783.5h-1ZM489 781.5h3V783.5h-3ZM492 782h1V783.5h-1ZM493 782h1V784h-1ZM494 781.5h2V783.5h-2ZM496 782h1V783.5h-1ZM497 782h1V784h-1ZM498 782h1V783.5h-1ZM499 781.5h2V783.5h-2ZM501 782h2V783.5h-2ZM503 782h1V784h-1ZM504 781.5h7V783.5h-7ZM511 782h1V783.5h-1ZM512 781.5h3V783.5h-3ZM515 782h1V783.5h-1ZM516 781.5h1V783.5h-1ZM517 782h1V783.5h-1ZM518 782h1V784h-1ZM519 782h2V783.5h-2ZM521 781.5h2V783.5h-2ZM523 782h1V783.5h-1ZM524 781.5h1V783.5h-1ZM525 782h2V783.5h-2ZM527 782h1V784h-1ZM528 781.5h2V783.5h-2ZM530 781.5h1V783h-1ZM531 781.5h3V783.5h-3ZM534 782h4V783.5h-4ZM538 781.5h1V783.5h-1ZM539 782h1V783.5h-1ZM540 781.5h3V783.5h-3ZM543 782h2V783.5h-2ZM545 781.5h1V783h-1ZM546 782h1V783.5h-1ZM547 781.5h1V783h-1ZM548 781.5h2V783.5h-2ZM550 782h1V783.5h-1ZM551 781.5h5V783.5h-5ZM556 781.5h2V783h-2ZM558 781.5h1V783.5h-1ZM559 782h2V783.5h-2ZM561 781.5h1V783.5h-1ZM562 782h1V784h-1ZM563 781.5h1V783h-1ZM564 781.5h3V783.5h-3ZM567 782h1V784h-1ZM568 782h1V783.5h-1ZM569 781.5h2V783.5h-2ZM571 782h1V783.5h-1ZM572 781.5h4V783.5h-4ZM576 782h1V783.5h-1ZM577 781.5h1V783.5h-1ZM578 782h1V783.5h-1ZM579 781.5h1V783h-1ZM580 781.5h1V783.5h-1ZM581 782h1V783.5h-1ZM582 781.5h1V783.5h-1ZM583 782h1V783.5h-1ZM584 782h1V784h-1ZM585 782h1V783.5h-1ZM586 781.5h2V783.5h-2ZM588 782h1V783.5h-1ZM589 781.5h4V783.5h-4ZM593 782h2V783.5h-2ZM595 781.5h1V783h-1ZM596 782h1V783.5h-1ZM597 781.5h2V783.5h-2ZM599 782h1V783.5h-1ZM600 782h1V784h-1ZM601 781.5h1V783.5h-1ZM602 782h1V783.5h-1ZM603 781.5h1V783.5h-1ZM604 782h1V784h-1ZM605 781.5h1V783.5h-1ZM606 782h1V783.5h-1ZM607 781.5h1V783h-1ZM608 781.5h1V783.5h-1ZM609 782h3V783.5h-3ZM612 781.5h2V783.5h-2ZM614 782h5V783.5h-5ZM619 782h1V784h-1ZM620 782h3V783.5h-3ZM623 781.5h1V783.5h-1ZM624 782h1V783.5h-1ZM625 781.5h1V783.5h-1ZM626 782h5V783.5h-5ZM631 781.5h2V783.5h-2ZM633 782h2V783.5h-2ZM635 781.5h2V783.5h-2ZM637 782h2V783.5h-2ZM639 781.5h4V783.5h-4ZM643 782h1V783.5h-1ZM644 781.5h1V783.5h-1ZM645 782h1V783.5h-1ZM646 781.5h1V783h-1ZM647 781.5h2V783.5h-2ZM649 782h1V783.5h-1ZM650 781.5h1V783.5h-1ZM651 782h1V783.5h-1ZM652 781.5h3V783.5h-3ZM655 781.5h1V783h-1ZM656 781.5h2V783.5h-2ZM658 782h1V783.5h-1ZM659 781.5h2V783.5h-2ZM661 782h1V784h-1ZM662 782h1V783.5h-1ZM663 781.5h1V783.5h-1ZM664 782h3V783.5h-3ZM667 781.5h1V783.5h-1ZM668 782h1V783.5h-1ZM669 781.5h5V783.5h-5ZM674 782h1V783.5h-1ZM675 781.5h4V783.5h-4ZM679 781.5h1V783h-1ZM680 782h1V783.5h-1ZM681 781.5h1V783.5h-1ZM682 781.5h1V783h-1ZM683 781.5h3V783.5h-3ZM686 782h2V784h-2ZM688 781.5h1V783.5h-1ZM689 782h1V783.5h-1ZM690 781.5h1V783.5h-1ZM691 781.5h1V783h-1ZM692 781.5h1V783.5h-1ZM693 782h3V783.5h-3ZM696 782h1V784h-1ZM697 781.5h1V783.5h-1ZM698 782h2V783.5h-2ZM700 782h1V784h-1ZM701 782h2V783.5h-2ZM703 781.5h2V783.5h-2ZM705 782h1V783.5h-1ZM706 781.5h5V783.5h-5ZM711 782h1V783.5h-1ZM712 781.5h1V783.5h-1ZM713 781.5h1V783h-1ZM714 782h1V783.5h-1ZM715 782h1V784h-1ZM716 781.5h1V783.5h-1ZM717 782h1V783.5h-1ZM718 781.5h1V783h-1ZM719 781.5h2V783.5h-2ZM721 782h1V783.5h-1ZM722 781.5h1V783.5h-1ZM723 782h5V783.5h-5ZM728 781.5h2V783.5h-2ZM730 782h3V783.5h-3ZM733 782h1V784h-1ZM734 782h1V783.5h-1ZM735 781.5h3V783.5h-3ZM738 782h1V784h-1ZM739 782h1V783.5h-1ZM740 781.5h2V783h-2ZM742 781.5h1V783.5h-1ZM743 782h3V783.5h-3ZM746 781.5h1V783h-1ZM747 781.5h1V783.5h-1ZM748 782h1V783.5h-1ZM749 781.5h2V783.5h-2ZM751 782h1V784h-1ZM752 781.5h1V783h-1ZM753 781.5h1V783.5h-1ZM754 782h3V783.5h-3ZM757 781.5h2V783.5h-2ZM759 782h1V784h-1ZM760 781.5h2V783.5h-2ZM762 782h1V784h-1ZM763 781.5h1V783.5h-1ZM764 782h2V783.5h-2ZM766 781.5h1V783.5h-1ZM767 782h1V784h-1ZM768 782h1V783.5h-1ZM769 781.5h1V783.5h-1ZM770 782h1V784h-1ZM771 782h1V783.5h-1ZM772 781.5h1V783.5h-1ZM773 781.5h1V783h-1ZM774 782h3V783.5h-3ZM777 781.5h1V783h-1ZM778 781.5h1V783.5h-1ZM779 782h2V783.5h-2ZM781 781.5h4V783.5h-4ZM785 782h2V784h-2ZM787 781.5h1V783h-1ZM788 782h1V783.5h-1ZM789 781.5h1V783.5h-1ZM790 782h1V783.5h-1ZM791 781.5h1V783.5h-1ZM792 782h2V783.5h-2ZM794 782h1V784h-1ZM795 781.5h1V783.5h-1ZM796 781.5h1V783h-1ZM797 782h1V783.5h-1ZM798 781.5h1V783.5h-1ZM799 782h1V783.5h-1ZM800 781.5h2V783.5h-2ZM802 782h1V783.5h-1ZM803 781.5h3V783.5h-3ZM806 782h1V783.5h-1ZM807 781.5h1V783h-1ZM808 781.5h2V783.5h-2ZM810 782h2V783.5h-2ZM812 781.5h1V783.5h-1ZM813 782h1V784h-1ZM814 782h1V783.5h-1ZM815 781.5h3V783.5h-3ZM818 782h1V783.5h-1ZM819 781.5h1V783h-1ZM820 782h1V783.5h-1ZM821 781.5h1V783.5h-1ZM822 781.5h1V783h-1ZM823 781.5h3V783.5h-3ZM826 782h1V783.5h-1ZM827 781.5h1V783.5h-1ZM828 782h1V783.5h-1ZM829 781.5h2V783.5h-2ZM831 782h1V784h-1ZM832 782h1V783.5h-1ZM833 782h1V784h-1ZM834 781.5h1V783.5h-1ZM835 781.5h1V783h-1ZM836 782h1V783.5h-1ZM837 781.5h5V783.5h-5ZM842 782h1V783.5h-1ZM843 782h1V784h-1ZM844 781.5h1V783.5h-1ZM845 782h3V783.5h-3ZM848 782h1V784h-1ZM849 782h1V783.5h-1ZM850 781.5h1V783.5h-1ZM851 782h2V783.5h-2ZM853 781.5h1V783.5h-1ZM854 781.5h1V783h-1ZM855 782h5V783.5h-5ZM860 781.5h1V783h-1ZM861 782h2V784h-2ZM863 781.5h1V783.5h-1ZM864 782h1V783.5h-1ZM865 782h1V784h-1ZM866 781.5h2V783.5h-2ZM868 782h2V783.5h-2ZM870 781.5h1V783.5h-1ZM871 782h1V783.5h-1ZM872 782h1V784h-1ZM873 781.5h1V783.5h-1ZM874 782h1V783.5h-1ZM875 781.5h1V783.5h-1ZM876 782h2V783.5h-2ZM878 781.5h7V783.5h-7ZM885 782h1V783.5h-1ZM886 781.5h3V783.5h-3ZM889 782h1V783.5h-1ZM890 781.5h2V783.5h-2ZM892 782h2V783.5h-2ZM894 781.5h1V783.5h-1ZM895 782h1V784h-1ZM896 781.5h1V783.5h-1ZM897 782h1V783.5h-1ZM898 781.5h1V783.5h-1ZM899 782h1V783.5h-1ZM900 781.5h1V783.5h-1ZM901 782h3V783.5h-3ZM904 781.5h4V783.5h-4ZM908 782h1V783.5h-1ZM909 781.5h3V783h-3ZM912 782h1V783.5h-1ZM913 781.5h1V783.5h-1ZM914 782h1V783.5h-1ZM915 781.5h1V783.5h-1ZM916 782h1V784h-1ZM917 782h2V783.5h-2ZM919 781.5h1V783.5h-1ZM920 782h1V783.5h-1ZM921 781.5h1V783.5h-1ZM922 781.5h1V783h-1ZM923 782h1V783.5h-1ZM924 781.5h1V783.5h-1ZM925 782h1V783.5h-1ZM926 781.5h1V783h-1ZM927 781.5h3V783.5h-3ZM930 782h1V783.5h-1ZM931 781.5h1V783.5h-1ZM932 782h1V783.5h-1ZM933 781.5h1V783.5h-1ZM934 782h1V784h-1ZM935 781.5h1V783.5h-1ZM936 782h1V783.5h-1ZM937 782h1V784h-1ZM938 782h2V783.5h-2ZM940 781.5h1V783.5h-1ZM941 782h1V784h-1ZM942 781.5h1V783h-1ZM943 782h5V783.5h-5ZM948 782h1V784h-1ZM949 781.5h1V783.5h-1ZM950 782h2V783.5h-2ZM952 781.5h4V783.5h-4ZM956 782h3V783.5h-3ZM959 781.5h1V783h-1ZM960 782h1V783.5h-1ZM961 782h1V784h-1ZM962 782h1V783.5h-1ZM963 782h2V784h-2ZM965 782h2V783.5h-2ZM967 781.5h1V783.5h-1ZM968 782h1V783.5h-1ZM969 781.5h4V783.5h-4ZM973 781.5h1V783h-1ZM974 781.5h3V783.5h-3ZM977 781.5h1V783h-1ZM978 782h2V783.5h-2ZM980 781.5h1V783.5h-1ZM981 782h2V783.5h-2ZM983 781.5h1V783h-1ZM984 781.5h1V783.5h-1ZM985 782h1V783.5h-1ZM986 781.5h1V783.5h-1ZM987 782h2V783.5h-2ZM989 781.5h2V783.5h-2ZM991 782h1V783.5h-1ZM992 781.5h1V783h-1ZM993 782h1V783.5h-1ZM994 781.5h5V783.5h-5ZM999 782h1V783.5h-1ZM1000 781.5h1V783.5h-1ZM1001 782h1V783.5h-1ZM1002 782h1V784h-1ZM1003 782h1V783.5h-1ZM1004 781.5h2V783.5h-2ZM1006 782h1V783.5h-1ZM1007 782h1V784h-1ZM1008 782h1V783.5h-1ZM1009 781.5h1V783.5h-1ZM1010 782h1V783.5h-1ZM1011 781.5h1V783.5h-1ZM1012 782h1V783.5h-1ZM1013 781.5h1V783.5h-1ZM1014 782h1V784h-1ZM1015 782h1V783.5h-1ZM1016 781.5h1V783.5h-1ZM1017 782h1V783.5h-1ZM1018 781.5h4V783.5h-4ZM1022 782h1V784h-1ZM1023 781.5h2V783.5h-2ZM1025 781.5h1V783h-1ZM1026 781.5h1V783.5h-1ZM1027 782h1V783.5h-1ZM1028 781.5h1V783.5h-1ZM1029 782h1V783.5h-1ZM1030 781.5h1V783.5h-1ZM1031 782h1V783.5h-1ZM1032 781.5h1V783.5h-1ZM1033 782h1V784h-1ZM1034 782h1V783.5h-1ZM1035 781.5h1V783h-1ZM1036 782h1V783.5h-1ZM1037 781.5h2V783.5h-2ZM1039 782h2V783.5h-2ZM1041 781.5h3V783.5h-3ZM1044 782h1V783.5h-1ZM1045 781.5h1V783.5h-1ZM1046 782h1V783.5h-1ZM1047 782h1V784h-1ZM1048 781.5h1V783h-1ZM1049 781.5h1V783.5h-1ZM1050 782h2V783.5h-2ZM1052 782h1V784h-1ZM1053 781.5h2V783.5h-2ZM1055 782h3V783.5h-3ZM1058 781.5h2V783.5h-2ZM1060 782h1V783.5h-1ZM1061 781.5h1V783.5h-1ZM1062 781.5h2V783h-2ZM1064 781.5h5V783.5h-5ZM1069 782h1V783.5h-1ZM1070 781.5h1V783.5h-1ZM1071 782h3V783.5h-3ZM1074 781.5h2V783.5h-2ZM1076 782h2V783.5h-2ZM1078 781.5h1V783.5h-1ZM1079 782h1V783.5h-1ZM1080 781.5h2V783.5h-2ZM1082 782h1V783.5h-1ZM1083 781.5h2V783.5h-2ZM1085 782h2V783.5h-2ZM1087 781.5h1V783h-1ZM1088 781.5h3V783.5h-3ZM1091 782h1V783.5h-1ZM1092 781.5h2V783.5h-2ZM1094 782h1V783.5h-1ZM1095 781.5h2V783.5h-2ZM1097 782h3V783.5h-3ZM1100 781.5h7V783.5h-7ZM1107 782h1V784h-1ZM1108 782h1V783.5h-1ZM1109 781.5h1V783h-1ZM1110 781.5h1V783.5h-1ZM1111 782h1V783.5h-1ZM1112 781.5h1V783h-1ZM1113 782h1V784h-1ZM1114 782h1V783.5h-1ZM1115 781.5h2V783.5h-2ZM1117 782h1V783.5h-1ZM1118 781.5h5V783.5h-5ZM1123 781.5h1V783h-1ZM1124 782h1V783.5h-1ZM1125 781.5h3V783.5h-3ZM1128 782h1V783.5h-1ZM1129 781.5h3V783.5h-3ZM1132 782h1V783.5h-1ZM1133 781.5h2V783.5h-2ZM1135 782h2V783.5h-2ZM1137 781.5h3V783.5h-3ZM1140 782h1V783.5h-1ZM1141 781.5h4V783.5h-4ZM1145 782h1V783.5h-1ZM1146 781.5h2V783.5h-2ZM1148 782h1V784h-1ZM1149 782h1V783.5h-1ZM1150 781.5h3V783.5h-3ZM1153 782h1V784h-1ZM1154 781.5h1V783.5h-1ZM1155 782h1V784h-1ZM1156 781.5h8V783.5h-8ZM1164 782h2V783.5h-2ZM1166 781.5h2V783.5h-2ZM1168 781.5h1V783h-1ZM1169 781.5h2V783.5h-2ZM1171 782h1V783.5h-1ZM1172 782h1V784h-1ZM1173 782h1V783.5h-1ZM1174 781.5h3V783.5h-3ZM1177 781.5h2V783h-2ZM1179 781.5h1V783.5h-1ZM1180 782h2V784h-2ZM1182 781.5h1V783h-1ZM1183 781.5h2V783.5h-2ZM1185 782h1V783.5h-1ZM1186 781.5h2V783.5h-2ZM1188 782h2V783.5h-2ZM1190 781.5h2V783.5h-2ZM1192 782h1V783.5h-1ZM1193 781.5h1V783.5h-1ZM1194 782h2V783.5h-2ZM1196 781.5h3V783.5h-3ZM1199 782h1V783.5h-1ZM1200 781.5h1V783.5h-1ZM1201 782h4V783.5h-4ZM1205 781.5h1V783.5h-1ZM1206 782h1V783.5h-1ZM1207 781.5h1V783.5h-1ZM1208 782h2V783.5h-2ZM1210 781.5h1V783.5h-1ZM1211 782h2V783.5h-2ZM1213 781.5h1V783h-1ZM1214 781.5h2V783.5h-2ZM1216 782h2V783.5h-2ZM1218 781.5h1V783.5h-1ZM1219 782h1V784h-1ZM1220 781.5h2V783.5h-2ZM1222 782h1V783.5h-1ZM1223 781.5h1V783.5h-1ZM1224 782h1V783.5h-1ZM1225 781.5h1V783h-1ZM1226 781.5h1V783.5h-1ZM1227 782h2V783.5h-2ZM1229 781.5h3V783.5h-3ZM1232 781.5h1V783h-1ZM1233 782h1V784h-1ZM1234 781.5h1V783h-1ZM1235 782h1V784h-1ZM1236 782h2V783.5h-2ZM1238 781.5h3V783.5h-3ZM1241 782h1V784h-1ZM1242 781.5h2V783.5h-2ZM1244 782h1V783.5h-1ZM1245 782h1V784h-1ZM1246 782h1V783.5h-1ZM1247 782h1V784h-1ZM1248 782h1V783.5h-1ZM1249 781.5h1V783.5h-1ZM1250 782h1V784h-1ZM1251 781.5h1V783h-1ZM1252 782h1V783.5h-1ZM1253 781.5h1V783h-1ZM1254 781.5h1V783.5h-1ZM1255 781.5h1V783h-1ZM1256 781.5h1V783.5h-1ZM1257 782h3V783.5h-3ZM1260 781.5h5V783.5h-5ZM1265 782h1V783.5h-1ZM1266 781.5h1V783.5h-1ZM1267 782h1V784h-1ZM1268 781.5h1V783.5h-1ZM1269 782h1V783.5h-1ZM1270 781.5h2V783h-2ZM1272 782h1V784h-1ZM1273 781.5h2V783.5h-2ZM1275 782h1V783.5h-1ZM1276 781.5h1V783h-1ZM1277 782h2V783.5h-2ZM1279 781.5h1V783.5h-1ZM1280 781.5h1V783h-1ZM1281 781.5h1V783.5h-1ZM1282 782h1V783.5h-1ZM1283 781.5h1V783.5h-1ZM1284 782h4V783.5h-4ZM1288 781.5h1V783.5h-1ZM1289 782h2V783.5h-2ZM1291 781.5h1V783.5h-1ZM1292 781.5h1V783h-1ZM1293 782h1V783.5h-1ZM1294 781.5h1V783.5h-1ZM1295 782h1V783.5h-1ZM1296 781.5h1V783.5h-1ZM1297 782h1V784h-1ZM1298 782h1V783.5h-1ZM1299 781.5h4V783.5h-4ZM1303 782h1V783.5h-1ZM1304 781.5h1V783.5h-1ZM1305 782h1V783.5h-1ZM1306 781.5h1V783.5h-1ZM1307 782h1V783.5h-1ZM1308 782h1V784h-1ZM1309 782h2V783.5h-2ZM1311 781.5h4V783.5h-4ZM1315 782h1V784h-1ZM1316 781.5h1V783.5h-1ZM1317 782h1V784h-1ZM1318 782h1V783.5h-1ZM1319 781.5h4V783.5h-4ZM1323 782h1V784h-1ZM1324 782h1V783.5h-1ZM1325 781.5h1V783.5h-1ZM1326 782h1V783.5h-1ZM1327 781.5h3V783.5h-3ZM1330 782h2V783.5h-2ZM1332 781.5h1V783h-1ZM1333 782h3V783.5h-3ZM1336 782h1V784h-1ZM1337 781.5h3V783.5h-3ZM1340 781.5h1V783h-1ZM1341 782h1V783.5h-1ZM1342 781.5h1V783.5h-1ZM1343 782h1V783.5h-1ZM1344 781.5h3V783.5h-3ZM1347 782h2V783.5h-2ZM1349 782h1V784h-1ZM1350 781.5h3V783.5h-3ZM1353 782h1V784h-1ZM1354 781.5h1V783.5h-1ZM1355 781.5h1V783h-1ZM1356 781.5h1V783.5h-1ZM1357 782h1V783.5h-1ZM1358 781.5h2V783.5h-2ZM1360 782h2V783.5h-2ZM1362 781.5h1V783.5h-1ZM1363 782h4V783.5h-4ZM1367 781.5h5V783.5h-5ZM1372 782h1V784h-1ZM1373 782h1V783.5h-1ZM1374 781.5h1V783.5h-1ZM1375 782h2V783.5h-2ZM1377 781.5h4V783.5h-4ZM1381 782h1V783.5h-1ZM1382 781.5h3V783.5h-3ZM1385 782h1V784h-1ZM1386 781.5h4V783.5h-4ZM1390 782h2V783.5h-2ZM1392 781.5h1V783.5h-1ZM1393 782h1V784h-1ZM1394 781.5h1V783.5h-1ZM1395 782h1V783.5h-1ZM1396 781.5h4V783.5h-4ZM1400 782h1V783.5h-1ZM1401 781.5h1V783.5h-1ZM1402 782h2V783.5h-2ZM1404 781.5h1V783h-1ZM1405 781.5h1V783.5h-1ZM1406 782h3V783.5h-3ZM1409 781.5h1V783h-1ZM1410 782h1V783.5h-1ZM1411 781.5h1V783.5h-1ZM1412 781.5h1V783h-1ZM1413 782h1V783.5h-1ZM1414 781.5h4V783.5h-4ZM1418 782h1V783.5h-1ZM1419 781.5h1V783h-1ZM1420 781.5h2V783.5h-2ZM1422 782h1V783.5h-1ZM1423 781.5h2V783.5h-2ZM1425 782h1V783.5h-1ZM1426 781.5h2V783.5h-2ZM1428 782h1V783.5h-1ZM1429 781.5h6V783.5h-6ZM1435 782h1V784h-1ZM1436 781.5h8V783.5h-8ZM1444 782h1V783.5h-1ZM1445 781.5h1V783.5h-1ZM1446 782h1V783.5h-1ZM1447 782h1V784h-1ZM1448 782h1V783.5h-1ZM1449 781.5h1V783.5h-1ZM1450 782h2V783.5h-2ZM1452 781.5h1V783.5h-1ZM1453 781.5h1V783h-1ZM1454 782h1V783.5h-1ZM1455 781.5h2V783.5h-2ZM1457 781.5h1V783h-1ZM1458 781.5h1V783.5h-1ZM1459 782h2V783.5h-2ZM1461 781.5h1V783.5h-1ZM1462 782h2V783.5h-2ZM1464 781.5h1V783.5h-1ZM1465 782h1V783.5h-1ZM1466 781.5h5V783.5h-5ZM1471 782h1V784h-1ZM1472 781.5h1V783.5h-1ZM1473 782h1V784h-1ZM1474 781.5h1V783h-1ZM1475 781.5h2V783.5h-2ZM1477 782h1V784h-1ZM1478 781.5h1V783.5h-1ZM1479 782h1V784h-1ZM1480 781.5h3V783.5h-3ZM1483 781.5h1V783h-1ZM1484 781.5h5V783.5h-5ZM1489 782h1V784h-1ZM1490 781.5h1V783.5h-1ZM1491 782h2V783.5h-2ZM1493 781.5h1V783.5h-1ZM1494 782h1V783.5h-1ZM1495 781.5h1V783h-1ZM1496 781.5h1V783.5h-1ZM1497 782h1V783.5h-1ZM1498 781.5h2V783.5h-2ZM1500 782h1V784h-1ZM1501 782h1V783.5h-1ZM1502 781.5h5V783.5h-5ZM1507 782h1V783.5h-1ZM1508 781.5h1V783.5h-1ZM1509 782h1V783.5h-1ZM1510 781.5h1V783.5h-1ZM1511 782h1V784h-1ZM1512 782h1V783.5h-1ZM1513 781.5h2V783.5h-2ZM1515 782h2V783.5h-2ZM1517 781.5h2V783.5h-2ZM1519 782h2V783.5h-2ZM1521 782h1V784h-1ZM1522 781.5h2V783.5h-2ZM1524 781.5h1V783h-1ZM1525 781.5h3V783.5h-3ZM1528 782h1V783.5h-1ZM1529 781.5h1V783.5h-1ZM1530 782h1V784h-1ZM1531 781.5h3V783.5h-3ZM1534 782h3V783.5h-3ZM1537 781.5h1V783.5h-1ZM1538 782h2V783.5h-2ZM1540 781.5h1V783.5h-1ZM1541 782h2V783.5h-2ZM1543 781.5h2V783.5h-2ZM1545 781.5h1V783h-1ZM1546 781.5h1V783.5h-1ZM1547 781.5h1V783h-1ZM1548 782h1V783.5h-1ZM1549 781.5h1V783.5h-1ZM1550 782h2V783.5h-2ZM1552 781.5h3V783.5h-3ZM1555 782h1V784h-1ZM1556 781.5h1V783.5h-1ZM1557 781.5h2V783h-2ZM1559 781.5h1V783.5h-1ZM1560 782h1V783.5h-1ZM1561 781.5h1V783.5h-1ZM1562 782h1V783.5h-1ZM1563 781.5h1V783.5h-1ZM1564 782h1V784h-1ZM1565 782h1V783.5h-1ZM1566 781.5h5V783.5h-5ZM1571 782h1V784h-1ZM1572 781.5h1V783h-1ZM1573 781.5h1V783.5h-1ZM1574 782h3V783.5h-3ZM1577 781.5h2V783.5h-2ZM1579 782h1V783.5h-1ZM1580 781.5h1V783.5h-1ZM1581 782h1V784h-1ZM1582 781.5h1V783.5h-1ZM1583 782h2V783.5h-2ZM1585 782h1V784h-1ZM1586 781.5h1V783.5h-1ZM1587 782h2V783.5h-2ZM1589 781.5h2V783.5h-2ZM1591 782h1V783.5h-1ZM1592 781.5h2V783.5h-2ZM1594 782h1V784h-1ZM1595 781.5h1V783.5h-1ZM1596 782h2V784h-2ZM1598 781.5h2V783.5h-2ZM1600 782h1V783.5h-1ZM1601 781.5h3V783.5h-3ZM1604 782h3V783.5h-3ZM1607 781.5h3V783.5h-3ZM1610 781.5h1V783h-1ZM1611 781.5h1V783.5h-1ZM1612 782h1V783.5h-1ZM1613 782h1V784h-1ZM1614 781.5h2V783.5h-2ZM1616 782h2V783.5h-2ZM1618 781.5h2V783.5h-2ZM1620 782h2V783.5h-2ZM1622 781.5h4V783.5h-4ZM1626 782h1V784h-1ZM1627 781.5h1V783.5h-1ZM1628 781.5h1V783h-1ZM1629 781.5h1V783.5h-1ZM1630 782h2V784h-2ZM1632 781.5h1V783.5h-1ZM1633 782h1V784h-1ZM1634 782h1V783.5h-1ZM1635 781.5h9V783.5h-9ZM1644 782h1V783.5h-1ZM1645 781.5h5V783.5h-5ZM1650 782h1V783.5h-1ZM1651 781.5h3V783.5h-3ZM1654 782h1V783.5h-1ZM1655 781.5h5V783.5h-5ZM1660 781.5h1V783h-1ZM1661 782h1V783.5h-1ZM1662 781.5h2V783.5h-2ZM1664 782h1V784h-1ZM1665 781.5h1V783h-1ZM1666 781.5h1V783.5h-1ZM1667 782h4V783.5h-4ZM1671 781.5h1V783.5h-1ZM1672 782h1V783.5h-1ZM1673 781.5h1V783.5h-1ZM1674 782h2V783.5h-2ZM1676 781.5h1V783h-1ZM1677 782h1V783.5h-1ZM1678 781.5h4V783.5h-4ZM1682 782h3V783.5h-3ZM1685 781.5h3V783.5h-3ZM1688 781.5h1V783h-1ZM1689 781.5h1V783.5h-1ZM1690 782h4V783.5h-4ZM1694 781.5h1V783.5h-1ZM1695 782h4V783.5h-4ZM1699 781.5h1V783.5h-1ZM1700 781.5h1V783h-1ZM1701 781.5h3V783.5h-3ZM1704 781.5h1V783h-1ZM1705 782h2V783.5h-2ZM1707 781.5h1V783.5h-1ZM1708 782h1V783.5h-1ZM1709 781.5h2V783.5h-2ZM1711 782h1V784h-1ZM1712 781.5h2V783.5h-2ZM1714 781.5h1V783h-1ZM1715 781.5h1V783.5h-1ZM1716 782h1V783.5h-1ZM1717 781.5h2V783.5h-2ZM1719 782h1V783.5h-1ZM1720 781.5h1V783.5h-1ZM1721 782h1V784h-1ZM1722 782h1V783.5h-1ZM1723 781.5h1V783h-1ZM1724 782h5V783.5h-5ZM1729 781.5h2V783.5h-2ZM1731 782h1V783.5h-1ZM1732 781.5h1V783.5h-1ZM1733 782h1V783.5h-1ZM1734 781.5h1V783.5h-1ZM1735 782h1V783.5h-1ZM1736 781.5h2V783.5h-2ZM1738 782h1V783.5h-1ZM1739 781.5h9V783.5h-9ZM1748 782h1V783.5h-1ZM1749 781.5h1V783.5h-1ZM1750 782h1V783.5h-1ZM1751 781.5h5V783.5h-5ZM1756 782h1V783.5h-1ZM1757 782h1V784h-1ZM1758 781.5h1V783.5h-1ZM1759 782h2V783.5h-2ZM1761 781.5h5V783.5h-5ZM1766 782h2V783.5h-2ZM1768 782h1V784h-1ZM1769 781.5h1V783h-1ZM1770 781.5h1V783.5h-1ZM1771 782h1V784h-1ZM1772 781.5h2V783.5h-2ZM1774 782h4V783.5h-4ZM1778 781.5h2V783.5h-2ZM1780 782h1V783.5h-1ZM1781 782h1V784h-1ZM1782 781.5h1V783.5h-1ZM1783 782h1V783.5h-1ZM1784 781.5h1V783.5h-1ZM1785 781.5h1V783h-1ZM1786 782h1V783.5h-1ZM1787 781.5h4V783.5h-4ZM1791 782h3V783.5h-3ZM1794 782h1V784h-1ZM1795 782h1V783.5h-1ZM1796 781.5h5V783.5h-5ZM1801 782h1V784h-1ZM1802 781.5h1V783h-1ZM1803 781.5h3V783.5h-3ZM1806 782h1V783.5h-1ZM1807 781.5h2V783.5h-2ZM1809 782h2V783.5h-2ZM1811 781.5h1V783.5h-1ZM1812 782h2V783.5h-2ZM1814 781.5h4V783.5h-4ZM1818 782h1V784h-1ZM1819 782h4V783.5h-4ZM1823 781.5h2V783.5h-2ZM1825 781.5h1V783h-1ZM1826 782h1V783.5h-1ZM1827 781.5h1V783.5h-1ZM1828 782h2V783.5h-2ZM1830 781.5h1V783.5h-1ZM1831 782h1V783.5h-1ZM1832 781.5h1V783.5h-1Z" fill="#d8102c"/><path d="M264 782.5h1V786h-1ZM265 783h1V786.5h-1ZM266 782.5h2V786h-2ZM268 783h1V786.5h-1ZM269 783h1V786h-1ZM270 782.5h1V786h-1ZM271 783h1V786.5h-1ZM272 782.5h2V786h-2ZM274 783h3V786.5h-3ZM277 782.5h1V786h-1ZM278 783h2V786h-2ZM280 782.5h2V786h-2ZM282 783h2V786.5h-2ZM284 783h1V786h-1ZM285 782.5h1V786h-1ZM286 783h1V786h-1ZM287 782.5h2V786h-2ZM289 783h1V786.5h-1ZM290 782.5h4V786h-4ZM294 783h2V786.5h-2ZM296 782.5h1V786h-1ZM297 783h2V786.5h-2ZM299 782.5h1V786h-1ZM300 783h1V786.5h-1ZM301 782.5h3V786h-3ZM304 783h1V786.5h-1ZM305 782.5h1V786h-1ZM306 783h1V786h-1ZM307 782.5h5V786h-5ZM312 783h1V786h-1ZM313 782.5h8V786h-8ZM321 783h2V786h-2ZM323 783h1V786.5h-1ZM324 782.5h1V786h-1ZM325 783h1V786.5h-1ZM326 782.5h1V786h-1ZM327 783h2V786.5h-2ZM329 782.5h4V786h-4ZM333 781h1V786.5h-1ZM334 782.5h1V786h-1ZM335 783h1V786h-1ZM336 782.5h6V786h-6ZM342 783h1V786h-1ZM343 783h1V786.5h-1ZM344 783h1V786h-1ZM345 783h2V786.5h-2ZM347 782h1V786h-1ZM348 783h1V786.5h-1ZM349 783h1V786h-1ZM350 782.5h2V786h-2ZM352 783h1V786.5h-1ZM353 783h2V786h-2ZM355 783h2V786.5h-2ZM357 782.5h1V786h-1ZM358 783h1V786.5h-1ZM359 782.5h3V786h-3ZM362 783h3V786.5h-3ZM365 783h1V786h-1ZM366 783h1V786.5h-1ZM367 782.5h2V786h-2ZM369 783h1V786.5h-1ZM370 782.5h3V786h-3ZM373 783h2V786.5h-2ZM375 782.5h1V786h-1ZM376 783h1V786.5h-1ZM377 782.5h1V786h-1ZM378 783h1V786.5h-1ZM379 782.5h1V786h-1ZM380 783h2V786h-2ZM382 783h1V786.5h-1ZM383 782.5h2V786h-2ZM385 783h1V786h-1ZM386 783h2V786.5h-2ZM388 783h1V786h-1ZM389 782.5h3V786h-3ZM392 783h1V786h-1ZM393 782.5h1V786h-1ZM394 783h1V786.5h-1ZM395 781.5h1V786h-1ZM396 783h1V786.5h-1ZM397 782.5h1V786h-1ZM398 783h2V786.5h-2ZM400 782.5h1V786h-1ZM401 783h4V786.5h-4ZM405 782.5h1V786h-1ZM406 783h2V786.5h-2ZM408 783h1V786h-1ZM409 783h2V786.5h-2ZM411 783h1V786h-1ZM412 783h4V786.5h-4ZM416 782.5h2V786h-2ZM418 783h1V786.5h-1ZM419 783h2V786h-2ZM421 782.5h5V786h-5ZM426 783h1V786.5h-1ZM427 782.5h5V786h-5ZM432 783h1V786h-1ZM433 783h3V786.5h-3ZM436 782.5h1V786h-1ZM437 783h1V786h-1ZM438 783h2V786.5h-2ZM440 783h1V786h-1ZM441 782.5h1V786h-1ZM442 783h1V786h-1ZM443 782.5h3V786h-3ZM446 783h2V786.5h-2ZM448 782.5h1V786h-1ZM449 783h1V786h-1ZM450 783h1V786.5h-1ZM451 783h1V786h-1ZM452 615h1V786h-1ZM453 583h1V615.5h-1ZM454 583.5h1V587.5h-1ZM455 584.5h1V588.5h-1ZM456 585.5h1V589.5h-1ZM457 586.5h1V591h-1ZM458 587.5h1V592h-1ZM459 588.5h1V593h-1ZM460 589.5h1V594h-1ZM461 590.5h1V595h-1ZM462 591.5h1V596h-1ZM463 592.5h1V597h-1ZM464 594h1V598h-1ZM465 595h1V599h-1ZM466 596h1V600h-1ZM467 597h1V601h-1ZM468 580.5h1V609h-1ZM469 595h1V604.5h-1ZM470 578h1V603h-1ZM471 593h1V605.5h-1ZM472 578.5h1V601.5h-1ZM473 592h1V601h-1ZM474 581.5h1V600h-1ZM475 590h1V600h-1ZM476 578.5h1V598.5h-1ZM477 589h1V598h-1ZM478 578h1V597h-1ZM479 587h1V596h-1ZM480 578h1V595.5h-1ZM481 586h1V595h-1ZM482 576.5h1V594h-1ZM483 584h1V593h-1ZM484 579h1V995h-1ZM485 897h1V995h-1ZM486 795h1V898h-1ZM487 780.5h1V786h-1ZM487 788.5h1V798h-1ZM488 782.5h1V786h-1ZM488 788.5h1V802.5h-1ZM489 777.5h1V791.5h-1ZM490 783h1V798.5h-1ZM491 781h1V786h-1ZM491 791.5h1V797h-1ZM492 782.5h1V786h-1ZM492 794.5h1V803h-1ZM493 782h1V786.5h-1ZM493 800h1V808.5h-1ZM494 783h1V786.5h-1ZM494 803h1V809h-1ZM495 782.5h1V786h-1ZM495 800h1V805.5h-1ZM496 783h1V786h-1ZM496 797.5h1V803h-1ZM497 783h1V786.5h-1ZM497 795.5h1V800.5h-1ZM498 783h1V786.5h-1ZM498 794h1V798.5h-1ZM499 783h1V786h-1ZM499 792h1V796.5h-1ZM500 783h1V786.5h-1ZM500 791h1V795h-1ZM501 782.5h1V786h-1ZM501 790h1V793.5h-1ZM502 783h1V786.5h-1ZM502 789h1V792.5h-1ZM503 783h1V786h-1ZM503 788h1V791.5h-1ZM504 783h1V786h-1ZM504 787.5h1V791h-1ZM505 783h1V790h-1ZM506 783h1V789.5h-1ZM507 783h1V789h-1ZM508 783h1V788.5h-1ZM509 783h2V788h-2ZM511 782.5h1V787.5h-1ZM512 783h1V787.5h-1ZM513 783h1V787h-1ZM514 782.5h1V787h-1ZM515 783h1V787h-1ZM516 782.5h1V786.5h-1ZM517 783h1V786.5h-1ZM518 782.5h1V786.5h-1ZM519 783h2V786.5h-2ZM521 782.5h1V786.5h-1ZM522 783h1V786h-1ZM523 783h1V786.5h-1ZM524 783h1V788h-1ZM525 783h1V790h-1ZM526 783h1V786.5h-1ZM526 787h1V792h-1ZM527 783h1V786h-1ZM527 789h1V792h-1ZM528 783h1V786h-1ZM528 788.5h1V791.5h-1ZM529 782.5h1V786h-1ZM529 788h1V791h-1ZM530 783h1V791h-1ZM531 782.5h1V789h-1ZM532 783h1V787.5h-1ZM533 783h1V786h-1ZM534 783h4V786.5h-4ZM538 782.5h2V786h-2ZM540 783h1V786.5h-1ZM541 783h1V786h-1ZM542 782.5h5V786h-5ZM547 783h4V786.5h-4ZM551 782.5h2V786h-2ZM553 783h1V786.5h-1ZM554 783h1V786h-1ZM555 783h1V786.5h-1ZM556 782.5h2V786h-2ZM558 783h1V786h-1ZM559 782.5h2V786h-2ZM561 783h2V786.5h-2ZM563 782.5h1V786h-1ZM564 783h1V786h-1ZM565 781h1V786.5h-1ZM566 783h1V786h-1ZM567 782.5h1V786h-1ZM568 783h1V786.5h-1ZM569 782.5h1V786h-1ZM570 783h1V786h-1ZM571 783h1V786.5h-1ZM572 782.5h1V786h-1ZM573 783h1V786.5h-1ZM574 782.5h1V786h-1ZM575 783h3V786.5h-3ZM578 782.5h2V786h-2ZM580 783h3V786.5h-3ZM583 783h2V786h-2ZM585 782.5h1V786h-1ZM586 783h1V786h-1ZM587 782.5h3V786h-3ZM590 783h2V786h-2ZM592 783h1V786.5h-1ZM593 782.5h1V786h-1ZM594 780.5h1V786.5h-1ZM595 782.5h2V786h-2ZM597 783h1V786.5h-1ZM598 783h1V786h-1ZM599 782.5h2V786h-2ZM601 783h3V786.5h-3ZM604 782.5h1V786h-1ZM605 783h1V786.5h-1ZM606 782.5h1V786h-1ZM607 783h2V786.5h-2ZM609 782.5h2V786h-2ZM611 783h2V786.5h-2ZM613 782.5h1V786h-1ZM614 783h3V786h-3ZM617 783h2V786.5h-2ZM619 782.5h2V786h-2ZM621 783h1V786.5h-1ZM622 782.5h2V786h-2ZM624 783h1V786.5h-1ZM625 783h1V786h-1ZM626 782.5h2V786h-2ZM628 783h1V786.5h-1ZM629 782.5h1V786h-1ZM630 783h3V786.5h-3ZM633 783h2V786h-2ZM635 782.5h1V786h-1ZM636 783h2V786.5h-2ZM638 782.5h3V786h-3ZM641 783h3V786h-3ZM644 782.5h2V786h-2ZM646 783h1V786.5h-1ZM647 782.5h1V786h-1ZM648 783h1V786.5h-1ZM649 782.5h3V786h-3ZM652 783h1V786.5h-1ZM653 782.5h2V786h-2ZM655 783h1V786h-1ZM656 782.5h6V786h-6ZM662 783h2V786.5h-2ZM664 783h1V786h-1ZM665 782.5h1V786h-1ZM666 783h2V786.5h-2ZM668 782.5h1V786h-1ZM669 783h1V786h-1ZM670 783h3V786.5h-3ZM673 783h1V786h-1ZM674 783h2V786.5h-2ZM676 783h1V786h-1ZM677 782.5h2V786h-2ZM679 783h1V786h-1ZM680 782.5h1V786h-1ZM681 783h2V786.5h-2ZM683 783h1V786h-1ZM684 782.5h2V786h-2ZM686 783h1V786h-1ZM687 783h1V786.5h-1ZM688 782.5h1V786h-1ZM689 783h1V786.5h-1ZM690 783h1V786h-1ZM691 782.5h1V786h-1ZM692 783h1V786.5h-1ZM693 781.5h1V786h-1ZM694 782.5h1V786.5h-1ZM695 783h1V786.5h-1ZM696 783h1V786h-1ZM697 782.5h1V786h-1ZM698 783h1V786h-1ZM699 783h1V786.5h-1ZM700 782.5h1V786h-1ZM701 783h2V786.5h-2ZM703 783h1V786h-1ZM704 782.5h4V786h-4ZM708 783h1V786.5h-1ZM709 782.5h3V786h-3ZM712 783h3V786.5h-3ZM715 782.5h1V786h-1ZM716 783h2V786.5h-2ZM718 782.5h1V786h-1ZM719 783h1V786.5h-1ZM720 782.5h7V786h-7ZM727 783h1V786.5h-1ZM728 782.5h2V786h-2ZM730 783h1V786.5h-1ZM731 782.5h1V786h-1ZM732 783h2V786.5h-2ZM734 782.5h1V786h-1ZM735 783h2V786h-2ZM737 782.5h1V786h-1ZM738 783h2V786.5h-2ZM740 782.5h1V786h-1ZM741 783h3V786.5h-3ZM744 783h1V786h-1ZM745 783h1V786.5h-1ZM746 783h1V786h-1ZM747 783h1V786.5h-1ZM748 782.5h1V786h-1ZM749 783h1V786.5h-1ZM750 783h1V786h-1ZM751 782.5h2V786h-2ZM753 783h1V786.5h-1ZM754 783h1V786h-1ZM755 783h1V786.5h-1ZM756 783h1V786h-1ZM757 782.5h1V786h-1ZM758 783h2V786.5h-2ZM760 782.5h1V786h-1ZM761 783h1V786h-1ZM762 615h1V786.5h-1ZM763 583h1V615.5h-1ZM764 583.5h1V587.5h-1ZM765 584.5h1V588.5h-1ZM766 585.5h1V589.5h-1ZM767 586.5h1V591h-1ZM768 587.5h1V592h-1ZM769 588.5h1V593h-1ZM770 589.5h1V594h-1ZM771 590.5h1V595h-1ZM772 591.5h1V596h-1ZM773 592.5h1V597h-1ZM774 594h1V598h-1ZM775 595h1V599h-1ZM776 596h1V600h-1ZM777 597h1V601h-1ZM778 576h1V609h-1ZM779 594.5h1V603.5h-1ZM780 582h1V602.5h-1ZM781 592.5h1V602.5h-1ZM782 579.5h1V601h-1ZM783 591h1V600h-1ZM784 580h1V599h-1ZM785 589h1V598h-1ZM786 578h1V597h-1ZM787 587h1V596h-1ZM788 579h1V595.5h-1ZM789 585.5h1V599h-1ZM790 581h1V593.5h-1ZM791 582h1V995h-1ZM792 890h1V995h-1ZM793 795h1V891h-1ZM794 782.5h1V786h-1ZM794 788.5h1V798h-1ZM795 783h1V786.5h-1ZM795 788.5h1V802.5h-1ZM796 777.5h1V791.5h-1ZM797 783h1V798.5h-1ZM798 783h1V786.5h-1ZM798 791.5h1V797h-1ZM799 783h1V786h-1ZM799 794.5h1V803h-1ZM800 783h1V786.5h-1ZM800 800h1V808.5h-1ZM801 782.5h1V786h-1ZM801 803h1V809h-1ZM802 783h1V786h-1ZM802 800h1V805.5h-1ZM803 783h1V786h-1ZM803 797.5h1V803h-1ZM804 782.5h1V786h-1ZM804 795.5h1V800.5h-1ZM805 782.5h1V786h-1ZM805 794h1V798.5h-1ZM806 783h1V786.5h-1ZM806 792h1V796.5h-1ZM807 782.5h1V786h-1ZM807 791h1V795h-1ZM808 782.5h1V786h-1ZM808 790h1V793.5h-1ZM809 782.5h1V786h-1ZM809 789h1V792.5h-1ZM810 783h1V786.5h-1ZM810 788h1V791.5h-1ZM811 783h1V786.5h-1ZM811 787.5h1V791h-1ZM812 782.5h1V786h-1ZM812 786.5h1V790h-1ZM813 783h1V789.5h-1ZM814 783h1V789h-1ZM815 783h1V788.5h-1ZM816 783h1V788h-1ZM817 782.5h1V788h-1ZM818 783h2V787.5h-2ZM820 783h3V787h-3ZM823 782.5h2V786.5h-2ZM825 783h5V786.5h-5ZM830 783h1V786h-1ZM831 783h1V788h-1ZM832 783h1V790h-1ZM833 783h1V786.5h-1ZM833 787h1V792h-1ZM834 783h1V786.5h-1ZM834 789h1V792h-1ZM835 782.5h1V786h-1ZM835 788.5h1V791.5h-1ZM836 782.5h1V786h-1ZM836 788h1V791h-1ZM837 782.5h1V791h-1ZM838 783h1V789h-1ZM839 782.5h1V787.5h-1ZM840 783h1V786h-1ZM841 783h1V786.5h-1ZM842 782.5h1V786h-1ZM843 783h1V786h-1ZM844 783h1V786.5h-1ZM845 782.5h1V786h-1ZM846 783h1V786h-1ZM847 782.5h2V786h-2ZM849 783h1V786h-1ZM850 783h1V786.5h-1ZM851 782.5h2V786h-2ZM853 783h4V786.5h-4ZM857 782.5h2V786h-2ZM859 783h1V786h-1ZM860 783h1V786.5h-1ZM861 782.5h4V786h-4ZM865 783h2V786.5h-2ZM867 781h1V786h-1ZM868 783h2V786h-2ZM870 782.5h2V786h-2ZM872 783h1V786.5h-1ZM873 782.5h1V786h-1ZM874 783h1V786.5h-1ZM875 783h2V786h-2ZM877 783h1V786.5h-1ZM878 783h3V786h-3ZM881 783h1V786.5h-1ZM882 782.5h1V786h-1ZM883 783h2V786.5h-2ZM885 783h1V786h-1ZM886 783h1V786.5h-1ZM887 782.5h1V786h-1ZM888 783h3V786.5h-3ZM891 782.5h1V786h-1ZM892 783h2V786.5h-2ZM894 782.5h1V786h-1ZM895 783h1V786.5h-1ZM896 782.5h1V786h-1ZM897 783h1V786.5h-1ZM898 783h1V786h-1ZM899 783h2V786.5h-2ZM901 782.5h4V786h-4ZM905 783h2V786.5h-2ZM907 782.5h1V786h-1ZM908 783h1V786h-1ZM909 782.5h3V786h-3ZM912 783h1V786.5h-1ZM913 782.5h1V786h-1ZM914 783h1V786.5h-1ZM915 782.5h1V786h-1ZM916 783h1V786.5h-1ZM917 782.5h2V786h-2ZM919 783h3V786.5h-3ZM922 782.5h1V786h-1ZM923 783h1V786.5h-1ZM924 783h2V786h-2ZM926 783h1V786.5h-1ZM927 783h1V786h-1ZM928 782.5h2V786h-2ZM930 783h1V786.5h-1ZM931 782.5h2V786h-2ZM933 783h1V786h-1ZM934 782.5h2V786h-2ZM936 783h1V786.5h-1ZM937 782.5h1V786h-1ZM938 783h2V786.5h-2ZM940 782.5h1V786h-1ZM941 783h3V786.5h-3ZM944 782.5h2V786h-2ZM946 783h1V786.5h-1ZM947 782.5h3V786h-3ZM950 783h1V786.5h-1ZM951 782.5h1V786h-1ZM952 783h1V786.5h-1ZM953 783h1V786h-1ZM954 783h2V786.5h-2ZM956 782.5h1V786h-1ZM957 783h1V786.5h-1ZM958 783h1V786h-1ZM959 782.5h2V786h-2ZM961 783h1V786.5h-1ZM962 783h1V786h-1ZM963 783h1V786.5h-1ZM964 782.5h1V786h-1ZM965 783h1V786h-1ZM966 783h3V786.5h-3ZM969 783h1V786h-1ZM970 782.5h1V786h-1ZM971 783h1V786h-1ZM972 782.5h3V786h-3ZM975 783h1V786.5h-1ZM976 782.5h1V786h-1ZM977 783h1V786.5h-1ZM978 783h2V786h-2ZM980 783h2V786.5h-2ZM982 782.5h2V786h-2ZM984 783h1V786h-1ZM985 782.5h1V786h-1ZM986 783h1V786h-1ZM987 783h1V786.5h-1ZM988 782.5h1V786h-1ZM989 783h1V786.5h-1ZM990 782.5h4V786h-4ZM994 783h1V786.5h-1ZM995 782.5h1V786h-1ZM996 783h1V786.5h-1ZM997 783h1V786h-1ZM998 782.5h3V786h-3ZM1001 783h2V786.5h-2ZM1003 783h1V786h-1ZM1004 783h4V786.5h-4ZM1008 783h1V786h-1ZM1009 783h1V786.5h-1ZM1010 782.5h2V786h-2ZM1012 782.5h1V786.5h-1ZM1013 783h1V786.5h-1ZM1014 782h1V786.5h-1ZM1015 782.5h1V786h-1ZM1016 783h1V786.5h-1ZM1017 782.5h3V786h-3ZM1020 783h1V786h-1ZM1021 783h2V786.5h-2ZM1023 782.5h2V786h-2ZM1025 783h1V786.5h-1ZM1026 782.5h2V786h-2ZM1028 783h1V786.5h-1ZM1029 783h1V786h-1ZM1030 783h3V786.5h-3ZM1033 783h1V786h-1ZM1034 782.5h1V786h-1ZM1035 783h1V786h-1ZM1036 783h2V786.5h-2ZM1038 783h1V786h-1ZM1039 782.5h2V786h-2ZM1041 783h1V786h-1ZM1042 783h1V786.5h-1ZM1043 783h1V786h-1ZM1044 783h2V786.5h-2ZM1046 782.5h1V786h-1ZM1047 783h1V786h-1ZM1048 783h2V786.5h-2ZM1050 782.5h1V786h-1ZM1051 783h2V786.5h-2ZM1053 782.5h1V786h-1ZM1054 783h2V786.5h-2ZM1056 782.5h2V786h-2ZM1058 783h1V786.5h-1ZM1059 783h1V786h-1ZM1060 783h2V786.5h-2ZM1062 782.5h2V786h-2ZM1064 783h2V786.5h-2ZM1066 782.5h1V786h-1ZM1067 783h1V786.5h-1ZM1068 615h1V786h-1ZM1069 583h1V615.5h-1ZM1070 583.5h1V587.5h-1ZM1071 584.5h1V588.5h-1ZM1072 585.5h1V589.5h-1ZM1073 586.5h1V591h-1ZM1074 587.5h1V592h-1ZM1075 588.5h1V593h-1ZM1076 589.5h1V594h-1ZM1077 590.5h1V595h-1ZM1078 591.5h1V596h-1ZM1079 592.5h1V597h-1ZM1080 594h1V598h-1ZM1081 595h1V599h-1ZM1082 596h1V600h-1ZM1083 597h1V601h-1ZM1084 582h1V609h-1ZM1085 594.5h1V603.5h-1ZM1086 579.5h1V603h-1ZM1087 593h1V602h-1ZM1088 577.5h1V601h-1ZM1089 591h1V601h-1ZM1090 579h1V599.5h-1ZM1091 589.5h1V598.5h-1ZM1092 580h1V597.5h-1ZM1093 588h1V599.5h-1ZM1094 580.5h1V596h-1ZM1095 586h1V598h-1ZM1096 582h1V594h-1ZM1097 584.5h1V593.5h-1ZM1098 576.5h1V995h-1ZM1099 917h1V995h-1ZM1100 795h1V918h-1ZM1101 783h1V786.5h-1ZM1101 788.5h1V798h-1ZM1102 783h1V786h-1ZM1102 788.5h1V802.5h-1ZM1103 777.5h1V791.5h-1ZM1104 782.5h1V786h-1ZM1104 786.5h1V798.5h-1ZM1105 782.5h1V786h-1ZM1105 791.5h1V797h-1ZM1106 782.5h1V786h-1ZM1106 794.5h1V803h-1ZM1107 782.5h1V786h-1ZM1107 800h1V808.5h-1ZM1108 783h1V786h-1ZM1108 803h1V809h-1ZM1109 782.5h1V786h-1ZM1109 800h1V805.5h-1ZM1110 783h1V786.5h-1ZM1110 797.5h1V803h-1ZM1111 782.5h1V786h-1ZM1111 795.5h1V800.5h-1ZM1112 782.5h1V786h-1ZM1112 794h1V798.5h-1ZM1113 783h1V786h-1ZM1113 792h1V796.5h-1ZM1114 783h1V786h-1ZM1114 791h1V795h-1ZM1115 782.5h1V786h-1ZM1115 790h1V793.5h-1ZM1116 782.5h1V786h-1ZM1116 789h1V792.5h-1ZM1117 783h1V786h-1ZM1117 788h1V791.5h-1ZM1118 783h1V786.5h-1ZM1118 787.5h1V791h-1ZM1119 782.5h1V786h-1ZM1119 786.5h1V790h-1ZM1120 783h1V789.5h-1ZM1121 783h1V789h-1ZM1122 783h1V788.5h-1ZM1123 782.5h1V788h-1ZM1124 783h1V788h-1ZM1125 782.5h2V787.5h-2ZM1127 782.5h1V787h-1ZM1128 783h1V787h-1ZM1129 782.5h1V787h-1ZM1130 783h2V786.5h-2ZM1132 782.5h1V786.5h-1ZM1133 783h1V786.5h-1ZM1134 782.5h1V786.5h-1ZM1135 783h3V786.5h-3ZM1138 782.5h1V788h-1ZM1139 783h1V790h-1ZM1140 783h1V786.5h-1ZM1140 787h1V792h-1ZM1141 783h1V786h-1ZM1141 789h1V792h-1ZM1142 782.5h1V786h-1ZM1142 788.5h1V791.5h-1ZM1143 783h1V786.5h-1ZM1143 788h1V791h-1ZM1144 783h1V791h-1ZM1145 783h1V789h-1ZM1146 782.5h1V787.5h-1ZM1147 783h1V786.5h-1ZM1148 783h2V786h-2ZM1150 783h2V786.5h-2ZM1152 783h2V786h-2ZM1154 782.5h3V786h-3ZM1157 783h1V786.5h-1ZM1158 783h1V786h-1ZM1159 782.5h1V786h-1ZM1160 783h2V786.5h-2ZM1162 783h1V786h-1ZM1163 783h3V786.5h-3ZM1166 782.5h2V786h-2ZM1168 783h1V786.5h-1ZM1169 782.5h1V786h-1ZM1170 783h2V786.5h-2ZM1172 783h1V786h-1ZM1173 782.5h1V786h-1ZM1174 783h4V786.5h-4ZM1178 783h1V786h-1ZM1179 782.5h1V786h-1ZM1180 783h1V786h-1ZM1181 783h4V786.5h-4ZM1185 783h2V786h-2ZM1187 783h2V786.5h-2ZM1189 782.5h1V786h-1ZM1190 783h1V786.5h-1ZM1191 782.5h1V786h-1ZM1192 783h1V786h-1ZM1193 783h2V786.5h-2ZM1195 782.5h3V786h-3ZM1198 783h1V786h-1ZM1199 782.5h1V786h-1ZM1200 783h1V786h-1ZM1201 782.5h1V786h-1ZM1202 783h1V786.5h-1ZM1203 782.5h1V786h-1ZM1204 783h1V786.5h-1ZM1205 782.5h1V786h-1ZM1206 783h1V786.5h-1ZM1207 782.5h2V786h-2ZM1209 783h2V786h-2ZM1211 782.5h1V786h-1ZM1212 783h1V786.5h-1ZM1213 782.5h2V786h-2ZM1215 783h1V786.5h-1ZM1216 782.5h1V786h-1ZM1217 783h1V786.5h-1ZM1218 782.5h2V786h-2ZM1220 783h4V786.5h-4ZM1224 782.5h1V786h-1ZM1225 781.5h1V786.5h-1ZM1226 783h1V786.5h-1ZM1227 782.5h2V786h-2ZM1229 783h1V786.5h-1ZM1230 782.5h2V786h-2ZM1232 783h2V786.5h-2ZM1234 782.5h1V786h-1ZM1235 783h2V786.5h-2ZM1237 782.5h1V786h-1ZM1238 783h1V786.5h-1ZM1239 782.5h1V786h-1ZM1240 783h1V786.5h-1ZM1241 782.5h2V786h-2ZM1243 783h1V786.5h-1ZM1244 782.5h2V786h-2ZM1246 783h2V786.5h-2ZM1248 782.5h1V786h-1ZM1249 783h1V786.5h-1ZM1250 782.5h1V786h-1ZM1251 783h2V786h-2ZM1253 783h6V786.5h-6ZM1259 782.5h1V786h-1ZM1260 783h2V786.5h-2ZM1262 783h1V786h-1ZM1263 782.5h1V786h-1ZM1264 783h1V786.5h-1ZM1265 782.5h3V786h-3ZM1268 783h1V786h-1ZM1269 782.5h1V786h-1ZM1270 783h1V786.5h-1ZM1271 783h5V786h-5ZM1276 783h2V786.5h-2ZM1278 782.5h1V786h-1ZM1279 783h1V786.5h-1ZM1280 783h1V786h-1ZM1281 782.5h2V786h-2ZM1283 783h1V786.5h-1ZM1284 782.5h5V786h-5ZM1289 783h1V786.5h-1ZM1290 782.5h1V786h-1ZM1291 783h3V786.5h-3ZM1294 782.5h1V786h-1ZM1295 783h2V786h-2ZM1297 783h2V786.5h-2ZM1299 782.5h1V786h-1ZM1300 783h1V786.5h-1ZM1301 782.5h2V786h-2ZM1303 783h2V786.5h-2ZM1305 782.5h2V786h-2ZM1307 783h2V786.5h-2ZM1309 782.5h1V786h-1ZM1310 783h1V786.5h-1ZM1311 782.5h1V786h-1ZM1312 783h1V786.5h-1ZM1313 782.5h1V786h-1ZM1314 783h1V786.5h-1ZM1315 782.5h2V786h-2ZM1317 783h1V786.5h-1ZM1318 783h1V786h-1ZM1319 782.5h1V786h-1ZM1320 783h3V786h-3ZM1323 782.5h1V786h-1ZM1324 781h1V786h-1ZM1325 782.5h2V786h-2ZM1327 783h2V786.5h-2ZM1329 783h1V786h-1ZM1330 782.5h4V786h-4ZM1334 783h1V786.5h-1ZM1335 782.5h1V786h-1ZM1336 783h1V786.5h-1ZM1337 782.5h1V786h-1ZM1338 783h1V786.5h-1ZM1339 783h1V786h-1ZM1340 783h1V786.5h-1ZM1341 782.5h5V786h-5ZM1346 782.5h1V786.5h-1ZM1347 783h1V786.5h-1ZM1348 782.5h1V786h-1ZM1349 783h2V786.5h-2ZM1351 782.5h3V786h-3ZM1354 783h2V786.5h-2ZM1356 782.5h1V786h-1ZM1357 782.5h1V786.5h-1ZM1358 783h3V786.5h-3ZM1361 782.5h6V786h-6ZM1367 783h1V786.5h-1ZM1368 782.5h1V786h-1ZM1369 783h2V786.5h-2ZM1371 782.5h1V786h-1ZM1372 783h1V786.5h-1ZM1373 782.5h3V786h-3ZM1376 615h1V786.5h-1ZM1377 583h1V615.5h-1ZM1378 583.5h1V587.5h-1ZM1379 584.5h1V588.5h-1ZM1380 585.5h1V589.5h-1ZM1381 586.5h1V591h-1ZM1382 587.5h1V592h-1ZM1383 588.5h1V593h-1ZM1384 589.5h1V594h-1ZM1385 590.5h1V595h-1ZM1386 591.5h1V596h-1ZM1387 592.5h1V597h-1ZM1388 594h1V598h-1ZM1389 595h1V599h-1ZM1390 596h1V600h-1ZM1391 597h1V601h-1ZM1392 576.5h1V609h-1ZM1393 594.5h1V605h-1ZM1394 579.5h1V603h-1ZM1395 593h1V602h-1ZM1396 581.5h1V601h-1ZM1397 591h1V600h-1ZM1398 578.5h1V599.5h-1ZM1399 589.5h1V598.5h-1ZM1400 579h1V597.5h-1ZM1401 588h1V598h-1ZM1402 578.5h1V596h-1ZM1403 586h1V595h-1ZM1404 581h1V594h-1ZM1405 584.5h1V597h-1ZM1406 582h1V995h-1ZM1407 855h1V995h-1ZM1408 795h1V856h-1ZM1409 782.5h1V786h-1ZM1409 788.5h1V798h-1ZM1410 782.5h1V786h-1ZM1410 788.5h1V802.5h-1ZM1411 777.5h1V791.5h-1ZM1412 782.5h1V798.5h-1ZM1413 783h1V786.5h-1ZM1413 791.5h1V797h-1ZM1414 782.5h1V786h-1ZM1414 794.5h1V803h-1ZM1415 782.5h1V786h-1ZM1415 800h1V808.5h-1ZM1416 782.5h1V786h-1ZM1416 803h1V809h-1ZM1417 783h1V786.5h-1ZM1417 800h1V805.5h-1ZM1418 783h1V786.5h-1ZM1418 797.5h1V803h-1ZM1419 783h1V786h-1ZM1419 795.5h1V800.5h-1ZM1420 783h1V786.5h-1ZM1420 794h1V798.5h-1ZM1421 783h1V786.5h-1ZM1421 792h1V796.5h-1ZM1422 783h1V786h-1ZM1422 791h1V795h-1ZM1423 783h1V786.5h-1ZM1423 790h1V793.5h-1ZM1424 783h1V786.5h-1ZM1424 789h1V792.5h-1ZM1425 782.5h1V786h-1ZM1425 788h1V791.5h-1ZM1426 783h1V786.5h-1ZM1426 787.5h1V791h-1ZM1427 783h1V790h-1ZM1428 782.5h1V789.5h-1ZM1429 783h1V789h-1ZM1430 781.5h1V788.5h-1ZM1431 783h2V788h-2ZM1433 783h2V787.5h-2ZM1435 783h1V787h-1ZM1436 782.5h1V787h-1ZM1437 783h1V787h-1ZM1438 782.5h2V786.5h-2ZM1440 783h1V786.5h-1ZM1441 782.5h1V786.5h-1ZM1442 783h4V786.5h-4ZM1446 782.5h1V788h-1ZM1447 782.5h1V790h-1ZM1448 782.5h1V786h-1ZM1448 787h1V792h-1ZM1449 782.5h1V786h-1ZM1449 789h1V792h-1ZM1450 783h1V786.5h-1ZM1450 788.5h1V791.5h-1ZM1451 783h1V786h-1ZM1451 788h1V791h-1ZM1452 782.5h1V791h-1ZM1453 782.5h1V789h-1ZM1454 782.5h1V787.5h-1ZM1455 783h3V786.5h-3ZM1458 782.5h1V786h-1ZM1459 783h8V786.5h-8ZM1467 782.5h1V786h-1ZM1468 783h1V786.5h-1ZM1469 782.5h3V786h-3ZM1472 783h1V786.5h-1ZM1473 783h1V786h-1ZM1474 782.5h1V786h-1ZM1475 783h1V786.5h-1ZM1476 782.5h1V786h-1ZM1477 783h3V786.5h-3ZM1480 782.5h1V786h-1ZM1481 783h2V786.5h-2ZM1483 782.5h1V786h-1ZM1484 783h1V786.5h-1ZM1485 782.5h2V786h-2ZM1487 783h4V786.5h-4ZM1491 783h2V786h-2ZM1493 783h3V786.5h-3ZM1496 782.5h1V786h-1ZM1497 783h1V786.5h-1ZM1498 782.5h1V786h-1ZM1499 781.5h1V786.5h-1ZM1500 783h1V786h-1ZM1501 783h2V786.5h-2ZM1503 782.5h1V786h-1ZM1504 783h1V786.5h-1ZM1505 782.5h1V786h-1ZM1506 783h1V786h-1ZM1507 782.5h1V786h-1ZM1508 783h3V786.5h-3ZM1511 782.5h1V786h-1ZM1512 783h2V786.5h-2ZM1514 783h1V786h-1ZM1515 783h4V786.5h-4ZM1519 782.5h1V786h-1ZM1520 783h1V786h-1ZM1521 782.5h1V786h-1ZM1522 783h1V786.5h-1ZM1523 783h1V786h-1ZM1524 782h1V786h-1ZM1525 782.5h1V786h-1ZM1526 783h1V786h-1ZM1527 782.5h1V786h-1ZM1528 783h1V786.5h-1ZM1529 783h1V786h-1ZM1530 782.5h1V786h-1ZM1531 783h1V786.5h-1ZM1532 782.5h2V786h-2ZM1534 783h1V786.5h-1ZM1535 782.5h1V786h-1ZM1536 783h2V786h-2ZM1538 783h2V786.5h-2ZM1540 783h1V786h-1ZM1541 782.5h10V786h-10ZM1551 783h1V786h-1ZM1552 783h1V786.5h-1ZM1553 782.5h1V786h-1ZM1554 783h1V786h-1ZM1555 782h1V786.5h-1ZM1556 783h2V786.5h-2ZM1558 782.5h2V786h-2ZM1560 783h1V786.5h-1ZM1561 782.5h1V786h-1ZM1562 783h1V786h-1ZM1563 782.5h1V786h-1ZM1564 783h1V786.5h-1ZM1565 782.5h4V786h-4ZM1569 783h1V786.5h-1ZM1570 782.5h1V786h-1ZM1571 783h4V786.5h-4ZM1575 782.5h2V786h-2ZM1577 783h1V786.5h-1ZM1578 782.5h1V786h-1ZM1579 783h1V786.5h-1ZM1580 782.5h1V786h-1ZM1581 783h2V786.5h-2ZM1583 783h1V786h-1ZM1584 782.5h6V786h-6ZM1590 780.5h1V786h-1ZM1591 783h3V786.5h-3ZM1594 782.5h5V786h-5ZM1599 783h1V786.5h-1ZM1600 783h2V786h-2ZM1602 783h1V786.5h-1ZM1603 782.5h1V786h-1ZM1604 783h2V786h-2ZM1606 783h1V786.5h-1ZM1607 782.5h4V786h-4ZM1611 783h1V786.5h-1ZM1612 782.5h1V786h-1ZM1613 783h1V786.5h-1ZM1614 782.5h1V786h-1ZM1615 783h3V786.5h-3ZM1618 782.5h1V786h-1ZM1619 783h2V786.5h-2ZM1621 782.5h2V786h-2ZM1623 783h3V786.5h-3ZM1626 783h1V786h-1ZM1627 782.5h2V786h-2ZM1629 783h1V786.5h-1ZM1630 782.5h1V786h-1ZM1631 783h2V786.5h-2ZM1633 782.5h1V786h-1ZM1634 783h1V786.5h-1ZM1635 782.5h3V786h-3ZM1638 783h1V786.5h-1ZM1639 782.5h1V786h-1ZM1640 783h1V786.5h-1ZM1641 782.5h1V786h-1ZM1642 783h1V786.5h-1ZM1643 782.5h7V786h-7ZM1650 783h2V786.5h-2ZM1652 783h1V786h-1ZM1653 782.5h1V786h-1ZM1654 783h1V786.5h-1ZM1655 782.5h1V786h-1ZM1656 783h2V786.5h-2ZM1658 782.5h1V786h-1ZM1659 783h3V786.5h-3ZM1662 783h1V786h-1ZM1663 782.5h1V786h-1ZM1664 783h1V786.5h-1ZM1665 783h1V786h-1ZM1666 783h1V786.5h-1ZM1667 782.5h4V786h-4ZM1671 783h1V786h-1ZM1672 782.5h1V786h-1ZM1673 783h3V786.5h-3ZM1676 783h1V786h-1ZM1677 782.5h1V786h-1ZM1678 783h2V786.5h-2ZM1680 782.5h1V786h-1ZM1681 783h2V786.5h-2ZM1683 782.5h1V786h-1ZM1684 783h1V786h-1ZM1685 783h1V786.5h-1ZM1686 615h1V786h-1ZM1687 583h1V615.5h-1ZM1688 583.5h1V587.5h-1ZM1689 584.5h1V588.5h-1ZM1690 585.5h1V589.5h-1ZM1691 586.5h1V591h-1ZM1692 587.5h1V592h-1ZM1693 588.5h1V593h-1ZM1694 589.5h1V594h-1ZM1695 590.5h1V595h-1ZM1696 591.5h1V596h-1ZM1697 592.5h1V597h-1ZM1698 594h1V598h-1ZM1699 595h1V599h-1ZM1700 596h1V600h-1ZM1701 597h1V601h-1ZM1702 578h1V609h-1ZM1703 594.5h1V604h-1ZM1704 577.5h1V603h-1ZM1705 593h1V605.5h-1ZM1706 581h1V601h-1ZM1707 591h1V602.5h-1ZM1708 582h1V599.5h-1ZM1709 589.5h1V598.5h-1ZM1710 576.5h1V597.5h-1ZM1711 588h1V597h-1ZM1712 580h1V596h-1ZM1713 586h1V595h-1ZM1714 576.5h1V594h-1ZM1715 584.5h1V594h-1ZM1716 577h1V995h-1ZM1717 940h1V995h-1ZM1718 795h1V941h-1ZM1719 783h1V786.5h-1ZM1719 788.5h1V798h-1ZM1720 783h1V786.5h-1ZM1720 788.5h1V802.5h-1ZM1721 777.5h1V791.5h-1ZM1722 783h1V798.5h-1ZM1723 783h1V786.5h-1ZM1723 791.5h1V797h-1ZM1724 782.5h1V786h-1ZM1724 794.5h1V803h-1ZM1725 783h1V786.5h-1ZM1725 800h1V808.5h-1ZM1726 782.5h1V786h-1ZM1726 803h1V809h-1ZM1727 783h1V786.5h-1ZM1727 800h1V805.5h-1ZM1728 783h1V786.5h-1ZM1728 797.5h1V803h-1ZM1729 783h1V786.5h-1ZM1729 795.5h1V800.5h-1ZM1730 783h1V786h-1ZM1730 794h1V798.5h-1ZM1731 783h1V786.5h-1ZM1731 792h1V796.5h-1ZM1732 782.5h1V786h-1ZM1732 791h1V795h-1ZM1733 783h1V786.5h-1ZM1733 790h1V793.5h-1ZM1734 782.5h1V786h-1ZM1734 789h1V792.5h-1ZM1735 783h1V786.5h-1ZM1735 788h1V791.5h-1ZM1736 782.5h1V786h-1ZM1736 787.5h1V791h-1ZM1737 783h1V790h-1ZM1738 782.5h1V789.5h-1ZM1739 782.5h1V789h-1ZM1740 783h1V788.5h-1ZM1741 782.5h1V788h-1ZM1742 783h1V788h-1ZM1743 783h2V787.5h-2ZM1745 783h3V787h-3ZM1748 782.5h2V786.5h-2ZM1750 783h4V786.5h-4ZM1754 782.5h1V786h-1ZM1755 782h1V786h-1ZM1756 783h1V788h-1ZM1757 782.5h1V790h-1ZM1758 782.5h1V786h-1ZM1758 787h1V792h-1ZM1759 783h1V786.5h-1ZM1759 789h1V792h-1ZM1760 782.5h1V786h-1ZM1760 788.5h1V791.5h-1ZM1761 782h1V786h-1ZM1761 788h1V791h-1ZM1762 782.5h1V791h-1ZM1763 783h1V789h-1ZM1764 783h1V787.5h-1ZM1765 782.5h2V786h-2ZM1767 783h2V786h-2ZM1769 782.5h2V786h-2ZM1771 783h3V786.5h-3ZM1774 783h1V786h-1ZM1775 783h1V786.5h-1ZM1776 783h1V786h-1ZM1777 782.5h1V786h-1ZM1778 783h1V786.5h-1ZM1779 782.5h1V786h-1ZM1780 783h1V786h-1ZM1781 783h1V786.5h-1ZM1782 782.5h1V786h-1ZM1783 783h2V786.5h-2ZM1785 782.5h2V786h-2ZM1787 783h2V786.5h-2ZM1789 782.5h2V786h-2ZM1791 783h2V786h-2ZM1793 783h3V786.5h-3ZM1796 782.5h5V786h-5ZM1801 783h1V786.5h-1ZM1802 782.5h1V786h-1ZM1803 783h1V786h-1ZM1804 782.5h2V786h-2ZM1806 783h1V786.5h-1ZM1807 782.5h2V786h-2ZM1809 783h1V786.5h-1ZM1810 782.5h3V786h-3ZM1813 783h1V786.5h-1ZM1814 782.5h2V786h-2ZM1816 783h1V786.5h-1ZM1817 783h1V786h-1ZM1818 783h2V786.5h-2ZM1820 782.5h2V786h-2ZM1822 783h1V786h-1ZM1823 783h1V786.5h-1ZM1824 782.5h1V786h-1ZM1825 783h3V786.5h-3ZM1828 782.5h2V786h-2ZM1830 783h1V786.5h-1ZM1831 782.5h2V786h-2Z" fill="#c9a02a"/><path d="M268 782.5h1V789h-1ZM302 782.5h1V789h-1ZM309 779.5h2V783.5h-2ZM345 777h1V783.5h-1ZM354 782.5h1V790h-1ZM376 779.5h1V783.5h-1ZM380 781.5h1V783h-1ZM381 780h1V783h-1ZM382 777h1V783h-1ZM383 777.5h1V783h-1ZM385 777h1V783h-1ZM386 778h1V783h-1ZM387 770.5h1V783h-1ZM388 773h1V783h-1ZM389 776h1V783h-1ZM390 773h1V783h-1ZM391 777h1V783h-1ZM392 780h1V783h-1ZM393 779.5h1V783h-1ZM406 779h1V783.5h-1ZM414 782.5h1V790.5h-1ZM452 777.5h1V783.5h-1ZM454 782.5h1V790.5h-1ZM468 750h1V817h-1ZM469 777.5h1V788.5h-1ZM470 746h1V806h-1ZM471 777h1V788h-1ZM472 769h1V803h-1ZM473 775h1V790h-1ZM474 754h1V810h-1ZM475 779h1V785h-1ZM476 751h1V815h-1ZM477 780h1V790.5h-1ZM478 759h1V813h-1ZM479 779h1V790.5h-1ZM480 765.5h1V797.5h-1ZM481 777h1V784.5h-1ZM492 780.5h1V783.5h-1ZM495 772.5h1V783.5h-1ZM496 778.5h1V783.5h-1ZM502 690h1V833h-1ZM522 777h1V783.5h-1ZM526 778h1V783.5h-1ZM530 778h1V783.5h-1ZM540 777h1V783.5h-1ZM560 777.5h1V783.5h-1ZM577 782.5h1V788h-1ZM654 779h1V783.5h-1ZM659 778h1V783.5h-1ZM670 777.5h1V783.5h-1ZM672 782.5h1V790h-1ZM688 781.5h1V783h-1ZM690 776.5h1V783.5h-1ZM693 776.5h1V783h-1ZM695 778h1V783h-1ZM696 772h1V783h-1ZM697 772.5h1V783h-1ZM699 777.5h1V783h-1ZM700 778.5h1V783h-1ZM701 780.5h1V783h-1ZM712 778.5h1V783.5h-1ZM718 778.5h1V783.5h-1ZM760 782.5h1V788.5h-1ZM766 777h1V783.5h-1ZM778 749h1V816h-1ZM779 776h1V788.5h-1ZM780 746.5h1V806.5h-1ZM781 775h1V788.5h-1ZM782 766h1V800h-1ZM783 776h1V788h-1ZM784 753h1V809h-1ZM785 777h1V789h-1ZM786 751.5h1V815.5h-1ZM787 775.5h1V787.5h-1ZM788 760h1V814h-1ZM789 780.5h1V787h-1ZM790 770h1V802h-1ZM791 778.5h1V789.5h-1ZM799 779h1V783.5h-1ZM802 772.5h1V783.5h-1ZM810 760h1V894h-1ZM814 777.5h1V783.5h-1ZM827 778h1V783.5h-1ZM881 782.5h1V790h-1ZM889 779h1V783.5h-1ZM890 778.5h1V783.5h-1ZM998 781.5h1V783h-1ZM999 780h1V783h-1ZM1000 778h1V783.5h-1ZM1005 772h1V783h-1ZM1006 776.5h1V783h-1ZM1007 772h1V783h-1ZM1009 778h1V783h-1ZM1011 780h1V783h-1ZM1012 779h1V783.5h-1ZM1056 782.5h1V790h-1ZM1074 782.5h1V788.5h-1ZM1076 779.5h1V783.5h-1ZM1079 777h1V783.5h-1ZM1084 748.5h1V815.5h-1ZM1085 778.5h1V785h-1ZM1086 747h1V807h-1ZM1087 776h1V785h-1ZM1088 766.5h1V800.5h-1ZM1089 777h1V787.5h-1ZM1090 751.5h1V807.5h-1ZM1091 775.5h1V788.5h-1ZM1092 751h1V815h-1ZM1093 778h1V786h-1ZM1094 758h1V812h-1ZM1095 777h1V785.5h-1ZM1096 765.5h1V797.5h-1ZM1097 779h1V790h-1ZM1105 777.5h1V783.5h-1ZM1107 779h1V783.5h-1ZM1109 772.5h1V783.5h-1ZM1111 779.5h1V783.5h-1ZM1113 780h1V783.5h-1ZM1114 779h1V783.5h-1ZM1116 612h1V907h-1ZM1118 779.5h1V787.5h-1ZM1120 779.5h1V783.5h-1ZM1124 782.5h1V789.5h-1ZM1138 782.5h1V789h-1ZM1158 776.5h1V783.5h-1ZM1208 776.5h1V783.5h-1ZM1222 782.5h1V790.5h-1ZM1229 782.5h1V788h-1ZM1259 782.5h1V789.5h-1ZM1308 778.5h1V783h-1ZM1309 778.5h1V783.5h-1ZM1310 775.5h1V783h-1ZM1311 776.5h1V783h-1ZM1312 771.5h1V783h-1ZM1314 776.5h1V783h-1ZM1315 778h1V783h-1ZM1316 777.5h1V783h-1ZM1317 776.5h1V783h-1ZM1318 777.5h1V783h-1ZM1327 778h1V783.5h-1ZM1356 779h1V783.5h-1ZM1388 778h1V783.5h-1ZM1392 746.5h1V813.5h-1ZM1393 779.5h1V786.5h-1ZM1394 746.5h1V806.5h-1ZM1395 779.5h1V789.5h-1ZM1396 769h1V803h-1ZM1397 780h1V787h-1ZM1398 750h1V806h-1ZM1399 780.5h1V785h-1ZM1400 752h1V816h-1ZM1401 776.5h1V789h-1ZM1402 758h1V812h-1ZM1403 777h1V788h-1ZM1404 765.5h1V797.5h-1ZM1405 780.5h1V787h-1ZM1414 779h1V783.5h-1ZM1415 777h1V783.5h-1ZM1416 777.5h1V783.5h-1ZM1417 772.5h1V783.5h-1ZM1427 696h1V816h-1ZM1429 777h1V783.5h-1ZM1437 778.5h1V783.5h-1ZM1447 779.5h1V783.5h-1ZM1485 782.5h1V790h-1ZM1511 779.5h1V783.5h-1ZM1543 777.5h1V783.5h-1ZM1566 779h1V783.5h-1ZM1586 782.5h1V789.5h-1ZM1601 778h1V783.5h-1ZM1609 777h1V783.5h-1ZM1616 781.5h1V783h-1ZM1617 779h1V783h-1ZM1618 777.5h1V783h-1ZM1619 776h1V783h-1ZM1621 777.5h1V783h-1ZM1622 773.5h1V783h-1ZM1623 777h1V783h-1ZM1624 775.5h1V783h-1ZM1625 775h1V783h-1ZM1627 779.5h1V783h-1ZM1637 782.5h1V790.5h-1ZM1692 782.5h1V789h-1ZM1699 778h1V783.5h-1ZM1702 748.5h1V815.5h-1ZM1703 776.5h1V789h-1ZM1704 743.5h1V803.5h-1ZM1705 778h1V787h-1ZM1706 769h1V803h-1ZM1707 776h1V785.5h-1ZM1708 752.5h1V808.5h-1ZM1709 779h1V787h-1ZM1710 754h1V818h-1ZM1711 777.5h1V785h-1ZM1712 759.5h1V813.5h-1ZM1713 779h1V786h-1ZM1714 770.5h1V802.5h-1ZM1715 775.5h1V789.5h-1ZM1725 782.5h1V790.5h-1ZM1727 772.5h1V783.5h-1ZM1728 779h1V783.5h-1ZM1730 779h1V783.5h-1ZM1735 741h1V930h-1ZM1748 780h1V783.5h-1ZM1752 778.5h1V783.5h-1ZM1753 780h1V783.5h-1ZM1755 782.5h1V788.5h-1ZM1805 778h1V783.5h-1ZM1822 778h1V783.5h-1ZM1828 782.5h1V790h-1Z" fill="#d8102c"/><path d="M452.5 733.5 L459 740 L452.5 746.5 L446 740 Z" fill="#f4e41c" stroke="#8a7a20" stroke-width="0.8"/><path d="M190.5 109.5 H226.5 L234.5 118 L226.5 126.5 H190.5 Q187.5 126.5 187.5 123.5 V112.5 Q187.5 109.5 190.5 109.5 Z" fill="#fff" stroke="#1a5a92" stroke-width="1.2"/><path d="M226.5 109.5 L234.5 118 L226.5 126.5 Z" fill="#1a5a92"/><path d="M228 109.5 H265.5 L273.5 118 L265.5 126.5 H228 L235.5 118 Z" fill="#fff" stroke="#1e9040" stroke-width="1.2"/><path d="M265.5 109.5 L273.5 118 L265.5 126.5 Z" fill="#1e9040"/><path d="M1832.5 109.5 H1871 L1863.5 118 L1871 126.5 H1832.5 L1824.5 118 Z" fill="#fff" stroke="#c0a038" stroke-width="1.2"/><path d="M1832.5 109.5 L1824.5 118 L1832.5 126.5 Z" fill="#c09a20"/><path d="M1871.5 109.5 H1906 Q1909.5 109.5 1909.5 113 V123 Q1909.5 126.5 1906 126.5 H1871.5 L1863.5 118 Z" fill="#fff" stroke="#c8102a" stroke-width="1.2"/><path d="M1871.5 109.5 L1863.5 118 L1871.5 126.5 Z" fill="#e8102a"/><path d="M257 995 L265.5 987 L274 995 Z" fill="#1a5a92"/><path d="M241.5 1019 V999 Q241.5 995.5 245 995.5 H282 Q285.5 995.5 285.5 999 V1019" fill="none" stroke="#1a5a92" stroke-width="1"/><circle cx="1793.4" cy="144.4" r="6.9" fill="none" stroke="#0f5592" stroke-width="3"/><path d="M1790 144.4 H1796.8 M1793.4 141 V147.8" stroke="#0f5592" stroke-width="3"/><path d="M1798.5 149.5 L1806.8 157.8" stroke="#0f5592" stroke-width="5"/><path d="M1843 828.5 H1863" stroke="#c0a038" stroke-width="1"/><path d="M1882 898.5 H1901" stroke="#d0102a" stroke-width="1"/></svg>
<div class="t" style="left:198px;top:111px;font-size:14px;color:#1a5a92">30,0</div>
<div class="t" style="left:237px;top:111px;font-size:14px;color:#1e9040">20,0</div>
<div class="t" style="left:215px;top:130px;font-size:14px;color:#1a5a92">V</div>
<div class="t" style="left:254px;top:130px;font-size:14px;color:#1e9040">V</div>
<div class="t" style="left:1835px;top:111px;font-size:14px;color:#c0a038">40,5</div>
<div class="t" style="left:1835px;top:130px;font-size:14px;color:#c0a038">V</div>
<div class="t" style="left:165px;width:60px;text-align:right;top:197.48000000000002px;font-size:14.5px;letter-spacing:-0.3px;color:#1a5a92">20,0</div>
<div class="t" style="left:204px;width:60px;text-align:right;top:197.48000000000002px;font-size:14.5px;letter-spacing:-0.3px;color:#1e9040">16,0</div>
<div class="t" style="left:1834.5px;top:197.48000000000002px;font-size:14.5px;letter-spacing:-0.4px;color:#c0a038">35,5</div>
<div class="t" style="left:165px;width:60px;text-align:right;top:285.26px;font-size:14.5px;letter-spacing:-0.3px;color:#1a5a92">10,0</div>
<div class="t" style="left:204px;width:60px;text-align:right;top:285.26px;font-size:14.5px;letter-spacing:-0.3px;color:#1e9040">12,0</div>
<div class="t" style="left:1834.5px;top:285.26px;font-size:14.5px;letter-spacing:-0.4px;color:#c0a038">30,5</div>
<div class="t" style="left:165px;width:60px;text-align:right;top:373.04px;font-size:14.5px;letter-spacing:-0.3px;color:#1a5a92">0,0</div>
<div class="t" style="left:204px;width:60px;text-align:right;top:373.04px;font-size:14.5px;letter-spacing:-0.3px;color:#1e9040">8,0</div>
<div class="t" style="left:1834.5px;top:373.04px;font-size:14.5px;letter-spacing:-0.4px;color:#c0a038">25,5</div>
<div class="t" style="left:165px;width:60px;text-align:right;top:460.82px;font-size:14.5px;letter-spacing:-0.3px;color:#1a5a92">-10,0</div>
<div class="t" style="left:204px;width:60px;text-align:right;top:460.82px;font-size:14.5px;letter-spacing:-0.3px;color:#1e9040">4,0</div>
<div class="t" style="left:1834.5px;top:460.82px;font-size:14.5px;letter-spacing:-0.4px;color:#c0a038">20,5</div>
<div class="t" style="left:165px;width:60px;text-align:right;top:548.6px;font-size:14.5px;letter-spacing:-0.3px;color:#1a5a92">-20,0</div>
<div class="t" style="left:204px;width:60px;text-align:right;top:548.6px;font-size:14.5px;letter-spacing:-0.3px;color:#1e9040">0,0</div>
<div class="t" style="left:1834.5px;top:548.6px;font-size:14.5px;letter-spacing:-0.4px;color:#c0a038">15,5</div>
<div class="t" style="left:1873px;top:548.6px;font-size:14.5px;letter-spacing:-0.4px;color:#d0102a">3,9</div>
<div class="t" style="left:165px;width:60px;text-align:right;top:636.3800000000001px;font-size:14.5px;letter-spacing:-0.3px;color:#1a5a92">-30,0</div>
<div class="t" style="left:204px;width:60px;text-align:right;top:636.3800000000001px;font-size:14.5px;letter-spacing:-0.3px;color:#1e9040">-4,0</div>
<div class="t" style="left:1834.5px;top:636.3800000000001px;font-size:14.5px;letter-spacing:-0.4px;color:#c0a038">10,5</div>
<div class="t" style="left:1873px;top:636.3800000000001px;font-size:14.5px;letter-spacing:-0.4px;color:#d0102a">2,9</div>
<div class="t" style="left:165px;width:60px;text-align:right;top:724.1600000000001px;font-size:14.5px;letter-spacing:-0.3px;color:#1a5a92">-40,0</div>
<div class="t" style="left:204px;width:60px;text-align:right;top:724.1600000000001px;font-size:14.5px;letter-spacing:-0.3px;color:#1e9040">-8,0</div>
<div class="t" style="left:1834.5px;top:724.1600000000001px;font-size:14.5px;letter-spacing:-0.4px;color:#c0a038">5,5</div>
<div class="t" style="left:1873px;top:724.1600000000001px;font-size:14.5px;letter-spacing:-0.4px;color:#d0102a">1,9</div>
<div class="t" style="left:165px;width:60px;text-align:right;top:811.94px;font-size:14.5px;letter-spacing:-0.3px;color:#1a5a92">-50,0</div>
<div class="t" style="left:204px;width:60px;text-align:right;top:811.94px;font-size:14.5px;letter-spacing:-0.3px;color:#1e9040">-12,0</div>
<div class="t" style="left:1834.5px;top:811.94px;font-size:14.5px;letter-spacing:-0.4px;color:#c0a038">0,5</div>
<div class="t" style="left:1873px;top:811.94px;font-size:14.5px;letter-spacing:-0.4px;color:#d0102a">0,9</div>
<div class="t" style="left:204px;width:60px;text-align:right;top:899.72px;font-size:14.5px;letter-spacing:-0.3px;color:#1e9040">-16,0</div>
<div class="t" style="left:1834.5px;top:899.72px;font-size:14.5px;letter-spacing:-0.4px;color:#c0a038">-4,5</div>
<div class="t" style="left:1873px;top:899.72px;font-size:14.5px;letter-spacing:-0.4px;color:#d0102a">-0,1</div>
<div class="t" style="left:204px;width:60px;text-align:right;top:987.5px;font-size:14.5px;letter-spacing:-0.3px;color:#1e9040">-20,0</div>
<div class="t" style="left:1834.5px;top:987.5px;font-size:14.5px;letter-spacing:-0.4px;color:#c0a038">-9,5</div>
<div class="t" style="left:1873px;top:987.5px;font-size:14.5px;letter-spacing:-0.4px;color:#d0102a">-1,1</div>
<div class="t" style="left:1873px;top:433px;font-size:14px;color:#d0102a">V</div>
<div class="t" style="left:1873px;top:452px;font-size:14.5px;color:#d0102a">5,0</div>
<div class="t" style="left:412.20000000000005px;width:80px;text-align:center;top:1000px;font-size:14.5px;color:#111">0,0</div>
<div class="t" style="left:569.1px;width:80px;text-align:center;top:1000px;font-size:14.5px;color:#111">20,0</div>
<div class="t" style="left:726.0px;width:80px;text-align:center;top:1000px;font-size:14.5px;color:#111">40,0</div>
<div class="t" style="left:882.9000000000001px;width:80px;text-align:center;top:1000px;font-size:14.5px;color:#111">60,0</div>
<div class="t" style="left:1039.8px;width:80px;text-align:center;top:1000px;font-size:14.5px;color:#111">80,0</div>
<div class="t" style="left:1196.7px;width:80px;text-align:center;top:1000px;font-size:14.5px;color:#111">100,0</div>
<div class="t" style="left:1353.6px;width:80px;text-align:center;top:1000px;font-size:14.5px;color:#111">120,0</div>
<div class="t" style="left:1510.5px;width:80px;text-align:center;top:1000px;font-size:14.5px;color:#111">140,0</div>
<div class="t" style="left:1667.4px;width:80px;text-align:center;top:1000px;font-size:14.5px;color:#111">160,0</div>
<div class="t" style="left:279px;top:1000px;font-size:14.5px;color:#111">-20,0 ms</div>
<div class="a" style="left:0;top:1019px;width:1911px;height:2px;background:#2b3036"></div></body></html>
